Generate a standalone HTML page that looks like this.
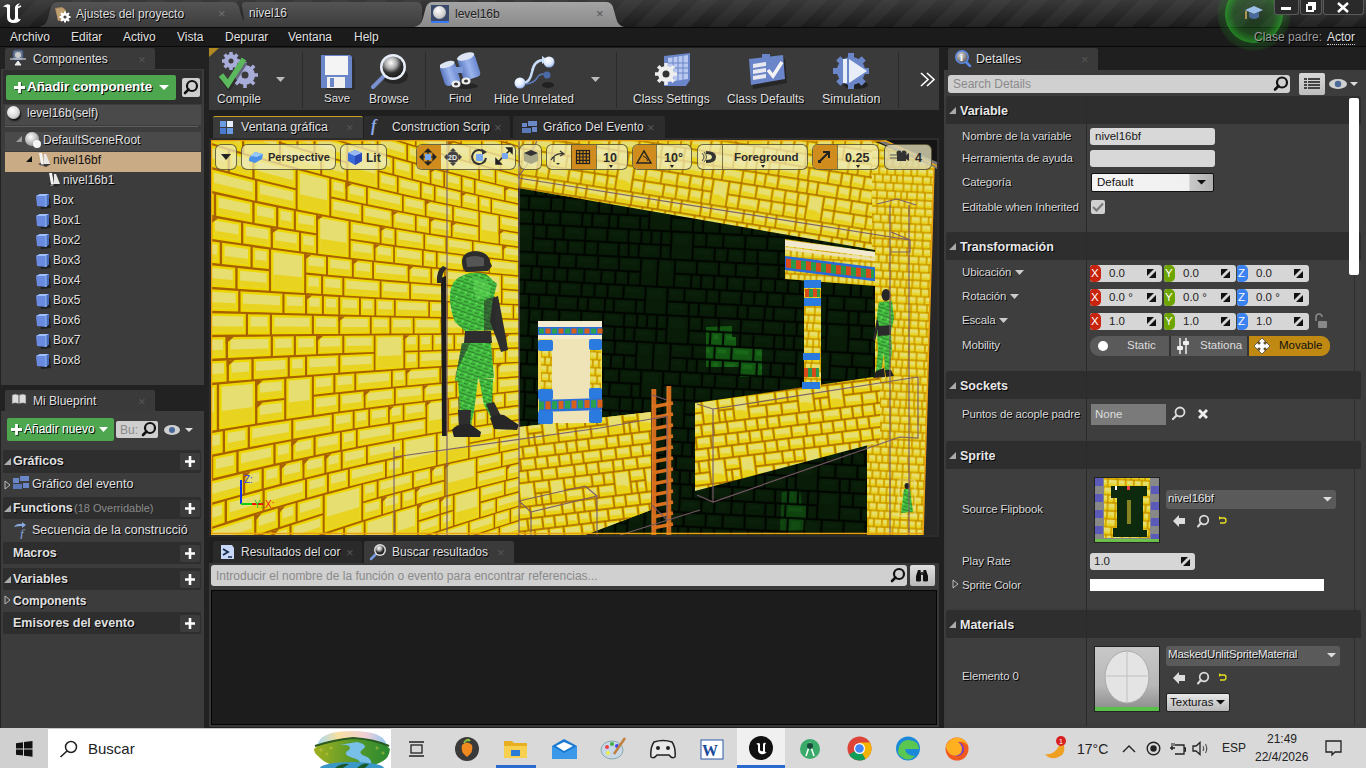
<!DOCTYPE html>
<html><head><meta charset="utf-8">
<style>
*{margin:0;padding:0;box-sizing:border-box}
html,body{width:1366px;height:768px;overflow:hidden;background:#1f1f1f;font-family:"Liberation Sans",sans-serif;color:#d8d8d8;font-size:12px;position:relative}
.a{position:absolute}
.t{position:absolute;white-space:nowrap;line-height:1}
.sh{text-shadow:1px 1px 0 #000}
.b{font-weight:bold}
.x{position:absolute;color:#707070;font-size:13px;line-height:1}
</style></head><body>
<!-- TITLE BAR -->
<div class="a" style="left:0;top:0;width:1366px;height:28px;background:linear-gradient(rgba(70,70,70,.55),rgba(0,0,0,.35)),repeating-linear-gradient(135deg,#353535 0 13px,#282828 13px 26px)"></div>
<svg class="a" style="left:1px;top:1px" width="24" height="24"><path d="M2 6 Q5 2 9 4 L9 15 Q9 19 12 19 Q14 19 14 16 L14 6 Q15 3 19 2 L17 5 L17 16 Q17 19 20 18 Q18 22 13 22 Q6 22 6 16 L6 7 Q5 5 2 6Z" fill="#fff"/><path d="M14 8 L20 5" stroke="#fff" stroke-width="1.5"/></svg>
<!-- tabs -->
<svg class="a" style="left:36px;top:0" width="600" height="28">
<defs>
<linearGradient id="tg1" x1="0" y1="0" x2="0" y2="1"><stop offset="0" stop-color="#545454"/><stop offset="1" stop-color="#3c3c3c"/></linearGradient>
<linearGradient id="tg3" x1="0" y1="0" x2="0" y2="1"><stop offset="0" stop-color="#a4a4a4"/><stop offset="1" stop-color="#8a8a8a"/></linearGradient>
</defs>
<path d="M3 27 Q10 26 12 18 L15 7 Q17 2 22 2 L196 2 Q201 2 203 7 L206 18 Q208 26 215 27Z" fill="url(#tg1)"/>
<path d="M200 27 Q207 26 208 18 L206 7 Q205 2 210 2 L380 2 Q385 2 386 7 L386 18 Q385 26 378 27Z" fill="url(#tg1)"/>
<path d="M378 27 Q385 26 387 18 L390 7 Q392 2 397 2 L570 2 Q575 2 577 7 L580 18 Q582 26 588 27Z" fill="url(#tg3)"/>
</svg>
<svg class="a" style="left:54px;top:6px" width="18" height="17"><path d="M1 2 L8 1 L12 4 L12 14 L4 15 Z" fill="#a88a60"/><path d="M2 3 L9 2 L11 5 L10 13 L4 14Z" fill="#c0a070"/><circle cx="11" cy="11" r="4" fill="#fff"/><g stroke="#fff" stroke-width="2"><path d="M11 5.5 V16.5 M5.5 11 H16.5 M7 7 L15 15 M15 7 L7 15"/></g><circle cx="11" cy="11" r="1.6" fill="#444"/></svg>
<div class="t sh" style="left:76px;top:8px;color:#dcdcdc">Ajustes del proyecto</div>
<div class="x" style="left:218px;top:7px">×</div>
<div class="t sh" style="left:249px;top:7px;color:#dcdcdc">nivel16</div>
<div class="a" style="left:431px;top:5px;width:18px;height:18px;background:#3a4a6a;border-bottom:2px solid #3a7af0"></div>
<div class="a" style="left:433px;top:6px;width:13px;height:13px;border-radius:50%;background:radial-gradient(circle at 40% 35%,#fff,#ccc 60%,#888)"></div>
<div class="t" style="left:455px;top:8px;color:#202020;text-shadow:0 1px 0 #bbb">level16b</div>
<div class="x" style="left:596px;top:7px;color:#555">×</div>

<!-- window buttons -->
<div class="a" style="z-index:5;left:1274px;top:0;width:25px;height:15px;border:1px solid #5a5a5a;border-top:none;border-radius:0 0 3px 3px;background:#2a2a2a"></div>
<div class="a" style="z-index:5;left:1281px;top:7px;width:10px;height:3px;background:#fff"></div>
<div class="a" style="z-index:5;left:1300px;top:0;width:22px;height:15px;border:1px solid #5a5a5a;border-top:none;border-radius:0 0 3px 3px;background:#2a2a2a"></div>
<div class="a" style="z-index:5;left:1308px;top:2px;width:8px;height:8px;border:2px solid #fff"></div>
<div class="a" style="z-index:5;left:1306px;top:4px;width:8px;height:8px;border:2px solid #fff;background:#2a2a2a"></div>
<div class="a" style="z-index:5;left:1323px;top:0;width:41px;height:15px;border:1px solid #5a5a5a;border-top:none;border-radius:0 0 3px 3px;background:#2a2a2a"></div>
<svg class="a" style="z-index:5;left:1337px;top:2px" width="12" height="11"><path d="M1 1 L11 10 M11 1 L1 10" stroke="#fff" stroke-width="2.5"/></svg>

<!-- MENU BAR -->
<div class="a" style="left:0;top:27px;width:1366px;height:20px;background:#1b1b1b;border-top:1px solid #080808;border-bottom:1px solid #080808"></div>
<!-- green glow + cap -->
<div class="a" style="left:1217px;top:-23px;width:74px;height:74px;border-radius:50%;background:radial-gradient(circle closest-side,rgba(40,160,40,.12) 0,rgba(40,170,40,.3) 55%,rgba(40,190,40,.62) 77%,rgba(30,130,30,.3) 79%,rgba(30,120,30,.2) 97%,rgba(0,0,0,0) 100%)"></div>
<svg class="a" style="left:1244px;top:4px" width="20" height="18"><path d="M1 6 L10 2 L19 6 L10 10Z" fill="#9cc0e8"/><path d="M5 8 L5 13 Q10 17 15 13 L15 8 L10 10Z" fill="#4a6a9a"/><path d="M2 7 L2 15" stroke="#d8b060" stroke-width="1.5"/></svg>
<div class="t sh" style="left:10px;top:31px;color:#e0e0e0">Archivo</div>
<div class="t sh" style="left:71px;top:31px;color:#e0e0e0">Editar</div>
<div class="t sh" style="left:123px;top:31px;color:#e0e0e0">Activo</div>
<div class="t sh" style="left:177px;top:31px;color:#e0e0e0">Vista</div>
<div class="t sh" style="left:225px;top:31px;color:#e0e0e0">Depurar</div>
<div class="t sh" style="left:288px;top:31px;color:#e0e0e0">Ventana</div>
<div class="t sh" style="left:354px;top:31px;color:#e0e0e0">Help</div>
<div class="t sh" style="left:1254px;top:31px;color:#9a9a9a">Clase padre:</div>
<div class="t sh" style="left:1327px;top:31px;color:#e0e0e0;border-bottom:1px dotted #ccc;padding-bottom:1px">Actor</div>

<!-- LEFT PANEL -->
<div class="a" style="left:0;top:47px;width:209px;height:681px;background:#222"></div>
<div class="a" style="left:5px;top:48px;width:150px;height:22px;background:#3a3a3a;border-radius:2px 2px 0 0"></div>
<svg class="a" style="left:9px;top:49px" width="18" height="18"><rect x="4" y="1" width="10" height="10" rx="2" fill="#6a7a90" stroke="#3a4a70"/><circle cx="9" cy="6" r="3" fill="#ccc"/><path d="M1 10 L17 10 M9 12 L6 16 L12 16Z" stroke="#eee" fill="#eee"/></svg>
<div class="t sh" style="left:33px;top:53px;color:#e0e0e0">Componentes</div>
<div class="x" style="left:138px;top:53px;color:#555">×</div>
<div class="a" style="left:1px;top:69px;width:203px;height:316px;background:#3c3c3c"></div>
<div class="a" style="left:3px;top:70px;width:199px;height:34px;background:#2e2e2e"></div>
<div class="a" style="left:6px;top:75px;width:170px;height:25px;background:#4ea64e;border-radius:2px"></div>
<svg class="a" style="left:13px;top:81px" width="13" height="13"><path d="M6.5 1 V12 M1 6.5 H12" stroke="#111" stroke-width="3" transform="translate(1,1)" opacity=".6"/><path d="M6.5 1 V12 M1 6.5 H12" stroke="#fff" stroke-width="2.8"/></svg>
<div class="t b sh" style="left:27px;top:80px;color:#fff;font-size:13.5px;letter-spacing:-.1px">Añadir componente</div>
<svg class="a" style="left:159px;top:85px" width="10" height="6"><path d="M0 0 L10 0 L5 5Z" fill="#fff"/></svg>
<div class="a" style="left:182px;top:78px;width:18px;height:19px;background:#cfcfcf;border-radius:2px"></div>
<svg class="a" style="left:183px;top:79px" width="16" height="17"><circle cx="9" cy="7" r="5" fill="none" stroke="#111" stroke-width="2.2"/><path d="M5.5 10.5 L2 14" stroke="#111" stroke-width="2.6" stroke-linecap="round"/></svg>
<div class="a" style="left:5px;top:105px;width:196px;height:20px;background:#4a4a4a"></div>
<div class="a" style="left:5px;top:126px;width:193px;height:1px;background:#606060"></div>
<div class="a" style="left:7px;top:106px;width:13px;height:13px;border-radius:50%;background:radial-gradient(circle at 40% 35%,#fff,#ddd 50%,#999);box-shadow:1px 2px 2px #111"></div>
<div class="t sh" style="left:27px;top:107px;color:#e0e0e0">level16b(self)</div>
<div class="a" style="left:5px;top:132px;width:196px;height:19px;background:#4a4a4a"></div>
<svg class="a" style="left:15px;top:135px" width="8" height="8"><path d="M7 1 L7 7 L1 7Z" fill="#9a9a9a"/></svg>
<div class="a" style="left:25px;top:132px;width:14px;height:14px;border-radius:50%;background:radial-gradient(circle at 40% 35%,#fff,#bbb 50%,#777)"></div>
<div class="a" style="left:33px;top:140px;width:8px;height:8px;border-radius:50%;background:#f4f4f4"></div>
<div class="t sh" style="left:43px;top:134px;color:#e0e0e0">DefaultSceneRoot</div>
<div class="a" style="left:5px;top:152px;width:196px;height:20px;background:#c9ab86"></div>
<svg class="a" style="left:25px;top:155px" width="8" height="8"><path d="M7 1 L7 7 L1 7Z" fill="#111"/></svg>
<svg class="a" style="left:36px;top:152px" width="16" height="16"><path d="M2 12 L10 15 L15 12 L7 10Z" fill="#222" opacity=".8"/><path d="M3 1 L6 1 L8 12 L5 12Z" fill="#f4f4f4"/><path d="M8 2 L10 2 L14 12 L8 12Z" fill="#e8e8e8"/><path d="M5 12 L8 12 L7 14 L4 14Z" fill="#888"/></svg>
<div class="t" style="left:53px;top:154px;color:#111">nivel16bf</div>
<svg class="a" style="left:46px;top:172px" width="16" height="16"><path d="M2 12 L10 15 L15 12 L7 10Z" fill="#222" opacity=".8"/><path d="M3 1 L6 1 L8 12 L5 12Z" fill="#f4f4f4"/><path d="M8 2 L10 2 L14 12 L8 12Z" fill="#e8e8e8"/><path d="M5 12 L8 12 L7 14 L4 14Z" fill="#888"/></svg>
<div class="t sh" style="left:63px;top:174px;color:#e0e0e0">nivel16b1</div>
<svg class="a" style="left:35px;top:193px" width="17" height="17"><path d="M4 6 L15 5 L16 15 L6 16Z" fill="#111" opacity=".7"/><path d="M1 3 L5 1 L14 1 L14 11 L11 14 L2 13Z" fill="#6a8ae0"/><path d="M1 3 L5 1 L14 1 L11 3Z" fill="#a0c0f8"/><path d="M11 3 L14 1 L14 11 L11 14Z" fill="#4a6ac0"/><path d="M11 3 L11 14" stroke="#9ad0f0" stroke-width=".8"/></svg>
<div class="t sh" style="left:53px;top:194px;color:#e0e0e0">Box</div>
<svg class="a" style="left:35px;top:213px" width="17" height="17"><path d="M4 6 L15 5 L16 15 L6 16Z" fill="#111" opacity=".7"/><path d="M1 3 L5 1 L14 1 L14 11 L11 14 L2 13Z" fill="#6a8ae0"/><path d="M1 3 L5 1 L14 1 L11 3Z" fill="#a0c0f8"/><path d="M11 3 L14 1 L14 11 L11 14Z" fill="#4a6ac0"/><path d="M11 3 L11 14" stroke="#9ad0f0" stroke-width=".8"/></svg>
<div class="t sh" style="left:53px;top:214px;color:#e0e0e0">Box1</div>
<svg class="a" style="left:35px;top:233px" width="17" height="17"><path d="M4 6 L15 5 L16 15 L6 16Z" fill="#111" opacity=".7"/><path d="M1 3 L5 1 L14 1 L14 11 L11 14 L2 13Z" fill="#6a8ae0"/><path d="M1 3 L5 1 L14 1 L11 3Z" fill="#a0c0f8"/><path d="M11 3 L14 1 L14 11 L11 14Z" fill="#4a6ac0"/><path d="M11 3 L11 14" stroke="#9ad0f0" stroke-width=".8"/></svg>
<div class="t sh" style="left:53px;top:234px;color:#e0e0e0">Box2</div>
<svg class="a" style="left:35px;top:253px" width="17" height="17"><path d="M4 6 L15 5 L16 15 L6 16Z" fill="#111" opacity=".7"/><path d="M1 3 L5 1 L14 1 L14 11 L11 14 L2 13Z" fill="#6a8ae0"/><path d="M1 3 L5 1 L14 1 L11 3Z" fill="#a0c0f8"/><path d="M11 3 L14 1 L14 11 L11 14Z" fill="#4a6ac0"/><path d="M11 3 L11 14" stroke="#9ad0f0" stroke-width=".8"/></svg>
<div class="t sh" style="left:53px;top:254px;color:#e0e0e0">Box3</div>
<svg class="a" style="left:35px;top:273px" width="17" height="17"><path d="M4 6 L15 5 L16 15 L6 16Z" fill="#111" opacity=".7"/><path d="M1 3 L5 1 L14 1 L14 11 L11 14 L2 13Z" fill="#6a8ae0"/><path d="M1 3 L5 1 L14 1 L11 3Z" fill="#a0c0f8"/><path d="M11 3 L14 1 L14 11 L11 14Z" fill="#4a6ac0"/><path d="M11 3 L11 14" stroke="#9ad0f0" stroke-width=".8"/></svg>
<div class="t sh" style="left:53px;top:274px;color:#e0e0e0">Box4</div>
<svg class="a" style="left:35px;top:293px" width="17" height="17"><path d="M4 6 L15 5 L16 15 L6 16Z" fill="#111" opacity=".7"/><path d="M1 3 L5 1 L14 1 L14 11 L11 14 L2 13Z" fill="#6a8ae0"/><path d="M1 3 L5 1 L14 1 L11 3Z" fill="#a0c0f8"/><path d="M11 3 L14 1 L14 11 L11 14Z" fill="#4a6ac0"/><path d="M11 3 L11 14" stroke="#9ad0f0" stroke-width=".8"/></svg>
<div class="t sh" style="left:53px;top:294px;color:#e0e0e0">Box5</div>
<svg class="a" style="left:35px;top:313px" width="17" height="17"><path d="M4 6 L15 5 L16 15 L6 16Z" fill="#111" opacity=".7"/><path d="M1 3 L5 1 L14 1 L14 11 L11 14 L2 13Z" fill="#6a8ae0"/><path d="M1 3 L5 1 L14 1 L11 3Z" fill="#a0c0f8"/><path d="M11 3 L14 1 L14 11 L11 14Z" fill="#4a6ac0"/><path d="M11 3 L11 14" stroke="#9ad0f0" stroke-width=".8"/></svg>
<div class="t sh" style="left:53px;top:314px;color:#e0e0e0">Box6</div>
<svg class="a" style="left:35px;top:333px" width="17" height="17"><path d="M4 6 L15 5 L16 15 L6 16Z" fill="#111" opacity=".7"/><path d="M1 3 L5 1 L14 1 L14 11 L11 14 L2 13Z" fill="#6a8ae0"/><path d="M1 3 L5 1 L14 1 L11 3Z" fill="#a0c0f8"/><path d="M11 3 L14 1 L14 11 L11 14Z" fill="#4a6ac0"/><path d="M11 3 L11 14" stroke="#9ad0f0" stroke-width=".8"/></svg>
<div class="t sh" style="left:53px;top:334px;color:#e0e0e0">Box7</div>
<svg class="a" style="left:35px;top:353px" width="17" height="17"><path d="M4 6 L15 5 L16 15 L6 16Z" fill="#111" opacity=".7"/><path d="M1 3 L5 1 L14 1 L14 11 L11 14 L2 13Z" fill="#6a8ae0"/><path d="M1 3 L5 1 L14 1 L11 3Z" fill="#a0c0f8"/><path d="M11 3 L14 1 L14 11 L11 14Z" fill="#4a6ac0"/><path d="M11 3 L11 14" stroke="#9ad0f0" stroke-width=".8"/></svg>
<div class="t sh" style="left:53px;top:354px;color:#e0e0e0">Box8</div>

<!-- MI BLUEPRINT -->
<div class="a" style="left:5px;top:390px;width:150px;height:22px;background:#3a3a3a;border-radius:2px 2px 0 0"></div>
<svg class="a" style="left:11px;top:392px" width="16" height="14"><path d="M1 3 Q4 1 8 3 Q12 1 15 3 L15 12 Q12 10 8 12 Q4 10 1 12Z" fill="#ddd" stroke="#555" stroke-width=".7"/><path d="M8 3 L8 12" stroke="#555"/></svg>
<div class="t sh" style="left:33px;top:395px;color:#e0e0e0">Mi Blueprint</div>
<div class="x" style="left:138px;top:395px;color:#555">×</div>
<div class="a" style="left:1px;top:411px;width:203px;height:317px;background:#3c3c3c"></div>
<div class="a" style="left:7px;top:418px;width:107px;height:23px;background:#4ea64e;border-radius:2px"></div>
<svg class="a" style="left:10px;top:423px" width="13" height="13"><path d="M6.5 1 V12 M1 6.5 H12" stroke="#111" stroke-width="3" transform="translate(1,1)" opacity=".6"/><path d="M6.5 1 V12 M1 6.5 H12" stroke="#fff" stroke-width="2.8"/></svg>
<div class="t sh" style="left:24px;top:423px;color:#fff">Añadir nuevo</div>
<svg class="a" style="left:99px;top:427px" width="9" height="6"><path d="M0 0 L9 0 L4.5 5Z" fill="#fff"/></svg>
<div class="a" style="left:116px;top:421px;width:42px;height:17px;background:#cfcfcf;border-radius:2px"></div>
<div class="t" style="left:120px;top:424px;color:#8a8a8a">Bu:</div>
<svg class="a" style="left:141px;top:421px" width="16" height="17"><circle cx="9" cy="7" r="5" fill="none" stroke="#111" stroke-width="2.2"/><path d="M5.5 10.5 L2 14" stroke="#111" stroke-width="2.6" stroke-linecap="round"/></svg>
<svg class="a" style="left:163px;top:423px" width="32" height="14"><ellipse cx="9" cy="7" rx="8" ry="5" fill="#d0d0d0"/><circle cx="9" cy="7" r="3" fill="#4a6a9a"/><path d="M22 5 L30 5 L26 9Z" fill="#ddd"/></svg>
<div class="a" style="left:3px;top:450px;width:198px;height:23px;background:#2e2e2e;border-radius:2px"></div>
<svg class="a" style="left:4px;top:458px" width="8" height="8"><path d="M7 0 L7 7 L0 7Z" fill="#aaa"/></svg>
<div class="t b sh" style="left:13px;top:455px;color:#e0e0e0;font-size:12.5px">Gráficos</div>
<div class="a" style="left:180px;top:453px;width:20px;height:17px;background:#3c3c3c;border-radius:2px"></div><svg class="a" style="left:184px;top:455px" width="12" height="13"><path d="M6 1 L6 12 M1 6.5 L11 6.5" stroke="#fff" stroke-width="2.6"/></svg>
<div class="a" style="left:3px;top:497px;width:198px;height:22px;background:#2e2e2e;border-radius:2px"></div>
<svg class="a" style="left:4px;top:505px" width="8" height="8"><path d="M7 0 L7 7 L0 7Z" fill="#aaa"/></svg>
<div class="t b sh" style="left:13px;top:502px;color:#e0e0e0;font-size:12.5px">Functions</div>
<div class="a" style="left:180px;top:500px;width:20px;height:17px;background:#3c3c3c;border-radius:2px"></div><svg class="a" style="left:184px;top:502px" width="12" height="13"><path d="M6 1 L6 12 M1 6.5 L11 6.5" stroke="#fff" stroke-width="2.6"/></svg>
<div class="a" style="left:3px;top:542px;width:198px;height:22px;background:#2e2e2e;border-radius:2px"></div>
<div class="t b sh" style="left:13px;top:547px;color:#e0e0e0;font-size:12.5px">Macros</div>
<div class="a" style="left:180px;top:545px;width:20px;height:17px;background:#3c3c3c;border-radius:2px"></div><svg class="a" style="left:184px;top:547px" width="12" height="13"><path d="M6 1 L6 12 M1 6.5 L11 6.5" stroke="#fff" stroke-width="2.6"/></svg>
<div class="a" style="left:3px;top:568px;width:198px;height:22px;background:#2e2e2e;border-radius:2px"></div>
<svg class="a" style="left:4px;top:576px" width="8" height="8"><path d="M7 0 L7 7 L0 7Z" fill="#aaa"/></svg>
<div class="t b sh" style="left:13px;top:573px;color:#e0e0e0;font-size:12.5px">Variables</div>
<div class="a" style="left:180px;top:571px;width:20px;height:17px;background:#3c3c3c;border-radius:2px"></div><svg class="a" style="left:184px;top:573px" width="12" height="13"><path d="M6 1 L6 12 M1 6.5 L11 6.5" stroke="#fff" stroke-width="2.6"/></svg>
<div class="a" style="left:3px;top:612px;width:198px;height:22px;background:#2e2e2e;border-radius:2px"></div>
<div class="t b sh" style="left:13px;top:617px;color:#e0e0e0;font-size:12.5px">Emisores del evento</div>
<div class="a" style="left:180px;top:615px;width:20px;height:17px;background:#3c3c3c;border-radius:2px"></div><svg class="a" style="left:184px;top:617px" width="12" height="13"><path d="M6 1 L6 12 M1 6.5 L11 6.5" stroke="#fff" stroke-width="2.6"/></svg>

<div class="t" style="left:74px;top:503px;color:#8a8a8a;font-size:11px">(18 Overridable)</div>
<svg class="a" style="left:4px;top:480px" width="8" height="10"><path d="M1 1 L6 5 L1 9Z" fill="none" stroke="#bbb"/></svg>
<svg class="a" style="left:12px;top:475px" width="18" height="16"><rect x="1" y="3" width="6" height="5" fill="#6a88c8"/><rect x="8" y="1" width="9" height="5" fill="#6a88c8"/><rect x="1" y="9" width="9" height="5" fill="#5a78b8"/><rect x="11" y="8" width="6" height="5" fill="#6a88c8"/></svg>
<div class="t sh" style="left:32px;top:478px;color:#e0e0e0;font-size:12.5px">Gráfico del evento</div>
<svg class="a" style="left:12px;top:521px" width="18" height="18"><path d="M2 6 Q5 2 10 3 L10 1 L14 4 L10 7 L10 5 Q6 5 2 6Z" fill="#88a8e0"/><text x="8" y="17" font-family="Liberation Serif" font-style="italic" font-size="13" fill="#88a8e0">f</text></svg>
<div class="t sh" style="left:32px;top:524px;color:#e0e0e0;font-size:12.5px">Secuencia de la construcció</div>
<svg class="a" style="left:4px;top:595px" width="8" height="10"><path d="M1 1 L6 5 L1 9Z" fill="none" stroke="#bbb"/></svg>
<div class="t b sh" style="left:13px;top:595px;color:#e0e0e0;font-size:12px">Components</div>

<!-- TOOLBAR -->
<div class="a" style="left:209px;top:48px;width:730px;height:62px;background:#3a3a3a"></div>
<svg class="a" style="left:209px;top:48px" width="11" height="10"><path d="M0 0 L10 0 L0 9Z" fill="#b08a20"/></svg>
<div class="a" style="left:302px;top:52px;width:1px;height:56px;background:#2a2a2a"></div>
<div class="a" style="left:425px;top:52px;width:1px;height:56px;background:#2a2a2a"></div>
<div class="a" style="left:616px;top:52px;width:1px;height:56px;background:#2a2a2a"></div>
<div class="a" style="left:898px;top:52px;width:1px;height:56px;background:#2a2a2a"></div>
<!-- compile icon -->
<svg class="a" style="left:218px;top:51px" width="44" height="40">
<g fill="#a8acd8"><circle cx="13" cy="10" r="7"/><circle cx="27" cy="24" r="10"/></g>
<g stroke="#a8acd8" stroke-width="3.5"><path d="M13 1 V19 M4 10 H22 M6.6 3.6 L19.4 16.4 M19.4 3.6 L6.6 16.4"/><path d="M27 11 V37 M14 24 H40 M17.8 14.8 L36.2 33.2 M36.2 14.8 L17.8 33.2"/></g>
<circle cx="13" cy="10" r="2.5" fill="#3a3a3a"/><circle cx="27" cy="24" r="3.5" fill="#3a3a3a"/>
<path d="M3 25 L10 34 L26 9" stroke="#222" stroke-width="6" fill="none" opacity=".5" transform="translate(1,2)"/>
<path d="M3 24 L10 33 L26 8" stroke="#5cb85c" stroke-width="5.5" fill="none"/>
</svg>
<div class="t sh" style="left:217px;top:93px;color:#e0e0e0;font-size:12px">Compile</div>
<svg class="a" style="left:276px;top:77px" width="10" height="6"><path d="M0 0 L9 0 L4.5 5Z" fill="#bbb"/></svg>
<!-- save -->
<svg class="a" style="left:320px;top:54px" width="36" height="36">
<path d="M3 3 L31 3 L33 5 L33 35 L5 35 L3 33Z" fill="#222" opacity=".5" transform="translate(2,1)"/>
<path d="M1 1 L30 1 L32 3 L32 34 L1 34Z" fill="#6a86c8"/>
<rect x="5" y="2" width="23" height="19" fill="#f4f4f4"/>
<rect x="7" y="23" width="18" height="11" fill="#f0f0f0"/><rect x="10" y="24" width="4" height="9" fill="#6a86c8"/>
</svg>
<div class="t sh" style="left:324px;top:93px;color:#e0e0e0;font-size:11.5px">Save</div>
<!-- browse -->
<svg class="a" style="left:369px;top:52px" width="42" height="40">
<ellipse cx="26" cy="24" rx="13" ry="8" fill="#111" opacity=".5"/>
<path d="M17 22 L4 35" stroke="#7890d0" stroke-width="4" stroke-linecap="round"/>
<circle cx="24" cy="15" r="13" fill="#e8eef8"/>
<circle cx="24" cy="15" r="10.5" fill="url(#bg1)"/>
<defs><radialGradient id="bg1" cx=".4" cy=".3" r=".8"><stop offset="0" stop-color="#fff"/><stop offset=".35" stop-color="#aaa"/><stop offset=".6" stop-color="#333"/><stop offset="1" stop-color="#111"/></radialGradient></defs>
</svg>
<div class="t sh" style="left:369px;top:93px;color:#e0e0e0;font-size:12px">Browse</div>
<!-- find -->
<svg class="a" style="left:440px;top:52px" width="42" height="38">
<defs><linearGradient id="bn" x1="0" y1="0" x2="1" y2="0"><stop offset="0" stop-color="#5a78c0"/><stop offset=".5" stop-color="#9ab4ec"/><stop offset="1" stop-color="#6a88d0"/></linearGradient></defs>
<ellipse cx="26" cy="34" rx="12" ry="3" fill="#111" opacity=".5"/>
<g transform="rotate(-18 29 15)"><rect x="20" y="3" width="18" height="24" rx="4" fill="url(#bn)"/><ellipse cx="29" cy="4" rx="9" ry="3.5" fill="#dde4f4"/></g>
<g transform="rotate(-18 10 22)"><rect x="2" y="11" width="16" height="22" rx="4" fill="url(#bn)"/><ellipse cx="10" cy="12" rx="8" ry="3" fill="#dde4f4"/></g>
<rect x="15" y="15" width="8" height="6" fill="#7c98d8"/>
<ellipse cx="16" cy="32" rx="4.5" ry="3.5" fill="#eee"/><ellipse cx="26" cy="29" rx="4.5" ry="3.5" fill="#eee"/>
<ellipse cx="16" cy="32" rx="2" ry="1.5" fill="#333"/><ellipse cx="26" cy="29" rx="2" ry="1.5" fill="#333"/>
</svg>
<div class="t sh" style="left:449px;top:93px;color:#e0e0e0;font-size:11.5px">Find</div>
<!-- hide unrelated -->
<svg class="a" style="left:512px;top:52px" width="44" height="40">
<path d="M12 31 Q18 30 20 20 Q22 8 32 8" stroke="#c8dcf8" stroke-width="2.5" fill="none"/><path d="M30 4 L36 8 L30 12Z" fill="#c8dcf8"/>
<path d="M14 32 Q22 31 25 26 Q27 22 32 22" stroke="#5a7ab8" stroke-width="1.5" fill="none"/>
<ellipse cx="36" cy="33" rx="6" ry="3" fill="#111" opacity=".6"/>
<circle cx="37" cy="10" r="5.5" fill="url(#hs1)"/><circle cx="35" cy="23" r="3.5" fill="#4a6aa8"/><circle cx="8" cy="31" r="5.5" fill="url(#hs1)"/>
<defs><radialGradient id="hs1" cx=".4" cy=".35" r=".7"><stop offset="0" stop-color="#fff"/><stop offset=".6" stop-color="#dde8ff"/><stop offset="1" stop-color="#8aa8e8"/></radialGradient></defs>
</svg>
<div class="t sh" style="left:494px;top:93px;color:#e0e0e0;font-size:12px">Hide Unrelated</div>
<svg class="a" style="left:591px;top:77px" width="10" height="6"><path d="M0 0 L9 0 L4.5 5Z" fill="#bbb"/></svg>
<!-- class settings -->
<svg class="a" style="left:650px;top:52px" width="44" height="38">
<path d="M14 4 L40 1 L40 28 L36 34 L14 34Z" fill="#6a86c8"/>
<path d="M18 6 L38 3 L38 27 L18 30Z" fill="#b8c8f0"/>
<g stroke="#6a86c8" stroke-width="1"><path d="M23 5 V30 M28 4 V29 M33 3 V28 M18 11 H38 M18 16 H38 M18 21 H38"/></g>
<circle cx="16" cy="22" r="8" fill="#eee"/><g stroke="#eee" stroke-width="3.5"><path d="M16 11 V33 M5 22 H27 M8.2 14.2 L23.8 29.8 M23.8 14.2 L8.2 29.8"/></g>
<circle cx="16" cy="22" r="3.5" fill="#333"/>
</svg>
<div class="t sh" style="left:633px;top:93px;color:#e0e0e0;font-size:12px">Class Settings</div>
<!-- class defaults -->
<svg class="a" style="left:746px;top:53px" width="42" height="36">
<path d="M4 8 L38 4 L40 28 L6 34Z" fill="#111" opacity=".5" transform="translate(1,2)"/>
<path d="M3 6 L37 2 L39 26 L5 32Z" fill="#6a86c8"/>
<rect x="16" y="1" width="8" height="4" fill="#6a86c8"/>
<g fill="#e8e8f0"><path d="M7 11 L20 9 L20 13 L7 15Z"/><path d="M7 17 L20 15 L20 19 L7 21Z"/><path d="M7 23 L20 21 L20 25 L7 27Z"/></g>
<path d="M22 17 L27 23 L36 9" stroke="#f4f4f4" stroke-width="3.5" fill="none"/>
</svg>
<div class="t sh" style="left:727px;top:93px;color:#e0e0e0;font-size:12px">Class Defaults</div>
<!-- simulation -->
<svg class="a" style="left:830px;top:52px" width="44" height="40">
<ellipse cx="26" cy="33" rx="12" ry="4" fill="#111" opacity=".6"/>
<circle cx="21" cy="19" r="14" fill="#6a86c8"/><g stroke="#6a86c8" stroke-width="6"><path d="M21 1 V37 M3 19 H39 M8.3 6.3 L33.7 31.7 M33.7 6.3 L8.3 31.7"/></g>
<path d="M13 7 L13 31 L17 31 L17 7Z" fill="#e8eef8"/><path d="M19 7 L37 19 L19 31Z" fill="#e8eef8"/>
</svg>
<div class="t sh" style="left:822px;top:93px;color:#e0e0e0;font-size:12.5px">Simulation</div>
<svg class="a" style="left:919px;top:71px" width="17" height="17"><path d="M2 2 L9 8.5 L2 15 M8 2 L15 8.5 L8 15" stroke="#fff" stroke-width="1.6" fill="none"/></svg>

<!-- VIEWPORT TABS -->
<div class="a" style="left:213px;top:116px;width:150px;height:22px;background:#3a3a3a;border-radius:2px 2px 0 0;border-top:1px solid #c8a020"></div>
<svg class="a" style="left:219px;top:120px" width="15" height="15"><rect x="1" y="1" width="6" height="6" fill="#6a9ae0"/><rect x="8" y="1" width="6" height="6" fill="#e8f0ff"/><rect x="1" y="8" width="6" height="6" fill="#4a7ad0"/><rect x="8" y="8" width="6" height="6" fill="#6a9ae0"/></svg>
<div class="t sh" style="left:241px;top:121px;color:#e0e0e0;font-size:12.5px">Ventana gráfica</div>
<div class="x" style="left:346px;top:121px;color:#555">×</div>
<div class="a" style="left:364px;top:116px;width:146px;height:22px;background:#2c2c2c;border-radius:2px 2px 0 0"></div>
<div class="t" style="left:371px;top:118px;color:#8aa8e8;font-family:'Liberation Serif';font-style:italic;font-size:16px;font-weight:bold">f</div>
<div class="t sh" style="left:392px;top:121px;color:#e0e0e0;font-size:12px">Construction Scrip</div>
<div class="x" style="left:494px;top:121px;color:#555">×</div>
<div class="a" style="left:513px;top:116px;width:152px;height:22px;background:#2c2c2c;border-radius:2px 2px 0 0"></div>
<svg class="a" style="left:521px;top:120px" width="17" height="14"><rect x="1" y="3" width="5" height="4" fill="#6a88c8"/><rect x="7" y="1" width="9" height="5" fill="#6a88c8"/><rect x="1" y="8" width="9" height="5" fill="#5a78b8"/><rect x="11" y="7" width="5" height="5" fill="#6a88c8"/></svg>
<div class="t sh" style="left:543px;top:121px;color:#e0e0e0;font-size:12px">Gráfico Del Evento</div>
<div class="x" style="left:647px;top:121px;color:#555">×</div>
<div class="a" style="left:209px;top:138px;width:730px;height:399px;background:#2c2c2c"></div>
<!-- VIEWPORT SCENE -->
<svg class="a" style="left:211px;top:140px" width="726" height="395" viewBox="211 140 726 395">
<defs>
<pattern id="pA" patternUnits="userSpaceOnUse" width="160" height="120" patternTransform="rotate(3) translate(5,8)"><rect width="160" height="120" fill="#a86000"/><rect x="-13.0" y="1.0" width="28.0" height="18.0" fill="#ecd800"/><rect x="-10.6" y="3.4" width="23.2" height="13.2" fill="#e6de70"/><path d="M-10.6 12.2 Q-1.8 10.4 12.6 13.6 L12.6 16.6 L-10.6 16.6Z" fill="#e8d420"/><rect x="147.0" y="1.0" width="28.0" height="18.0" fill="#ecd800"/><rect x="149.4" y="3.4" width="23.2" height="13.2" fill="#e6de70"/><path d="M149.4 12.2 Q158.2 10.4 172.6 13.6 L172.6 16.6 L149.4 16.6Z" fill="#e8d420"/><rect x="17.0" y="1.0" width="28.0" height="18.0" fill="#ecd800"/><rect x="19.4" y="3.4" width="23.2" height="13.2" fill="#e6de70"/><path d="M19.4 12.2 Q28.2 10.4 42.6 13.6 L42.6 16.6 L19.4 16.6Z" fill="#e8d420"/><rect x="47.0" y="1.0" width="20.0" height="18.0" fill="#ecd800"/><rect x="49.4" y="3.4" width="15.2" height="13.2" fill="#e6de70"/><path d="M49.4 12.2 Q55.0 10.4 64.6 13.6 L64.6 16.6 L49.4 16.6Z" fill="#e8d420"/><rect x="69.0" y="1.0" width="20.0" height="18.0" fill="#ecd800"/><rect x="71.4" y="3.4" width="15.2" height="13.2" fill="#e6de70"/><path d="M71.4 12.2 Q77.0 10.4 86.6 13.6 L86.6 16.6 L71.4 16.6Z" fill="#e8d420"/><rect x="91.0" y="1.0" width="28.0" height="38.0" fill="#ecd800"/><rect x="93.4" y="3.4" width="23.2" height="33.2" fill="#e6de70"/><path d="M93.4 24.6 Q102.2 20.8 116.6 27.6 L116.6 36.6 L93.4 36.6Z" fill="#e8d420"/><rect x="121.0" y="1.0" width="24.0" height="18.0" fill="#ecd800"/><rect x="123.4" y="3.4" width="19.2" height="13.2" fill="#e6de70"/><path d="M123.4 12.2 Q130.6 10.4 142.6 13.6 L142.6 16.6 L123.4 16.6Z" fill="#e8d420"/><rect x="0.0" y="21.0" width="28.0" height="18.0" fill="#ecd800"/><rect x="2.4" y="23.4" width="23.2" height="13.2" fill="#e6de70"/><path d="M2.4 32.2 Q11.2 30.4 25.6 33.6 L25.6 36.6 L2.4 36.6Z" fill="#e8d420"/><rect x="160.0" y="21.0" width="28.0" height="18.0" fill="#ecd800"/><rect x="162.4" y="23.4" width="23.2" height="13.2" fill="#e6de70"/><path d="M162.4 32.2 Q171.2 30.4 185.6 33.6 L185.6 36.6 L162.4 36.6Z" fill="#e8d420"/><rect x="30.0" y="21.0" width="28.0" height="18.0" fill="#ecd800"/><rect x="32.4" y="23.4" width="23.2" height="13.2" fill="#e6de70"/><path d="M32.4 32.2 Q41.2 30.4 55.6 33.6 L55.6 36.6 L32.4 36.6Z" fill="#e8d420"/><rect x="60.0" y="21.0" width="29.0" height="18.0" fill="#ecd800"/><rect x="62.4" y="23.4" width="24.2" height="13.2" fill="#e6de70"/><path d="M62.4 32.2 Q71.6 30.4 86.6 33.6 L86.6 36.6 L62.4 36.6Z" fill="#e8d420"/><rect x="121.0" y="21.0" width="16.0" height="18.0" fill="#ecd800"/><rect x="123.4" y="23.4" width="11.2" height="13.2" fill="#e6de70"/><path d="M123.4 32.2 Q127.4 30.4 134.6 33.6 L134.6 36.6 L123.4 36.6Z" fill="#e8d420"/><rect x="139.0" y="21.0" width="19.0" height="18.0" fill="#ecd800"/><rect x="141.4" y="23.4" width="14.2" height="13.2" fill="#e6de70"/><path d="M141.4 32.2 Q146.6 30.4 155.6 33.6 L155.6 36.6 L141.4 36.6Z" fill="#e8d420"/><rect x="-1.0" y="41.0" width="16.0" height="18.0" fill="#ecd800"/><rect x="1.4" y="43.4" width="11.2" height="13.2" fill="#e6de70"/><path d="M1.4 52.2 Q5.4 50.4 12.6 53.6 L12.6 56.6 L1.4 56.6Z" fill="#e8d420"/><rect x="159.0" y="41.0" width="16.0" height="18.0" fill="#ecd800"/><rect x="161.4" y="43.4" width="11.2" height="13.2" fill="#e6de70"/><path d="M161.4 52.2 Q165.4 50.4 172.6 53.6 L172.6 56.6 L161.4 56.6Z" fill="#e8d420"/><rect x="17.0" y="41.0" width="16.0" height="18.0" fill="#ecd800"/><rect x="19.4" y="43.4" width="11.2" height="13.2" fill="#e6de70"/><path d="M19.4 52.2 Q23.4 50.4 30.6 53.6 L30.6 56.6 L19.4 56.6Z" fill="#e8d420"/><rect x="35.0" y="41.0" width="20.0" height="18.0" fill="#ecd800"/><rect x="37.4" y="43.4" width="15.2" height="13.2" fill="#e6de70"/><path d="M37.4 52.2 Q43.0 50.4 52.6 53.6 L52.6 56.6 L37.4 56.6Z" fill="#e8d420"/><rect x="57.0" y="41.0" width="20.0" height="18.0" fill="#ecd800"/><rect x="59.4" y="43.4" width="15.2" height="13.2" fill="#e6de70"/><path d="M59.4 52.2 Q65.0 50.4 74.6 53.6 L74.6 56.6 L59.4 56.6Z" fill="#e8d420"/><rect x="79.0" y="41.0" width="16.0" height="18.0" fill="#ecd800"/><rect x="81.4" y="43.4" width="11.2" height="13.2" fill="#e6de70"/><path d="M81.4 52.2 Q85.4 50.4 92.6 53.6 L92.6 56.6 L81.4 56.6Z" fill="#e8d420"/><rect x="97.0" y="41.0" width="28.0" height="18.0" fill="#ecd800"/><rect x="99.4" y="43.4" width="23.2" height="13.2" fill="#e6de70"/><path d="M99.4 52.2 Q108.2 50.4 122.6 53.6 L122.6 56.6 L99.4 56.6Z" fill="#e8d420"/><rect x="127.0" y="41.0" width="30.0" height="18.0" fill="#ecd800"/><rect x="129.4" y="43.4" width="25.2" height="13.2" fill="#e6de70"/><path d="M129.4 52.2 Q139.0 50.4 154.6 53.6 L154.6 56.6 L129.4 56.6Z" fill="#e8d420"/><rect x="-7.0" y="61.0" width="28.0" height="18.0" fill="#ecd800"/><rect x="-4.6" y="63.4" width="23.2" height="13.2" fill="#e6de70"/><path d="M-4.6 72.2 Q4.2 70.4 18.6 73.6 L18.6 76.6 L-4.6 76.6Z" fill="#e8d420"/><rect x="153.0" y="61.0" width="28.0" height="18.0" fill="#ecd800"/><rect x="155.4" y="63.4" width="23.2" height="13.2" fill="#e6de70"/><path d="M155.4 72.2 Q164.2 70.4 178.6 73.6 L178.6 76.6 L155.4 76.6Z" fill="#e8d420"/><rect x="23.0" y="61.0" width="16.0" height="18.0" fill="#ecd800"/><rect x="25.4" y="63.4" width="11.2" height="13.2" fill="#e6de70"/><path d="M25.4 72.2 Q29.4 70.4 36.6 73.6 L36.6 76.6 L25.4 76.6Z" fill="#e8d420"/><rect x="41.0" y="61.0" width="24.0" height="18.0" fill="#ecd800"/><rect x="43.4" y="63.4" width="19.2" height="13.2" fill="#e6de70"/><path d="M43.4 72.2 Q50.6 70.4 62.6 73.6 L62.6 76.6 L43.4 76.6Z" fill="#e8d420"/><rect x="67.0" y="61.0" width="24.0" height="18.0" fill="#ecd800"/><rect x="69.4" y="63.4" width="19.2" height="13.2" fill="#e6de70"/><path d="M69.4 72.2 Q76.6 70.4 88.6 73.6 L88.6 76.6 L69.4 76.6Z" fill="#e8d420"/><rect x="93.0" y="61.0" width="20.0" height="18.0" fill="#ecd800"/><rect x="95.4" y="63.4" width="15.2" height="13.2" fill="#e6de70"/><path d="M95.4 72.2 Q101.0 70.4 110.6 73.6 L110.6 76.6 L95.4 76.6Z" fill="#e8d420"/><rect x="115.0" y="61.0" width="24.0" height="18.0" fill="#ecd800"/><rect x="117.4" y="63.4" width="19.2" height="13.2" fill="#e6de70"/><path d="M117.4 72.2 Q124.6 70.4 136.6 73.6 L136.6 76.6 L117.4 76.6Z" fill="#e8d420"/><rect x="141.0" y="61.0" width="10.0" height="18.0" fill="#ecd800"/><rect x="143.4" y="63.4" width="5.2" height="13.2" fill="#e6de70"/><path d="M143.4 72.2 Q145.0 70.4 148.6 73.6 L148.6 76.6 L143.4 76.6Z" fill="#e8d420"/><rect x="1.0" y="81.0" width="16.0" height="18.0" fill="#ecd800"/><rect x="3.4" y="83.4" width="11.2" height="13.2" fill="#e6de70"/><path d="M3.4 92.2 Q7.4 90.4 14.6 93.6 L14.6 96.6 L3.4 96.6Z" fill="#e8d420"/><rect x="19.0" y="81.0" width="16.0" height="18.0" fill="#ecd800"/><rect x="21.4" y="83.4" width="11.2" height="13.2" fill="#e6de70"/><path d="M21.4 92.2 Q25.4 90.4 32.6 93.6 L32.6 96.6 L21.4 96.6Z" fill="#e8d420"/><rect x="37.0" y="81.0" width="28.0" height="18.0" fill="#ecd800"/><rect x="39.4" y="83.4" width="23.2" height="13.2" fill="#e6de70"/><path d="M39.4 92.2 Q48.2 90.4 62.6 93.6 L62.6 96.6 L39.4 96.6Z" fill="#e8d420"/><rect x="67.0" y="81.0" width="16.0" height="18.0" fill="#ecd800"/><rect x="69.4" y="83.4" width="11.2" height="13.2" fill="#e6de70"/><path d="M69.4 92.2 Q73.4 90.4 80.6 93.6 L80.6 96.6 L69.4 96.6Z" fill="#e8d420"/><rect x="85.0" y="81.0" width="24.0" height="18.0" fill="#ecd800"/><rect x="87.4" y="83.4" width="19.2" height="13.2" fill="#e6de70"/><path d="M87.4 92.2 Q94.6 90.4 106.6 93.6 L106.6 96.6 L87.4 96.6Z" fill="#e8d420"/><rect x="111.0" y="81.0" width="28.0" height="38.0" fill="#ecd800"/><rect x="113.4" y="83.4" width="23.2" height="33.2" fill="#e6de70"/><path d="M113.4 104.6 Q122.2 100.8 136.6 107.6 L136.6 116.6 L113.4 116.6Z" fill="#e8d420"/><rect x="141.0" y="81.0" width="18.0" height="18.0" fill="#ecd800"/><rect x="143.4" y="83.4" width="13.2" height="13.2" fill="#e6de70"/><path d="M143.4 92.2 Q148.2 90.4 156.6 93.6 L156.6 96.6 L143.4 96.6Z" fill="#e8d420"/><rect x="-11.0" y="101.0" width="28.0" height="18.0" fill="#ecd800"/><rect x="-8.6" y="103.4" width="23.2" height="13.2" fill="#e6de70"/><path d="M-8.6 112.2 Q0.2 110.4 14.6 113.6 L14.6 116.6 L-8.6 116.6Z" fill="#e8d420"/><rect x="149.0" y="101.0" width="28.0" height="18.0" fill="#ecd800"/><rect x="151.4" y="103.4" width="23.2" height="13.2" fill="#e6de70"/><path d="M151.4 112.2 Q160.2 110.4 174.6 113.6 L174.6 116.6 L151.4 116.6Z" fill="#e8d420"/><rect x="19.0" y="101.0" width="16.0" height="18.0" fill="#ecd800"/><rect x="21.4" y="103.4" width="11.2" height="13.2" fill="#e6de70"/><path d="M21.4 112.2 Q25.4 110.4 32.6 113.6 L32.6 116.6 L21.4 116.6Z" fill="#e8d420"/><rect x="37.0" y="101.0" width="20.0" height="18.0" fill="#ecd800"/><rect x="39.4" y="103.4" width="15.2" height="13.2" fill="#e6de70"/><path d="M39.4 112.2 Q45.0 110.4 54.6 113.6 L54.6 116.6 L39.4 116.6Z" fill="#e8d420"/><rect x="59.0" y="101.0" width="24.0" height="18.0" fill="#ecd800"/><rect x="61.4" y="103.4" width="19.2" height="13.2" fill="#e6de70"/><path d="M61.4 112.2 Q68.6 110.4 80.6 113.6 L80.6 116.6 L61.4 116.6Z" fill="#e8d420"/><rect x="85.0" y="101.0" width="24.0" height="18.0" fill="#ecd800"/><rect x="87.4" y="103.4" width="19.2" height="13.2" fill="#e6de70"/><path d="M87.4 112.2 Q94.6 110.4 106.6 113.6 L106.6 116.6 L87.4 116.6Z" fill="#e8d420"/><rect x="141.0" y="101.0" width="6.0" height="18.0" fill="#ecd800"/><rect x="143.4" y="103.4" width="1.2" height="13.2" fill="#e6de70"/><path d="M143.4 112.2 Q143.4 110.4 144.6 113.6 L144.6 116.6 L143.4 116.6Z" fill="#e8d420"/></pattern>
<pattern id="pB" patternUnits="userSpaceOnUse" width="96" height="60" patternTransform="rotate(-7) translate(0,3)"><rect width="96" height="60" fill="#a86000"/><rect x="-8.2" y="0.8" width="13.5" height="10.5" fill="#ecd800"/><rect x="-7.0" y="1.9" width="11.1" height="8.1" fill="#e6de70"/><path d="M-7.0 7.3 Q-2.8 6.2 4.0 8.1 L4.0 10.1 L-7.0 10.1Z" fill="#e8d420"/><rect x="87.8" y="0.8" width="13.5" height="10.5" fill="#ecd800"/><rect x="89.0" y="1.9" width="11.1" height="8.1" fill="#e6de70"/><path d="M89.0 7.3 Q93.2 6.2 100.0 8.1 L100.0 10.1 L89.0 10.1Z" fill="#e8d420"/><rect x="6.8" y="0.8" width="13.5" height="22.5" fill="#ecd800"/><rect x="8.0" y="1.9" width="11.1" height="20.1" fill="#e6de70"/><path d="M8.0 14.7 Q12.2 12.5 19.1 16.5 L19.1 22.1 L8.0 22.1Z" fill="#e8d420"/><rect x="21.8" y="0.8" width="8.5" height="10.5" fill="#ecd800"/><rect x="22.9" y="1.9" width="6.1" height="8.1" fill="#e6de70"/><path d="M22.9 7.3 Q25.1 6.2 29.1 8.1 L29.1 10.1 L22.9 10.1Z" fill="#e8d420"/><rect x="31.8" y="0.8" width="16.5" height="10.5" fill="#ecd800"/><rect x="33.0" y="1.9" width="14.1" height="8.1" fill="#e6de70"/><path d="M33.0 7.3 Q38.4 6.2 47.0 8.1 L47.0 10.1 L33.0 10.1Z" fill="#e8d420"/><rect x="49.8" y="0.8" width="10.5" height="10.5" fill="#ecd800"/><rect x="51.0" y="1.9" width="8.1" height="8.1" fill="#e6de70"/><path d="M51.0 7.3 Q54.0 6.2 59.0 8.1 L59.0 10.1 L51.0 10.1Z" fill="#e8d420"/><rect x="61.8" y="0.8" width="8.5" height="10.5" fill="#ecd800"/><rect x="63.0" y="1.9" width="6.1" height="8.1" fill="#e6de70"/><path d="M63.0 7.3 Q65.2 6.2 69.0 8.1 L69.0 10.1 L63.0 10.1Z" fill="#e8d420"/><rect x="71.8" y="0.8" width="14.5" height="22.5" fill="#ecd800"/><rect x="73.0" y="1.9" width="12.1" height="20.1" fill="#e6de70"/><path d="M73.0 14.7 Q77.5 12.5 85.0 16.5 L85.0 22.1 L73.0 22.1Z" fill="#e8d420"/><rect x="-2.2" y="12.8" width="7.5" height="10.5" fill="#ecd800"/><rect x="-1.1" y="13.9" width="5.1" height="8.1" fill="#e6de70"/><path d="M-1.1 19.3 Q0.8 18.2 4.0 20.1 L4.0 22.1 L-1.1 22.1Z" fill="#e8d420"/><rect x="93.8" y="12.8" width="7.5" height="10.5" fill="#ecd800"/><rect x="95.0" y="13.9" width="5.1" height="8.1" fill="#e6de70"/><path d="M95.0 19.3 Q96.8 18.2 100.0 20.1 L100.0 22.1 L95.0 22.1Z" fill="#e8d420"/><rect x="21.8" y="12.8" width="16.5" height="10.5" fill="#ecd800"/><rect x="22.9" y="13.9" width="14.1" height="8.1" fill="#e6de70"/><path d="M22.9 19.3 Q28.4 18.2 37.0 20.1 L37.0 22.1 L22.9 22.1Z" fill="#e8d420"/><rect x="39.8" y="12.8" width="13.5" height="10.5" fill="#ecd800"/><rect x="41.0" y="13.9" width="11.1" height="8.1" fill="#e6de70"/><path d="M41.0 19.3 Q45.1 18.2 52.0 20.1 L52.0 22.1 L41.0 22.1Z" fill="#e8d420"/><rect x="54.8" y="12.8" width="15.5" height="10.5" fill="#ecd800"/><rect x="56.0" y="13.9" width="13.1" height="8.1" fill="#e6de70"/><path d="M56.0 19.3 Q61.0 18.2 69.0 20.1 L69.0 22.1 L56.0 22.1Z" fill="#e8d420"/><rect x="87.8" y="12.8" width="4.5" height="10.5" fill="#ecd800"/><rect x="89.0" y="13.9" width="2.1" height="8.1" fill="#e6de70"/><path d="M89.0 19.3 Q89.5 18.2 91.0 20.1 L91.0 22.1 L89.0 22.1Z" fill="#e8d420"/><rect x="-1.2" y="24.8" width="16.5" height="10.5" fill="#ecd800"/><rect x="-0.1" y="25.9" width="14.1" height="8.1" fill="#e6de70"/><path d="M-0.1 31.3 Q5.4 30.2 14.1 32.1 L14.1 34.0 L-0.1 34.0Z" fill="#e8d420"/><rect x="94.8" y="24.8" width="16.5" height="10.5" fill="#ecd800"/><rect x="96.0" y="25.9" width="14.1" height="8.1" fill="#e6de70"/><path d="M96.0 31.3 Q101.3 30.2 110.0 32.1 L110.0 34.0 L96.0 34.0Z" fill="#e8d420"/><rect x="16.8" y="24.8" width="10.5" height="10.5" fill="#ecd800"/><rect x="17.9" y="25.9" width="8.1" height="8.1" fill="#e6de70"/><path d="M17.9 31.3 Q20.9 30.2 26.1 32.1 L26.1 34.0 L17.9 34.0Z" fill="#e8d420"/><rect x="28.8" y="24.8" width="8.5" height="10.5" fill="#ecd800"/><rect x="29.9" y="25.9" width="6.1" height="8.1" fill="#e6de70"/><path d="M29.9 31.3 Q32.1 30.2 36.0 32.1 L36.0 34.0 L29.9 34.0Z" fill="#e8d420"/><rect x="38.8" y="24.8" width="10.5" height="10.5" fill="#ecd800"/><rect x="40.0" y="25.9" width="8.1" height="8.1" fill="#e6de70"/><path d="M40.0 31.3 Q43.0 30.2 48.0 32.1 L48.0 34.0 L40.0 34.0Z" fill="#e8d420"/><rect x="50.8" y="24.8" width="16.5" height="10.5" fill="#ecd800"/><rect x="52.0" y="25.9" width="14.1" height="8.1" fill="#e6de70"/><path d="M52.0 31.3 Q57.4 30.2 66.0 32.1 L66.0 34.0 L52.0 34.0Z" fill="#e8d420"/><rect x="68.8" y="24.8" width="10.5" height="10.5" fill="#ecd800"/><rect x="70.0" y="25.9" width="8.1" height="8.1" fill="#e6de70"/><path d="M70.0 31.3 Q73.0 30.2 78.0 32.1 L78.0 34.0 L70.0 34.0Z" fill="#e8d420"/><rect x="80.8" y="24.8" width="12.5" height="10.5" fill="#ecd800"/><rect x="82.0" y="25.9" width="10.1" height="8.1" fill="#e6de70"/><path d="M82.0 31.3 Q85.8 30.2 92.0 32.1 L92.0 34.0 L82.0 34.0Z" fill="#e8d420"/><rect x="-4.2" y="36.8" width="10.5" height="10.5" fill="#ecd800"/><rect x="-3.0" y="38.0" width="8.1" height="8.1" fill="#e6de70"/><path d="M-3.0 43.3 Q-0.0 42.2 5.0 44.1 L5.0 46.0 L-3.0 46.0Z" fill="#e8d420"/><rect x="91.8" y="36.8" width="10.5" height="10.5" fill="#ecd800"/><rect x="93.0" y="38.0" width="8.1" height="8.1" fill="#e6de70"/><path d="M93.0 43.3 Q96.0 42.2 101.0 44.1 L101.0 46.0 L93.0 46.0Z" fill="#e8d420"/><rect x="7.8" y="36.8" width="10.5" height="10.5" fill="#ecd800"/><rect x="8.9" y="38.0" width="8.1" height="8.1" fill="#e6de70"/><path d="M8.9 43.3 Q11.9 42.2 17.1 44.1 L17.1 46.0 L8.9 46.0Z" fill="#e8d420"/><rect x="19.8" y="36.8" width="10.5" height="10.5" fill="#ecd800"/><rect x="20.9" y="38.0" width="8.1" height="8.1" fill="#e6de70"/><path d="M20.9 43.3 Q23.9 42.2 29.1 44.1 L29.1 46.0 L20.9 46.0Z" fill="#e8d420"/><rect x="31.8" y="36.8" width="10.5" height="10.5" fill="#ecd800"/><rect x="33.0" y="38.0" width="8.1" height="8.1" fill="#e6de70"/><path d="M33.0 43.3 Q36.0 42.2 41.0 44.1 L41.0 46.0 L33.0 46.0Z" fill="#e8d420"/><rect x="43.8" y="36.8" width="16.5" height="10.5" fill="#ecd800"/><rect x="45.0" y="38.0" width="14.1" height="8.1" fill="#e6de70"/><path d="M45.0 43.3 Q50.4 42.2 59.0 44.1 L59.0 46.0 L45.0 46.0Z" fill="#e8d420"/><rect x="61.8" y="36.8" width="13.5" height="10.5" fill="#ecd800"/><rect x="63.0" y="38.0" width="11.1" height="8.1" fill="#e6de70"/><path d="M63.0 43.3 Q67.2 42.2 74.0 44.1 L74.0 46.0 L63.0 46.0Z" fill="#e8d420"/><rect x="76.8" y="36.8" width="13.5" height="10.5" fill="#ecd800"/><rect x="78.0" y="38.0" width="11.1" height="8.1" fill="#e6de70"/><path d="M78.0 43.3 Q82.2 42.2 89.0 44.1 L89.0 46.0 L78.0 46.0Z" fill="#e8d420"/><rect x="0.8" y="48.8" width="13.5" height="10.5" fill="#ecd800"/><rect x="1.9" y="50.0" width="11.1" height="8.1" fill="#e6de70"/><path d="M1.9 55.3 Q6.2 54.2 13.1 56.1 L13.1 58.0 L1.9 58.0Z" fill="#e8d420"/><rect x="15.8" y="48.8" width="16.5" height="10.5" fill="#ecd800"/><rect x="16.9" y="50.0" width="14.1" height="8.1" fill="#e6de70"/><path d="M16.9 55.3 Q22.4 54.2 31.1 56.1 L31.1 58.0 L16.9 58.0Z" fill="#e8d420"/><rect x="33.8" y="48.8" width="10.5" height="10.5" fill="#ecd800"/><rect x="35.0" y="50.0" width="8.1" height="8.1" fill="#e6de70"/><path d="M35.0 55.3 Q38.0 54.2 43.0 56.1 L43.0 58.0 L35.0 58.0Z" fill="#e8d420"/><rect x="45.8" y="48.8" width="10.5" height="10.5" fill="#ecd800"/><rect x="47.0" y="50.0" width="8.1" height="8.1" fill="#e6de70"/><path d="M47.0 55.3 Q50.0 54.2 55.0 56.1 L55.0 58.0 L47.0 58.0Z" fill="#e8d420"/><rect x="57.8" y="48.8" width="13.5" height="10.5" fill="#ecd800"/><rect x="59.0" y="50.0" width="11.1" height="8.1" fill="#e6de70"/><path d="M59.0 55.3 Q63.1 54.2 70.0 56.1 L70.0 58.0 L59.0 58.0Z" fill="#e8d420"/><rect x="72.8" y="48.8" width="8.5" height="10.5" fill="#ecd800"/><rect x="74.0" y="50.0" width="6.1" height="8.1" fill="#e6de70"/><path d="M74.0 55.3 Q76.2 54.2 80.0 56.1 L80.0 58.0 L74.0 58.0Z" fill="#e8d420"/><rect x="82.8" y="48.8" width="12.5" height="10.5" fill="#ecd800"/><rect x="84.0" y="50.0" width="10.1" height="8.1" fill="#e6de70"/><path d="M84.0 55.3 Q87.8 54.2 94.0 56.1 L94.0 58.0 L84.0 58.0Z" fill="#e8d420"/></pattern>
<pattern id="pU" patternUnits="userSpaceOnUse" width="96" height="65" patternTransform="rotate(9)"><rect width="96" height="65" fill="#a86000"/><rect x="-6.3" y="0.7" width="14.7" height="11.7" fill="#ecd800"/><rect x="-5.2" y="1.8" width="12.5" height="9.5" fill="#e6de70"/><path d="M-5.2 7.9 Q-0.5 6.7 7.2 8.8 L7.2 11.2 L-5.2 11.2Z" fill="#e8d420"/><rect x="89.7" y="0.7" width="14.7" height="11.7" fill="#ecd800"/><rect x="90.8" y="1.8" width="12.5" height="9.5" fill="#e6de70"/><path d="M90.8 7.9 Q95.5 6.7 103.3 8.8 L103.3 11.2 L90.8 11.2Z" fill="#e8d420"/><rect x="9.7" y="0.7" width="14.7" height="11.7" fill="#ecd800"/><rect x="10.8" y="1.8" width="12.5" height="9.5" fill="#e6de70"/><path d="M10.8 7.9 Q15.5 6.7 23.2 8.8 L23.2 11.2 L10.8 11.2Z" fill="#e8d420"/><rect x="25.6" y="0.7" width="11.7" height="11.7" fill="#ecd800"/><rect x="26.8" y="1.8" width="9.5" height="9.5" fill="#e6de70"/><path d="M26.8 7.9 Q30.3 6.7 36.2 8.8 L36.2 11.2 L26.8 11.2Z" fill="#e8d420"/><rect x="38.6" y="0.7" width="11.7" height="11.7" fill="#ecd800"/><rect x="39.8" y="1.8" width="9.5" height="9.5" fill="#e6de70"/><path d="M39.8 7.9 Q43.3 6.7 49.2 8.8 L49.2 11.2 L39.8 11.2Z" fill="#e8d420"/><rect x="51.6" y="0.7" width="8.7" height="11.7" fill="#ecd800"/><rect x="52.8" y="1.8" width="6.5" height="9.5" fill="#e6de70"/><path d="M52.8 7.9 Q55.1 6.7 59.2 8.8 L59.2 11.2 L52.8 11.2Z" fill="#e8d420"/><rect x="61.6" y="0.7" width="14.7" height="24.7" fill="#ecd800"/><rect x="62.8" y="1.8" width="12.5" height="22.5" fill="#e6de70"/><path d="M62.8 16.0 Q67.5 13.5 75.2 17.9 L75.2 24.2 L62.8 24.2Z" fill="#e8d420"/><rect x="77.7" y="0.7" width="10.7" height="11.7" fill="#ecd800"/><rect x="78.8" y="1.8" width="8.5" height="9.5" fill="#e6de70"/><path d="M78.8 7.9 Q81.9 6.7 87.3 8.8 L87.3 11.2 L78.8 11.2Z" fill="#e8d420"/><rect x="-6.3" y="13.7" width="18.7" height="11.7" fill="#ecd800"/><rect x="-5.2" y="14.8" width="16.5" height="9.5" fill="#e6de70"/><path d="M-5.2 20.9 Q1.1 19.7 11.2 21.8 L11.2 24.2 L-5.2 24.2Z" fill="#e8d420"/><rect x="89.7" y="13.7" width="18.7" height="11.7" fill="#ecd800"/><rect x="90.8" y="14.8" width="16.5" height="9.5" fill="#e6de70"/><path d="M90.8 20.9 Q97.1 19.7 107.3 21.8 L107.3 24.2 L90.8 24.2Z" fill="#e8d420"/><rect x="13.7" y="13.7" width="11.7" height="11.7" fill="#ecd800"/><rect x="14.8" y="14.8" width="9.5" height="9.5" fill="#e6de70"/><path d="M14.8 20.9 Q18.3 19.7 24.2 21.8 L24.2 24.2 L14.8 24.2Z" fill="#e8d420"/><rect x="26.6" y="13.7" width="11.7" height="11.7" fill="#ecd800"/><rect x="27.8" y="14.8" width="9.5" height="9.5" fill="#e6de70"/><path d="M27.8 20.9 Q31.3 19.7 37.2 21.8 L37.2 24.2 L27.8 24.2Z" fill="#e8d420"/><rect x="39.6" y="13.7" width="11.7" height="11.7" fill="#ecd800"/><rect x="40.8" y="14.8" width="9.5" height="9.5" fill="#e6de70"/><path d="M40.8 20.9 Q44.3 19.7 50.2 21.8 L50.2 24.2 L40.8 24.2Z" fill="#e8d420"/><rect x="52.6" y="13.7" width="7.7" height="11.7" fill="#ecd800"/><rect x="53.8" y="14.8" width="5.5" height="9.5" fill="#e6de70"/><path d="M53.8 20.9 Q55.7 19.7 59.2 21.8 L59.2 24.2 L53.8 24.2Z" fill="#e8d420"/><rect x="77.7" y="13.7" width="10.7" height="11.7" fill="#ecd800"/><rect x="78.8" y="14.8" width="8.5" height="9.5" fill="#e6de70"/><path d="M78.8 20.9 Q81.9 19.7 87.3 21.8 L87.3 24.2 L78.8 24.2Z" fill="#e8d420"/><rect x="0.7" y="26.6" width="8.7" height="11.7" fill="#ecd800"/><rect x="1.8" y="27.8" width="6.5" height="9.5" fill="#e6de70"/><path d="M1.8 33.9 Q4.1 32.7 8.2 34.8 L8.2 37.2 L1.8 37.2Z" fill="#e8d420"/><rect x="10.7" y="26.6" width="11.7" height="11.7" fill="#ecd800"/><rect x="11.8" y="27.8" width="9.5" height="9.5" fill="#e6de70"/><path d="M11.8 33.9 Q15.3 32.7 21.2 34.8 L21.2 37.2 L11.8 37.2Z" fill="#e8d420"/><rect x="23.6" y="26.6" width="8.7" height="11.7" fill="#ecd800"/><rect x="24.8" y="27.8" width="6.5" height="9.5" fill="#e6de70"/><path d="M24.8 33.9 Q27.1 32.7 31.2 34.8 L31.2 37.2 L24.8 37.2Z" fill="#e8d420"/><rect x="33.6" y="26.6" width="18.7" height="11.7" fill="#ecd800"/><rect x="34.8" y="27.8" width="16.5" height="9.5" fill="#e6de70"/><path d="M34.8 33.9 Q41.1 32.7 51.2 34.8 L51.2 37.2 L34.8 37.2Z" fill="#e8d420"/><rect x="53.6" y="26.6" width="8.7" height="11.7" fill="#ecd800"/><rect x="54.8" y="27.8" width="6.5" height="9.5" fill="#e6de70"/><path d="M54.8 33.9 Q57.1 32.7 61.2 34.8 L61.2 37.2 L54.8 37.2Z" fill="#e8d420"/><rect x="63.6" y="26.6" width="14.7" height="11.7" fill="#ecd800"/><rect x="64.8" y="27.8" width="12.5" height="9.5" fill="#e6de70"/><path d="M64.8 33.9 Q69.5 32.7 77.2 34.8 L77.2 37.2 L64.8 37.2Z" fill="#e8d420"/><rect x="79.7" y="26.6" width="15.7" height="11.7" fill="#ecd800"/><rect x="80.8" y="27.8" width="13.5" height="9.5" fill="#e6de70"/><path d="M80.8 33.9 Q85.9 32.7 94.3 34.8 L94.3 37.2 L80.8 37.2Z" fill="#e8d420"/><rect x="-4.3" y="39.6" width="8.7" height="11.7" fill="#ecd800"/><rect x="-3.2" y="40.8" width="6.5" height="9.5" fill="#e6de70"/><path d="M-3.2 46.9 Q-0.9 45.7 3.2 47.8 L3.2 50.2 L-3.2 50.2Z" fill="#e8d420"/><rect x="91.7" y="39.6" width="8.7" height="11.7" fill="#ecd800"/><rect x="92.8" y="40.8" width="6.5" height="9.5" fill="#e6de70"/><path d="M92.8 46.9 Q95.1 45.7 99.3 47.8 L99.3 50.2 L92.8 50.2Z" fill="#e8d420"/><rect x="5.7" y="39.6" width="11.7" height="11.7" fill="#ecd800"/><rect x="6.8" y="40.8" width="9.5" height="9.5" fill="#e6de70"/><path d="M6.8 46.9 Q10.3 45.7 16.2 47.8 L16.2 50.2 L6.8 50.2Z" fill="#e8d420"/><rect x="18.6" y="39.6" width="8.7" height="11.7" fill="#ecd800"/><rect x="19.8" y="40.8" width="6.5" height="9.5" fill="#e6de70"/><path d="M19.8 46.9 Q22.1 45.7 26.2 47.8 L26.2 50.2 L19.8 50.2Z" fill="#e8d420"/><rect x="28.6" y="39.6" width="18.7" height="11.7" fill="#ecd800"/><rect x="29.8" y="40.8" width="16.5" height="9.5" fill="#e6de70"/><path d="M29.8 46.9 Q36.1 45.7 46.2 47.8 L46.2 50.2 L29.8 50.2Z" fill="#e8d420"/><rect x="48.6" y="39.6" width="8.7" height="11.7" fill="#ecd800"/><rect x="49.8" y="40.8" width="6.5" height="9.5" fill="#e6de70"/><path d="M49.8 46.9 Q52.1 45.7 56.2 47.8 L56.2 50.2 L49.8 50.2Z" fill="#e8d420"/><rect x="58.6" y="39.6" width="18.7" height="11.7" fill="#ecd800"/><rect x="59.8" y="40.8" width="16.5" height="9.5" fill="#e6de70"/><path d="M59.8 46.9 Q66.1 45.7 76.2 47.8 L76.2 50.2 L59.8 50.2Z" fill="#e8d420"/><rect x="78.7" y="39.6" width="11.7" height="11.7" fill="#ecd800"/><rect x="79.8" y="40.8" width="9.5" height="9.5" fill="#e6de70"/><path d="M79.8 46.9 Q83.3 45.7 89.3 47.8 L89.3 50.2 L79.8 50.2Z" fill="#e8d420"/><rect x="-6.3" y="52.6" width="11.7" height="11.7" fill="#ecd800"/><rect x="-5.2" y="53.8" width="9.5" height="9.5" fill="#e6de70"/><path d="M-5.2 59.9 Q-1.7 58.7 4.2 60.8 L4.2 63.2 L-5.2 63.2Z" fill="#e8d420"/><rect x="89.7" y="52.6" width="11.7" height="11.7" fill="#ecd800"/><rect x="90.8" y="53.8" width="9.5" height="9.5" fill="#e6de70"/><path d="M90.8 59.9 Q94.3 58.7 100.3 60.8 L100.3 63.2 L90.8 63.2Z" fill="#e8d420"/><rect x="6.7" y="52.6" width="8.7" height="11.7" fill="#ecd800"/><rect x="7.8" y="53.8" width="6.5" height="9.5" fill="#e6de70"/><path d="M7.8 59.9 Q10.1 58.7 14.2 60.8 L14.2 63.2 L7.8 63.2Z" fill="#e8d420"/><rect x="16.6" y="52.6" width="11.7" height="11.7" fill="#ecd800"/><rect x="17.8" y="53.8" width="9.5" height="9.5" fill="#e6de70"/><path d="M17.8 59.9 Q21.3 58.7 27.2 60.8 L27.2 63.2 L17.8 63.2Z" fill="#e8d420"/><rect x="29.6" y="52.6" width="18.7" height="11.7" fill="#ecd800"/><rect x="30.8" y="53.8" width="16.5" height="9.5" fill="#e6de70"/><path d="M30.8 59.9 Q37.1 58.7 47.2 60.8 L47.2 63.2 L30.8 63.2Z" fill="#e8d420"/><rect x="49.6" y="52.6" width="8.7" height="11.7" fill="#ecd800"/><rect x="50.8" y="53.8" width="6.5" height="9.5" fill="#e6de70"/><path d="M50.8 59.9 Q53.1 58.7 57.2 60.8 L57.2 63.2 L50.8 63.2Z" fill="#e8d420"/><rect x="59.6" y="52.6" width="8.7" height="11.7" fill="#ecd800"/><rect x="60.8" y="53.8" width="6.5" height="9.5" fill="#e6de70"/><path d="M60.8 59.9 Q63.1 58.7 67.2 60.8 L67.2 63.2 L60.8 63.2Z" fill="#e8d420"/><rect x="69.7" y="52.6" width="18.7" height="11.7" fill="#ecd800"/><rect x="70.8" y="53.8" width="16.5" height="9.5" fill="#e6de70"/><path d="M70.8 59.9 Q77.1 58.7 87.3 60.8 L87.3 63.2 L70.8 63.2Z" fill="#e8d420"/></pattern>
<pattern id="pC" patternUnits="userSpaceOnUse" width="48" height="40" patternTransform="rotate(3)"><rect width="48" height="40" fill="#b87000"/><rect x="-0.6" y="0.5" width="7.1" height="7.1" fill="#ecd800"/><rect x="0.1" y="1.1" width="5.7" height="5.7" fill="#e6de70"/><path d="M0.1 4.9 Q2.3 4.1 5.8 5.4 L5.8 6.8 L0.1 6.8Z" fill="#e8d420"/><rect x="47.5" y="0.5" width="7.1" height="7.1" fill="#ecd800"/><rect x="48.2" y="1.1" width="5.7" height="5.7" fill="#e6de70"/><path d="M48.2 4.9 Q50.3 4.1 53.9 5.4 L53.9 6.8 L48.2 6.8Z" fill="#e8d420"/><rect x="7.5" y="0.5" width="5.1" height="7.1" fill="#ecd800"/><rect x="8.2" y="1.1" width="3.7" height="5.7" fill="#e6de70"/><path d="M8.2 4.9 Q9.5 4.1 11.9 5.4 L11.9 6.8 L8.2 6.8Z" fill="#e8d420"/><rect x="13.4" y="0.5" width="9.1" height="7.1" fill="#ecd800"/><rect x="14.1" y="1.1" width="7.7" height="5.7" fill="#e6de70"/><path d="M14.1 4.9 Q17.1 4.1 21.8 5.4 L21.8 6.8 L14.1 6.8Z" fill="#e8d420"/><rect x="23.4" y="0.5" width="7.1" height="7.1" fill="#ecd800"/><rect x="24.1" y="1.1" width="5.7" height="5.7" fill="#e6de70"/><path d="M24.1 4.9 Q26.3 4.1 29.8 5.4 L29.8 6.8 L24.1 6.8Z" fill="#e8d420"/><rect x="31.4" y="0.5" width="7.1" height="7.1" fill="#ecd800"/><rect x="32.1" y="1.1" width="5.7" height="5.7" fill="#e6de70"/><path d="M32.1 4.9 Q34.3 4.1 37.8 5.4 L37.8 6.8 L32.1 6.8Z" fill="#e8d420"/><rect x="39.5" y="0.5" width="7.1" height="7.1" fill="#ecd800"/><rect x="40.2" y="1.1" width="5.7" height="5.7" fill="#e6de70"/><path d="M40.2 4.9 Q42.3 4.1 45.9 5.4 L45.9 6.8 L40.2 6.8Z" fill="#e8d420"/><rect x="-0.6" y="8.4" width="9.1" height="7.1" fill="#ecd800"/><rect x="0.1" y="9.1" width="7.7" height="5.7" fill="#e6de70"/><path d="M0.1 12.9 Q3.1 12.1 7.8 13.4 L7.8 14.8 L0.1 14.8Z" fill="#e8d420"/><rect x="47.5" y="8.4" width="9.1" height="7.1" fill="#ecd800"/><rect x="48.2" y="9.1" width="7.7" height="5.7" fill="#e6de70"/><path d="M48.2 12.9 Q51.1 12.1 55.9 13.4 L55.9 14.8 L48.2 14.8Z" fill="#e8d420"/><rect x="9.4" y="8.4" width="9.1" height="7.1" fill="#ecd800"/><rect x="10.1" y="9.1" width="7.7" height="5.7" fill="#e6de70"/><path d="M10.1 12.9 Q13.1 12.1 17.8 13.4 L17.8 14.8 L10.1 14.8Z" fill="#e8d420"/><rect x="19.4" y="8.4" width="7.1" height="7.1" fill="#ecd800"/><rect x="20.1" y="9.1" width="5.7" height="5.7" fill="#e6de70"/><path d="M20.1 12.9 Q22.3 12.1 25.8 13.4 L25.8 14.8 L20.1 14.8Z" fill="#e8d420"/><rect x="27.4" y="8.4" width="7.1" height="7.1" fill="#ecd800"/><rect x="28.1" y="9.1" width="5.7" height="5.7" fill="#e6de70"/><path d="M28.1 12.9 Q30.3 12.1 33.8 13.4 L33.8 14.8 L28.1 14.8Z" fill="#e8d420"/><rect x="35.5" y="8.4" width="5.1" height="7.1" fill="#ecd800"/><rect x="36.2" y="9.1" width="3.7" height="5.7" fill="#e6de70"/><path d="M36.2 12.9 Q37.5 12.1 39.9 13.4 L39.9 14.8 L36.2 14.8Z" fill="#e8d420"/><rect x="41.5" y="8.4" width="5.1" height="7.1" fill="#ecd800"/><rect x="42.2" y="9.1" width="3.7" height="5.7" fill="#e6de70"/><path d="M42.2 12.9 Q43.5 12.1 45.9 13.4 L45.9 14.8 L42.2 14.8Z" fill="#e8d420"/><rect x="0.5" y="16.4" width="7.1" height="7.1" fill="#ecd800"/><rect x="1.1" y="17.1" width="5.7" height="5.7" fill="#e6de70"/><path d="M1.1 20.9 Q3.3 20.1 6.8 21.4 L6.8 22.8 L1.1 22.8Z" fill="#e8d420"/><rect x="8.4" y="16.4" width="5.1" height="7.1" fill="#ecd800"/><rect x="9.1" y="17.1" width="3.7" height="5.7" fill="#e6de70"/><path d="M9.1 20.9 Q10.5 20.1 12.8 21.4 L12.8 22.8 L9.1 22.8Z" fill="#e8d420"/><rect x="14.4" y="16.4" width="5.1" height="7.1" fill="#ecd800"/><rect x="15.1" y="17.1" width="3.7" height="5.7" fill="#e6de70"/><path d="M15.1 20.9 Q16.5 20.1 18.8 21.4 L18.8 22.8 L15.1 22.8Z" fill="#e8d420"/><rect x="20.4" y="16.4" width="9.1" height="7.1" fill="#ecd800"/><rect x="21.1" y="17.1" width="7.7" height="5.7" fill="#e6de70"/><path d="M21.1 20.9 Q24.1 20.1 28.8 21.4 L28.8 22.8 L21.1 22.8Z" fill="#e8d420"/><rect x="30.4" y="16.4" width="7.1" height="7.1" fill="#ecd800"/><rect x="31.1" y="17.1" width="5.7" height="5.7" fill="#e6de70"/><path d="M31.1 20.9 Q33.3 20.1 36.8 21.4 L36.8 22.8 L31.1 22.8Z" fill="#e8d420"/><rect x="38.5" y="16.4" width="9.1" height="7.1" fill="#ecd800"/><rect x="39.2" y="17.1" width="7.7" height="5.7" fill="#e6de70"/><path d="M39.2 20.9 Q42.1 20.1 46.9 21.4 L46.9 22.8 L39.2 22.8Z" fill="#e8d420"/><rect x="-1.6" y="24.4" width="5.1" height="7.1" fill="#ecd800"/><rect x="-0.9" y="25.1" width="3.7" height="5.7" fill="#e6de70"/><path d="M-0.9 28.9 Q0.5 28.1 2.8 29.4 L2.8 30.8 L-0.9 30.8Z" fill="#e8d420"/><rect x="46.5" y="24.4" width="5.1" height="7.1" fill="#ecd800"/><rect x="47.2" y="25.1" width="3.7" height="5.7" fill="#e6de70"/><path d="M47.2 28.9 Q48.5 28.1 50.9 29.4 L50.9 30.8 L47.2 30.8Z" fill="#e8d420"/><rect x="4.5" y="24.4" width="9.1" height="7.1" fill="#ecd800"/><rect x="5.2" y="25.1" width="7.7" height="5.7" fill="#e6de70"/><path d="M5.2 28.9 Q8.1 28.1 12.9 29.4 L12.9 30.8 L5.2 30.8Z" fill="#e8d420"/><rect x="14.4" y="24.4" width="7.1" height="7.1" fill="#ecd800"/><rect x="15.1" y="25.1" width="5.7" height="5.7" fill="#e6de70"/><path d="M15.1 28.9 Q17.3 28.1 20.8 29.4 L20.8 30.8 L15.1 30.8Z" fill="#e8d420"/><rect x="22.4" y="24.4" width="9.1" height="7.1" fill="#ecd800"/><rect x="23.1" y="25.1" width="7.7" height="5.7" fill="#e6de70"/><path d="M23.1 28.9 Q26.1 28.1 30.8 29.4 L30.8 30.8 L23.1 30.8Z" fill="#e8d420"/><rect x="32.5" y="24.4" width="7.1" height="7.1" fill="#ecd800"/><rect x="33.2" y="25.1" width="5.7" height="5.7" fill="#e6de70"/><path d="M33.2 28.9 Q35.3 28.1 38.9 29.4 L38.9 30.8 L33.2 30.8Z" fill="#e8d420"/><rect x="40.5" y="24.4" width="5.1" height="7.1" fill="#ecd800"/><rect x="41.2" y="25.1" width="3.7" height="5.7" fill="#e6de70"/><path d="M41.2 28.9 Q42.5 28.1 44.9 29.4 L44.9 30.8 L41.2 30.8Z" fill="#e8d420"/><rect x="-3.5" y="32.5" width="5.1" height="7.1" fill="#ecd800"/><rect x="-2.8" y="33.2" width="3.7" height="5.7" fill="#e6de70"/><path d="M-2.8 36.9 Q-1.5 36.1 0.8 37.4 L0.8 38.9 L-2.8 38.9Z" fill="#e8d420"/><rect x="44.5" y="32.5" width="5.1" height="7.1" fill="#ecd800"/><rect x="45.2" y="33.2" width="3.7" height="5.7" fill="#e6de70"/><path d="M45.2 36.9 Q46.5 36.1 48.9 37.4 L48.9 38.9 L45.2 38.9Z" fill="#e8d420"/><rect x="2.5" y="32.5" width="5.1" height="7.1" fill="#ecd800"/><rect x="3.2" y="33.2" width="3.7" height="5.7" fill="#e6de70"/><path d="M3.2 36.9 Q4.5 36.1 6.8 37.4 L6.8 38.9 L3.2 38.9Z" fill="#e8d420"/><rect x="8.4" y="32.5" width="5.1" height="7.1" fill="#ecd800"/><rect x="9.1" y="33.2" width="3.7" height="5.7" fill="#e6de70"/><path d="M9.1 36.9 Q10.5 36.1 12.8 37.4 L12.8 38.9 L9.1 38.9Z" fill="#e8d420"/><rect x="14.4" y="32.5" width="7.1" height="7.1" fill="#ecd800"/><rect x="15.1" y="33.2" width="5.7" height="5.7" fill="#e6de70"/><path d="M15.1 36.9 Q17.3 36.1 20.8 37.4 L20.8 38.9 L15.1 38.9Z" fill="#e8d420"/><rect x="22.4" y="32.5" width="7.1" height="7.1" fill="#ecd800"/><rect x="23.1" y="33.2" width="5.7" height="5.7" fill="#e6de70"/><path d="M23.1 36.9 Q25.3 36.1 28.8 37.4 L28.8 38.9 L23.1 38.9Z" fill="#e8d420"/><rect x="30.4" y="32.5" width="5.1" height="7.1" fill="#ecd800"/><rect x="31.1" y="33.2" width="3.7" height="5.7" fill="#e6de70"/><path d="M31.1 36.9 Q32.5 36.1 34.8 37.4 L34.8 38.9 L31.1 38.9Z" fill="#e8d420"/><rect x="36.5" y="32.5" width="7.1" height="7.1" fill="#ecd800"/><rect x="37.2" y="33.2" width="5.7" height="5.7" fill="#e6de70"/><path d="M37.2 36.9 Q39.3 36.1 42.9 37.4 L42.9 38.9 L37.2 38.9Z" fill="#e8d420"/></pattern>
<pattern id="pD" patternUnits="userSpaceOnUse" width="160" height="84" patternTransform="rotate(3)"><rect width="160" height="84" fill="#010601"/><rect x="-1.0" y="1.0" width="19.8" height="11.8" fill="#081c08"/><rect x="1.0" y="3.0" width="14.0" height="4.2" fill="#0b220b" opacity=".7"/><rect x="159.0" y="1.0" width="19.8" height="11.8" fill="#081c08"/><rect x="161.0" y="3.0" width="14.0" height="4.2" fill="#0b220b" opacity=".7"/><rect x="21.0" y="1.0" width="19.8" height="25.8" fill="#081c08"/><rect x="23.0" y="3.0" width="14.0" height="8.4" fill="#0b220b" opacity=".7"/><rect x="43.0" y="1.0" width="14.8" height="11.8" fill="#081c08"/><rect x="45.0" y="3.0" width="9.0" height="4.2" fill="#0b220b" opacity=".7"/><rect x="60.0" y="1.0" width="19.8" height="11.8" fill="#081c08"/><rect x="62.0" y="3.0" width="14.0" height="4.2" fill="#0b220b" opacity=".7"/><rect x="82.0" y="1.0" width="10.8" height="11.8" fill="#081c08"/><rect x="84.0" y="3.0" width="5.0" height="4.2" fill="#0b220b" opacity=".7"/><rect x="95.0" y="1.0" width="19.8" height="11.8" fill="#081c08"/><rect x="97.0" y="3.0" width="14.0" height="4.2" fill="#0b220b" opacity=".7"/><rect x="117.0" y="1.0" width="10.8" height="11.8" fill="#081c08"/><rect x="119.0" y="3.0" width="5.0" height="4.2" fill="#0b220b" opacity=".7"/><rect x="130.0" y="1.0" width="10.8" height="11.8" fill="#081c08"/><rect x="132.0" y="3.0" width="5.0" height="4.2" fill="#0b220b" opacity=".7"/><rect x="143.0" y="1.0" width="13.8" height="11.8" fill="#081c08"/><rect x="145.0" y="3.0" width="8.0" height="4.2" fill="#0b220b" opacity=".7"/><rect x="-10.0" y="15.0" width="19.8" height="11.8" fill="#081c08"/><rect x="-8.0" y="17.0" width="14.0" height="4.2" fill="#0b220b" opacity=".7"/><rect x="150.0" y="15.0" width="19.8" height="11.8" fill="#081c08"/><rect x="152.0" y="17.0" width="14.0" height="4.2" fill="#0b220b" opacity=".7"/><rect x="12.0" y="15.0" width="6.8" height="11.8" fill="#081c08"/><rect x="14.0" y="17.0" width="2.0" height="4.2" fill="#0b220b" opacity=".7"/><rect x="43.0" y="15.0" width="19.8" height="11.8" fill="#081c08"/><rect x="45.0" y="17.0" width="14.0" height="4.2" fill="#0b220b" opacity=".7"/><rect x="65.0" y="15.0" width="7.8" height="11.8" fill="#081c08"/><rect x="67.0" y="17.0" width="2.0" height="4.2" fill="#0b220b" opacity=".7"/><rect x="75.0" y="15.0" width="14.8" height="11.8" fill="#081c08"/><rect x="77.0" y="17.0" width="9.0" height="4.2" fill="#0b220b" opacity=".7"/><rect x="92.0" y="15.0" width="19.8" height="11.8" fill="#081c08"/><rect x="94.0" y="17.0" width="14.0" height="4.2" fill="#0b220b" opacity=".7"/><rect x="114.0" y="15.0" width="7.8" height="11.8" fill="#081c08"/><rect x="116.0" y="17.0" width="2.0" height="4.2" fill="#0b220b" opacity=".7"/><rect x="124.0" y="15.0" width="14.8" height="11.8" fill="#081c08"/><rect x="126.0" y="17.0" width="9.0" height="4.2" fill="#0b220b" opacity=".7"/><rect x="141.0" y="15.0" width="6.8" height="11.8" fill="#081c08"/><rect x="143.0" y="17.0" width="2.0" height="4.2" fill="#0b220b" opacity=".7"/><rect x="1.0" y="29.0" width="10.8" height="11.8" fill="#081c08"/><rect x="3.0" y="31.0" width="5.0" height="4.2" fill="#0b220b" opacity=".7"/><rect x="14.0" y="29.0" width="7.8" height="11.8" fill="#081c08"/><rect x="16.0" y="31.0" width="2.0" height="4.2" fill="#0b220b" opacity=".7"/><rect x="24.0" y="29.0" width="7.8" height="11.8" fill="#081c08"/><rect x="26.0" y="31.0" width="2.0" height="4.2" fill="#0b220b" opacity=".7"/><rect x="34.0" y="29.0" width="7.8" height="11.8" fill="#081c08"/><rect x="36.0" y="31.0" width="2.0" height="4.2" fill="#0b220b" opacity=".7"/><rect x="44.0" y="29.0" width="19.8" height="25.8" fill="#081c08"/><rect x="46.0" y="31.0" width="14.0" height="8.4" fill="#0b220b" opacity=".7"/><rect x="66.0" y="29.0" width="10.8" height="11.8" fill="#081c08"/><rect x="68.0" y="31.0" width="5.0" height="4.2" fill="#0b220b" opacity=".7"/><rect x="79.0" y="29.0" width="14.8" height="11.8" fill="#081c08"/><rect x="81.0" y="31.0" width="9.0" height="4.2" fill="#0b220b" opacity=".7"/><rect x="96.0" y="29.0" width="19.8" height="11.8" fill="#081c08"/><rect x="98.0" y="31.0" width="14.0" height="4.2" fill="#0b220b" opacity=".7"/><rect x="118.0" y="29.0" width="19.8" height="11.8" fill="#081c08"/><rect x="120.0" y="31.0" width="14.0" height="4.2" fill="#0b220b" opacity=".7"/><rect x="140.0" y="29.0" width="18.8" height="11.8" fill="#081c08"/><rect x="142.0" y="31.0" width="13.0" height="4.2" fill="#0b220b" opacity=".7"/><rect x="-8.0" y="43.0" width="7.8" height="11.8" fill="#081c08"/><rect x="-6.0" y="45.0" width="2.0" height="4.2" fill="#0b220b" opacity=".7"/><rect x="152.0" y="43.0" width="7.8" height="11.8" fill="#081c08"/><rect x="154.0" y="45.0" width="2.0" height="4.2" fill="#0b220b" opacity=".7"/><rect x="2.0" y="43.0" width="7.8" height="11.8" fill="#081c08"/><rect x="4.0" y="45.0" width="2.0" height="4.2" fill="#0b220b" opacity=".7"/><rect x="12.0" y="43.0" width="19.8" height="11.8" fill="#081c08"/><rect x="14.0" y="45.0" width="14.0" height="4.2" fill="#0b220b" opacity=".7"/><rect x="34.0" y="43.0" width="7.8" height="11.8" fill="#081c08"/><rect x="36.0" y="45.0" width="2.0" height="4.2" fill="#0b220b" opacity=".7"/><rect x="66.0" y="43.0" width="19.8" height="11.8" fill="#081c08"/><rect x="68.0" y="45.0" width="14.0" height="4.2" fill="#0b220b" opacity=".7"/><rect x="88.0" y="43.0" width="10.8" height="11.8" fill="#081c08"/><rect x="90.0" y="45.0" width="5.0" height="4.2" fill="#0b220b" opacity=".7"/><rect x="101.0" y="43.0" width="14.8" height="11.8" fill="#081c08"/><rect x="103.0" y="45.0" width="9.0" height="4.2" fill="#0b220b" opacity=".7"/><rect x="118.0" y="43.0" width="10.8" height="11.8" fill="#081c08"/><rect x="120.0" y="45.0" width="5.0" height="4.2" fill="#0b220b" opacity=".7"/><rect x="131.0" y="43.0" width="18.8" height="11.8" fill="#081c08"/><rect x="133.0" y="45.0" width="13.0" height="4.2" fill="#0b220b" opacity=".7"/><rect x="-7.0" y="57.0" width="19.8" height="11.8" fill="#081c08"/><rect x="-5.0" y="59.0" width="14.0" height="4.2" fill="#0b220b" opacity=".7"/><rect x="153.0" y="57.0" width="19.8" height="11.8" fill="#081c08"/><rect x="155.0" y="59.0" width="14.0" height="4.2" fill="#0b220b" opacity=".7"/><rect x="15.0" y="57.0" width="14.8" height="25.8" fill="#081c08"/><rect x="17.0" y="59.0" width="9.0" height="8.4" fill="#0b220b" opacity=".7"/><rect x="32.0" y="57.0" width="14.8" height="25.8" fill="#081c08"/><rect x="34.0" y="59.0" width="9.0" height="8.4" fill="#0b220b" opacity=".7"/><rect x="49.0" y="57.0" width="19.8" height="11.8" fill="#081c08"/><rect x="51.0" y="59.0" width="14.0" height="4.2" fill="#0b220b" opacity=".7"/><rect x="71.0" y="57.0" width="19.8" height="11.8" fill="#081c08"/><rect x="73.0" y="59.0" width="14.0" height="4.2" fill="#0b220b" opacity=".7"/><rect x="93.0" y="57.0" width="14.8" height="11.8" fill="#081c08"/><rect x="95.0" y="59.0" width="9.0" height="4.2" fill="#0b220b" opacity=".7"/><rect x="110.0" y="57.0" width="19.8" height="11.8" fill="#081c08"/><rect x="112.0" y="59.0" width="14.0" height="4.2" fill="#0b220b" opacity=".7"/><rect x="132.0" y="57.0" width="18.8" height="11.8" fill="#081c08"/><rect x="134.0" y="59.0" width="13.0" height="4.2" fill="#0b220b" opacity=".7"/><rect x="-10.0" y="71.0" width="10.8" height="11.8" fill="#081c08"/><rect x="-8.0" y="73.0" width="5.0" height="4.2" fill="#0b220b" opacity=".7"/><rect x="150.0" y="71.0" width="10.8" height="11.8" fill="#081c08"/><rect x="152.0" y="73.0" width="5.0" height="4.2" fill="#0b220b" opacity=".7"/><rect x="3.0" y="71.0" width="9.8" height="11.8" fill="#081c08"/><rect x="5.0" y="73.0" width="4.0" height="4.2" fill="#0b220b" opacity=".7"/><rect x="49.0" y="71.0" width="14.8" height="11.8" fill="#081c08"/><rect x="51.0" y="73.0" width="9.0" height="4.2" fill="#0b220b" opacity=".7"/><rect x="66.0" y="71.0" width="7.8" height="11.8" fill="#081c08"/><rect x="68.0" y="73.0" width="2.0" height="4.2" fill="#0b220b" opacity=".7"/><rect x="76.0" y="71.0" width="10.8" height="11.8" fill="#081c08"/><rect x="78.0" y="73.0" width="5.0" height="4.2" fill="#0b220b" opacity=".7"/><rect x="89.0" y="71.0" width="10.8" height="11.8" fill="#081c08"/><rect x="91.0" y="73.0" width="5.0" height="4.2" fill="#0b220b" opacity=".7"/><rect x="102.0" y="71.0" width="14.8" height="11.8" fill="#081c08"/><rect x="104.0" y="73.0" width="9.0" height="4.2" fill="#0b220b" opacity=".7"/><rect x="119.0" y="71.0" width="14.8" height="11.8" fill="#081c08"/><rect x="121.0" y="73.0" width="9.0" height="4.2" fill="#0b220b" opacity=".7"/><rect x="136.0" y="71.0" width="11.8" height="11.8" fill="#081c08"/><rect x="138.0" y="73.0" width="6.0" height="4.2" fill="#0b220b" opacity=".7"/></pattern>
<pattern id="pDG" patternUnits="userSpaceOnUse" width="160" height="84" patternTransform="rotate(3)"><rect width="160" height="84" fill="#031003"/><rect x="-1.0" y="1.0" width="19.8" height="11.8" fill="#167016"/><rect x="1.0" y="3.0" width="14.0" height="4.2" fill="#228a22" opacity=".7"/><rect x="159.0" y="1.0" width="19.8" height="11.8" fill="#167016"/><rect x="161.0" y="3.0" width="14.0" height="4.2" fill="#228a22" opacity=".7"/><rect x="21.0" y="1.0" width="19.8" height="25.8" fill="#167016"/><rect x="23.0" y="3.0" width="14.0" height="8.4" fill="#228a22" opacity=".7"/><rect x="43.0" y="1.0" width="14.8" height="11.8" fill="#167016"/><rect x="45.0" y="3.0" width="9.0" height="4.2" fill="#228a22" opacity=".7"/><rect x="60.0" y="1.0" width="19.8" height="11.8" fill="#167016"/><rect x="62.0" y="3.0" width="14.0" height="4.2" fill="#228a22" opacity=".7"/><rect x="82.0" y="1.0" width="10.8" height="11.8" fill="#167016"/><rect x="84.0" y="3.0" width="5.0" height="4.2" fill="#228a22" opacity=".7"/><rect x="95.0" y="1.0" width="19.8" height="11.8" fill="#167016"/><rect x="97.0" y="3.0" width="14.0" height="4.2" fill="#228a22" opacity=".7"/><rect x="117.0" y="1.0" width="10.8" height="11.8" fill="#167016"/><rect x="119.0" y="3.0" width="5.0" height="4.2" fill="#228a22" opacity=".7"/><rect x="130.0" y="1.0" width="10.8" height="11.8" fill="#167016"/><rect x="132.0" y="3.0" width="5.0" height="4.2" fill="#228a22" opacity=".7"/><rect x="143.0" y="1.0" width="13.8" height="11.8" fill="#167016"/><rect x="145.0" y="3.0" width="8.0" height="4.2" fill="#228a22" opacity=".7"/><rect x="-10.0" y="15.0" width="19.8" height="11.8" fill="#167016"/><rect x="-8.0" y="17.0" width="14.0" height="4.2" fill="#228a22" opacity=".7"/><rect x="150.0" y="15.0" width="19.8" height="11.8" fill="#167016"/><rect x="152.0" y="17.0" width="14.0" height="4.2" fill="#228a22" opacity=".7"/><rect x="12.0" y="15.0" width="6.8" height="11.8" fill="#167016"/><rect x="14.0" y="17.0" width="2.0" height="4.2" fill="#228a22" opacity=".7"/><rect x="43.0" y="15.0" width="19.8" height="11.8" fill="#167016"/><rect x="45.0" y="17.0" width="14.0" height="4.2" fill="#228a22" opacity=".7"/><rect x="65.0" y="15.0" width="7.8" height="11.8" fill="#167016"/><rect x="67.0" y="17.0" width="2.0" height="4.2" fill="#228a22" opacity=".7"/><rect x="75.0" y="15.0" width="14.8" height="11.8" fill="#167016"/><rect x="77.0" y="17.0" width="9.0" height="4.2" fill="#228a22" opacity=".7"/><rect x="92.0" y="15.0" width="19.8" height="11.8" fill="#167016"/><rect x="94.0" y="17.0" width="14.0" height="4.2" fill="#228a22" opacity=".7"/><rect x="114.0" y="15.0" width="7.8" height="11.8" fill="#167016"/><rect x="116.0" y="17.0" width="2.0" height="4.2" fill="#228a22" opacity=".7"/><rect x="124.0" y="15.0" width="14.8" height="11.8" fill="#167016"/><rect x="126.0" y="17.0" width="9.0" height="4.2" fill="#228a22" opacity=".7"/><rect x="141.0" y="15.0" width="6.8" height="11.8" fill="#167016"/><rect x="143.0" y="17.0" width="2.0" height="4.2" fill="#228a22" opacity=".7"/><rect x="1.0" y="29.0" width="10.8" height="11.8" fill="#167016"/><rect x="3.0" y="31.0" width="5.0" height="4.2" fill="#228a22" opacity=".7"/><rect x="14.0" y="29.0" width="7.8" height="11.8" fill="#167016"/><rect x="16.0" y="31.0" width="2.0" height="4.2" fill="#228a22" opacity=".7"/><rect x="24.0" y="29.0" width="7.8" height="11.8" fill="#167016"/><rect x="26.0" y="31.0" width="2.0" height="4.2" fill="#228a22" opacity=".7"/><rect x="34.0" y="29.0" width="7.8" height="11.8" fill="#167016"/><rect x="36.0" y="31.0" width="2.0" height="4.2" fill="#228a22" opacity=".7"/><rect x="44.0" y="29.0" width="19.8" height="25.8" fill="#167016"/><rect x="46.0" y="31.0" width="14.0" height="8.4" fill="#228a22" opacity=".7"/><rect x="66.0" y="29.0" width="10.8" height="11.8" fill="#167016"/><rect x="68.0" y="31.0" width="5.0" height="4.2" fill="#228a22" opacity=".7"/><rect x="79.0" y="29.0" width="14.8" height="11.8" fill="#167016"/><rect x="81.0" y="31.0" width="9.0" height="4.2" fill="#228a22" opacity=".7"/><rect x="96.0" y="29.0" width="19.8" height="11.8" fill="#167016"/><rect x="98.0" y="31.0" width="14.0" height="4.2" fill="#228a22" opacity=".7"/><rect x="118.0" y="29.0" width="19.8" height="11.8" fill="#167016"/><rect x="120.0" y="31.0" width="14.0" height="4.2" fill="#228a22" opacity=".7"/><rect x="140.0" y="29.0" width="18.8" height="11.8" fill="#167016"/><rect x="142.0" y="31.0" width="13.0" height="4.2" fill="#228a22" opacity=".7"/><rect x="-8.0" y="43.0" width="7.8" height="11.8" fill="#167016"/><rect x="-6.0" y="45.0" width="2.0" height="4.2" fill="#228a22" opacity=".7"/><rect x="152.0" y="43.0" width="7.8" height="11.8" fill="#167016"/><rect x="154.0" y="45.0" width="2.0" height="4.2" fill="#228a22" opacity=".7"/><rect x="2.0" y="43.0" width="7.8" height="11.8" fill="#167016"/><rect x="4.0" y="45.0" width="2.0" height="4.2" fill="#228a22" opacity=".7"/><rect x="12.0" y="43.0" width="19.8" height="11.8" fill="#167016"/><rect x="14.0" y="45.0" width="14.0" height="4.2" fill="#228a22" opacity=".7"/><rect x="34.0" y="43.0" width="7.8" height="11.8" fill="#167016"/><rect x="36.0" y="45.0" width="2.0" height="4.2" fill="#228a22" opacity=".7"/><rect x="66.0" y="43.0" width="19.8" height="11.8" fill="#167016"/><rect x="68.0" y="45.0" width="14.0" height="4.2" fill="#228a22" opacity=".7"/><rect x="88.0" y="43.0" width="10.8" height="11.8" fill="#167016"/><rect x="90.0" y="45.0" width="5.0" height="4.2" fill="#228a22" opacity=".7"/><rect x="101.0" y="43.0" width="14.8" height="11.8" fill="#167016"/><rect x="103.0" y="45.0" width="9.0" height="4.2" fill="#228a22" opacity=".7"/><rect x="118.0" y="43.0" width="10.8" height="11.8" fill="#167016"/><rect x="120.0" y="45.0" width="5.0" height="4.2" fill="#228a22" opacity=".7"/><rect x="131.0" y="43.0" width="18.8" height="11.8" fill="#167016"/><rect x="133.0" y="45.0" width="13.0" height="4.2" fill="#228a22" opacity=".7"/><rect x="-7.0" y="57.0" width="19.8" height="11.8" fill="#167016"/><rect x="-5.0" y="59.0" width="14.0" height="4.2" fill="#228a22" opacity=".7"/><rect x="153.0" y="57.0" width="19.8" height="11.8" fill="#167016"/><rect x="155.0" y="59.0" width="14.0" height="4.2" fill="#228a22" opacity=".7"/><rect x="15.0" y="57.0" width="14.8" height="25.8" fill="#167016"/><rect x="17.0" y="59.0" width="9.0" height="8.4" fill="#228a22" opacity=".7"/><rect x="32.0" y="57.0" width="14.8" height="25.8" fill="#167016"/><rect x="34.0" y="59.0" width="9.0" height="8.4" fill="#228a22" opacity=".7"/><rect x="49.0" y="57.0" width="19.8" height="11.8" fill="#167016"/><rect x="51.0" y="59.0" width="14.0" height="4.2" fill="#228a22" opacity=".7"/><rect x="71.0" y="57.0" width="19.8" height="11.8" fill="#167016"/><rect x="73.0" y="59.0" width="14.0" height="4.2" fill="#228a22" opacity=".7"/><rect x="93.0" y="57.0" width="14.8" height="11.8" fill="#167016"/><rect x="95.0" y="59.0" width="9.0" height="4.2" fill="#228a22" opacity=".7"/><rect x="110.0" y="57.0" width="19.8" height="11.8" fill="#167016"/><rect x="112.0" y="59.0" width="14.0" height="4.2" fill="#228a22" opacity=".7"/><rect x="132.0" y="57.0" width="18.8" height="11.8" fill="#167016"/><rect x="134.0" y="59.0" width="13.0" height="4.2" fill="#228a22" opacity=".7"/><rect x="-10.0" y="71.0" width="10.8" height="11.8" fill="#167016"/><rect x="-8.0" y="73.0" width="5.0" height="4.2" fill="#228a22" opacity=".7"/><rect x="150.0" y="71.0" width="10.8" height="11.8" fill="#167016"/><rect x="152.0" y="73.0" width="5.0" height="4.2" fill="#228a22" opacity=".7"/><rect x="3.0" y="71.0" width="9.8" height="11.8" fill="#167016"/><rect x="5.0" y="73.0" width="4.0" height="4.2" fill="#228a22" opacity=".7"/><rect x="49.0" y="71.0" width="14.8" height="11.8" fill="#167016"/><rect x="51.0" y="73.0" width="9.0" height="4.2" fill="#228a22" opacity=".7"/><rect x="66.0" y="71.0" width="7.8" height="11.8" fill="#167016"/><rect x="68.0" y="73.0" width="2.0" height="4.2" fill="#228a22" opacity=".7"/><rect x="76.0" y="71.0" width="10.8" height="11.8" fill="#167016"/><rect x="78.0" y="73.0" width="5.0" height="4.2" fill="#228a22" opacity=".7"/><rect x="89.0" y="71.0" width="10.8" height="11.8" fill="#167016"/><rect x="91.0" y="73.0" width="5.0" height="4.2" fill="#228a22" opacity=".7"/><rect x="102.0" y="71.0" width="14.8" height="11.8" fill="#167016"/><rect x="104.0" y="73.0" width="9.0" height="4.2" fill="#228a22" opacity=".7"/><rect x="119.0" y="71.0" width="14.8" height="11.8" fill="#167016"/><rect x="121.0" y="73.0" width="9.0" height="4.2" fill="#228a22" opacity=".7"/><rect x="136.0" y="71.0" width="11.8" height="11.8" fill="#167016"/><rect x="138.0" y="73.0" width="6.0" height="4.2" fill="#228a22" opacity=".7"/></pattern>
<radialGradient id="gl" cx=".5" cy=".5" r=".5"><stop offset="0" stop-color="#2a8a2a" stop-opacity=".8"/><stop offset=".7" stop-color="#1a6a1a" stop-opacity=".6"/><stop offset="1" stop-color="#0a300a" stop-opacity="0"/></radialGradient>
</defs>
<!-- base left wall -->
<rect x="211" y="140" width="726" height="395" fill="url(#pA)"/>
<clipPath id="lwc"><rect x="211" y="140" width="308" height="395"/></clipPath>
<!-- LW --><g clip-path="url(#lwc)"><rect x="211" y="140" width="308" height="395" fill="#a86000"/><polygon points="210.2,0.8 227.6,10.1 227.6,31.2 210.2,22.4" fill="#ecd800"/><polygon points="212.8,4.8 225.0,11.3 225.0,27.4 212.8,21.1" fill="#e6de70"/><polygon points="212.8,15.1 225.0,21.5 225.0,27.4 212.8,21.1" fill="#e8d420"/><polygon points="229.9,11.4 272.5,33.2 272.5,74.4 229.9,55.6" fill="#ecd800"/><polygon points="232.4,15.2 270.2,34.4 270.2,71.0 232.4,54.2" fill="#e6de70"/><polygon points="232.4,39.1 270.2,56.8 270.2,71.0 232.4,54.2" fill="#e8d420"/><polygon points="274.7,34.3 300.8,46.8 300.8,65.4 274.7,53.7" fill="#ecd800"/><polygon points="277.0,37.7 298.5,48.0 298.5,62.2 277.0,52.4" fill="#e6de70"/><polygon points="277.0,47.0 298.5,57.0 298.5,62.2 277.0,52.4" fill="#e8d420"/><polygon points="302.8,47.8 334.3,62.2 334.3,79.8 302.8,66.3" fill="#ecd800"/><polygon points="305.0,51.1 332.1,63.3 332.1,76.8 305.0,65.1" fill="#e6de70"/><polygon points="305.0,59.9 332.1,71.8 332.1,76.8 305.0,65.1" fill="#e8d420"/><polygon points="336.2,63.0 366.0,75.9 366.0,111.2 336.2,100.1" fill="#ecd800"/><polygon points="338.3,66.1 364.0,77.1 364.0,108.4 338.3,98.8" fill="#e6de70"/><polygon points="338.3,86.1 364.0,96.3 364.0,108.4 338.3,98.8" fill="#e8d420"/><polygon points="367.8,76.7 402.0,90.7 402.0,106.4 367.8,93.4" fill="#ecd800"/><polygon points="369.8,79.6 400.1,91.9 400.1,103.8 369.8,92.2" fill="#e6de70"/><polygon points="369.8,87.5 400.1,99.4 400.1,103.8 369.8,92.2" fill="#e8d420"/><polygon points="403.7,91.4 424.8,99.6 424.8,114.8 403.7,107.1" fill="#ecd800"/><polygon points="405.6,94.0 423.0,100.8 423.0,112.3 405.6,105.9" fill="#e6de70"/><polygon points="405.6,101.5 423.0,108.0 423.0,112.3 405.6,105.9" fill="#e8d420"/><polygon points="426.5,100.3 442.8,106.4 442.8,121.1 426.5,115.4" fill="#ecd800"/><polygon points="428.3,102.8 441.0,107.5 441.0,118.7 428.3,114.2" fill="#e6de70"/><polygon points="428.3,110.0 441.0,114.6 441.0,118.7 428.3,114.2" fill="#e8d420"/><polygon points="424.8,99.6 430.7,101.9 424.8,104.5" fill="#a86000"/><polygon points="444.4,107.0 460.2,112.8 460.2,127.1 444.4,121.7" fill="#ecd800"/><polygon points="446.2,109.4 458.5,113.9 458.5,124.8 446.2,120.5" fill="#e6de70"/><polygon points="446.2,116.4 458.5,120.8 458.5,124.8 446.2,120.5" fill="#e8d420"/><polygon points="442.8,106.4 448.4,108.5 442.8,111.2" fill="#a86000"/><polygon points="461.8,113.4 481.0,120.2 481.0,149.3 461.8,143.4" fill="#ecd800"/><polygon points="463.5,115.7 479.3,121.3 479.3,147.1 463.5,142.2" fill="#e6de70"/><polygon points="463.5,132.0 479.3,137.1 479.3,147.1 463.5,142.2" fill="#e8d420"/><polygon points="482.5,120.7 506.0,128.7 506.0,142.0 482.5,134.5" fill="#ecd800"/><polygon points="484.1,122.9 504.4,129.8 504.4,139.9 484.1,133.4" fill="#e6de70"/><polygon points="484.1,129.5 504.4,136.2 504.4,139.9 484.1,133.4" fill="#e8d420"/><polygon points="507.4,129.2 520.5,133.5 520.5,146.4 507.4,142.4" fill="#ecd800"/><polygon points="509.0,131.3 518.9,134.6 518.9,144.4 509.0,141.3" fill="#e6de70"/><polygon points="509.0,137.6 518.9,140.8 518.9,144.4 509.0,141.3" fill="#e8d420"/><polygon points="208.2,23.8 227.6,33.5 227.6,54.5 208.2,45.5" fill="#ecd800"/><polygon points="210.8,27.7 225.0,34.8 225.0,50.8 210.8,44.1" fill="#e6de70"/><polygon points="210.8,38.1 225.0,44.9 225.0,50.8 210.8,44.1" fill="#e8d420"/><polygon points="274.7,55.9 314.4,73.4 314.4,91.6 274.7,75.3" fill="#ecd800"/><polygon points="277.0,59.2 312.2,74.6 312.2,88.5 277.0,73.9" fill="#e6de70"/><polygon points="277.0,68.5 312.2,83.4 312.2,88.5 277.0,73.9" fill="#e8d420"/><polygon points="316.4,74.2 334.3,81.7 334.3,99.3 316.4,92.4" fill="#ecd800"/><polygon points="318.6,77.3 332.1,83.0 332.1,96.4 318.6,91.0" fill="#e6de70"/><polygon points="318.6,86.0 332.1,91.4 332.1,96.4 318.6,91.0" fill="#e8d420"/><polygon points="367.8,95.2 390.2,103.8 390.2,119.8 367.8,111.8" fill="#ecd800"/><polygon points="369.8,98.0 388.3,105.0 388.3,117.2 369.8,110.6" fill="#e6de70"/><polygon points="369.8,105.9 388.3,112.7 388.3,117.2 369.8,110.6" fill="#e8d420"/><polygon points="392.0,104.5 424.8,116.5 424.8,131.6 392.0,120.4" fill="#ecd800"/><polygon points="393.9,107.1 423.0,117.6 423.0,129.2 393.9,119.2" fill="#e6de70"/><polygon points="393.9,114.7 423.0,124.9 423.0,129.2 393.9,119.2" fill="#e8d420"/><polygon points="426.5,117.0 446.8,124.1 446.8,138.7 426.5,132.1" fill="#ecd800"/><polygon points="428.3,119.5 445.1,125.3 445.1,136.4 428.3,130.9" fill="#e6de70"/><polygon points="428.3,126.7 445.1,132.3 445.1,136.4 428.3,130.9" fill="#e8d420"/><polygon points="448.4,124.7 460.2,128.7 460.2,142.9 448.4,139.2" fill="#ecd800"/><polygon points="450.2,127.0 458.5,129.8 458.5,140.7 450.2,138.0" fill="#e6de70"/><polygon points="450.2,134.0 458.5,136.7 458.5,140.7 450.2,138.0" fill="#e8d420"/><polygon points="446.8,124.1 452.5,126.1 446.8,128.9" fill="#a86000"/><polygon points="482.5,136.0 501.0,141.9 501.0,155.2 482.5,149.7" fill="#ecd800"/><polygon points="484.1,138.2 499.4,143.0 499.4,153.1 484.1,148.6" fill="#e6de70"/><polygon points="484.1,144.8 499.4,149.4 499.4,153.1 484.1,148.6" fill="#e8d420"/><polygon points="502.5,142.4 520.5,147.9 520.5,160.8 502.5,155.7" fill="#ecd800"/><polygon points="504.1,144.4 518.9,149.0 518.9,158.8 504.1,154.5" fill="#e6de70"/><polygon points="504.1,150.8 518.9,155.2 518.9,158.8 504.1,154.5" fill="#e8d420"/><polygon points="183.6,36.1 221.7,54.2 221.7,99.0 183.6,83.8" fill="#ecd800"/><polygon points="186.3,40.1 219.1,55.5 219.1,95.4 186.3,82.2" fill="#e6de70"/><polygon points="186.3,65.9 219.1,80.0 219.1,95.4 186.3,82.2" fill="#e8d420"/><polygon points="181.1,34.9 189.8,39.1 181.1,42.2" fill="#a86000"/><polygon points="224.1,55.2 246.7,65.4 246.7,85.8 224.1,76.4" fill="#ecd800"/><polygon points="226.6,58.9 244.3,66.8 244.3,82.3 226.6,74.9" fill="#e6de70"/><polygon points="226.6,69.0 244.3,76.6 244.3,82.3 226.6,74.9" fill="#e8d420"/><polygon points="249.0,66.4 283.3,81.0 283.3,121.5 249.0,109.2" fill="#ecd800"/><polygon points="251.4,69.9 281.0,82.4 281.0,118.3 251.4,107.7" fill="#e6de70"/><polygon points="251.4,93.0 281.0,104.4 281.0,118.3 251.4,107.7" fill="#e8d420"/><polygon points="285.4,81.9 324.4,97.5 324.4,115.4 285.4,101.0" fill="#ecd800"/><polygon points="287.7,85.1 322.2,98.8 322.2,112.4 287.7,99.6" fill="#e6de70"/><polygon points="287.7,94.2 322.2,107.4 322.2,112.4 287.7,99.6" fill="#e8d420"/><polygon points="326.4,98.3 356.6,109.6 356.6,126.6 326.4,116.1" fill="#ecd800"/><polygon points="328.5,101.2 354.6,110.9 354.6,123.8 328.5,114.7" fill="#e6de70"/><polygon points="328.5,109.7 354.6,119.1 354.6,123.8 328.5,114.7" fill="#e8d420"/><polygon points="324.4,97.5 331.3,100.1 324.4,103.3" fill="#a86000"/><polygon points="358.5,110.3 376.7,116.9 376.7,133.3 358.5,127.2" fill="#ecd800"/><polygon points="360.5,113.1 374.7,118.1 374.7,130.6 360.5,125.9" fill="#e6de70"/><polygon points="360.5,121.2 374.7,126.0 374.7,130.6 360.5,125.9" fill="#e8d420"/><polygon points="378.5,117.5 396.1,123.6 396.1,139.5 378.5,133.9" fill="#ecd800"/><polygon points="380.5,120.2 394.2,124.9 394.2,137.0 380.5,132.5" fill="#e6de70"/><polygon points="380.5,128.0 394.2,132.5 394.2,137.0 380.5,132.5" fill="#e8d420"/><polygon points="397.9,124.2 414.9,130.0 414.9,145.4 397.9,140.1" fill="#ecd800"/><polygon points="399.8,126.8 413.1,131.2 413.1,143.0 399.8,138.8" fill="#e6de70"/><polygon points="399.8,134.4 413.1,138.6 413.1,143.0 399.8,138.8" fill="#e8d420"/><polygon points="416.6,130.6 448.2,140.8 448.2,155.3 416.6,145.9" fill="#ecd800"/><polygon points="418.5,133.0 446.4,142.0 446.4,153.1 418.5,144.6" fill="#e6de70"/><polygon points="418.5,140.4 446.4,149.0 446.4,153.1 418.5,144.6" fill="#e8d420"/><polygon points="449.8,141.3 469.4,147.3 469.4,161.4 449.8,155.8" fill="#ecd800"/><polygon points="451.5,143.6 467.7,148.5 467.7,159.2 451.5,154.6" fill="#e6de70"/><polygon points="451.5,150.5 467.7,155.3 467.7,159.2 451.5,154.6" fill="#e8d420"/><polygon points="448.2,140.8 453.8,142.5 448.2,145.5" fill="#a86000"/><polygon points="470.9,147.8 499.8,156.3 499.8,169.7 470.9,161.8" fill="#ecd800"/><polygon points="472.6,150.0 498.2,157.5 498.2,167.7 472.6,160.6" fill="#e6de70"/><polygon points="472.6,156.7 498.2,163.9 498.2,167.7 472.6,160.6" fill="#e8d420"/><polygon points="501.3,156.8 524.1,163.2 524.1,176.0 501.3,170.1" fill="#ecd800"/><polygon points="502.9,158.8 522.5,164.3 522.5,174.1 502.9,168.9" fill="#e6de70"/><polygon points="502.9,165.2 522.5,170.5 522.5,174.1 502.9,168.9" fill="#e8d420"/><polygon points="224.1,78.7 246.7,88.0 246.7,108.4 224.1,99.9" fill="#ecd800"/><polygon points="226.6,82.3 244.3,89.5 244.3,105.0 226.6,98.3" fill="#e6de70"/><polygon points="226.6,92.4 244.3,99.3 244.3,105.0 226.6,98.3" fill="#e8d420"/><polygon points="285.4,103.1 305.9,110.7 305.9,129.2 285.4,122.2" fill="#ecd800"/><polygon points="287.7,106.3 303.7,112.1 303.7,126.2 287.7,120.7" fill="#e6de70"/><polygon points="287.7,115.4 303.7,121.0 303.7,126.2 287.7,120.7" fill="#e8d420"/><polygon points="283.3,102.3 290.7,105.1 283.3,108.5" fill="#a86000"/><polygon points="307.9,111.5 322.7,116.8 322.7,134.7 307.9,129.8" fill="#ecd800"/><polygon points="310.2,114.5 320.6,118.2 320.6,131.8 310.2,128.4" fill="#e6de70"/><polygon points="310.2,123.2 320.6,126.8 320.6,131.8 310.2,128.4" fill="#e8d420"/><polygon points="324.7,117.5 361.3,130.0 361.3,146.9 324.7,135.4" fill="#ecd800"/><polygon points="326.9,120.4 359.3,131.4 359.3,144.2 326.9,133.9" fill="#e6de70"/><polygon points="326.9,128.9 359.3,139.5 359.3,144.2 326.9,133.9" fill="#e8d420"/><polygon points="363.2,130.7 376.7,135.1 376.7,151.5 363.2,147.4" fill="#ecd800"/><polygon points="365.2,133.3 374.7,136.4 374.7,148.9 365.2,146.0" fill="#e6de70"/><polygon points="365.2,141.3 374.7,144.3 374.7,148.9 365.2,146.0" fill="#e8d420"/><polygon points="378.5,135.7 406.3,144.5 406.3,160.1 378.5,152.0" fill="#ecd800"/><polygon points="380.5,138.3 404.4,145.8 404.4,157.6 380.5,150.6" fill="#e6de70"/><polygon points="380.5,146.1 404.4,153.3 404.4,157.6 380.5,150.6" fill="#e8d420"/><polygon points="376.7,135.1 383.0,137.1 376.7,140.4" fill="#a86000"/><polygon points="408.1,145.0 424.8,150.1 424.8,165.2 408.1,160.6" fill="#ecd800"/><polygon points="409.9,147.4 423.0,151.4 423.0,162.9 409.9,159.2" fill="#e6de70"/><polygon points="409.9,154.9 423.0,158.6 423.0,162.9 409.9,159.2" fill="#e8d420"/><polygon points="426.5,150.6 446.8,156.6 446.8,171.1 426.5,165.7" fill="#ecd800"/><polygon points="428.3,152.9 445.1,157.8 445.1,168.9 428.3,164.4" fill="#e6de70"/><polygon points="428.3,160.2 445.1,164.8 445.1,168.9 428.3,164.4" fill="#e8d420"/><polygon points="424.8,150.1 430.7,151.8 424.8,155.0" fill="#a86000"/><polygon points="448.4,157.0 478.4,165.4 478.4,179.3 448.4,171.6" fill="#ecd800"/><polygon points="450.2,159.3 476.7,166.6 476.7,177.2 450.2,170.3" fill="#e6de70"/><polygon points="450.2,166.2 476.7,173.3 476.7,177.2 450.2,170.3" fill="#e8d420"/><polygon points="479.9,165.9 494.8,169.9 494.8,183.3 479.9,179.7" fill="#ecd800"/><polygon points="481.6,168.0 493.2,171.1 493.2,181.3 481.6,178.4" fill="#e6de70"/><polygon points="481.6,174.6 493.2,177.5 493.2,181.3 481.6,178.4" fill="#e8d420"/><polygon points="496.3,170.3 530.0,179.0 530.0,191.7 496.3,183.7" fill="#ecd800"/><polygon points="498.0,172.3 528.4,180.1 528.4,189.8 498.0,182.5" fill="#e6de70"/><polygon points="498.0,178.7 528.4,186.2 528.4,189.8 498.0,182.5" fill="#e8d420"/><polygon points="178.3,84.2 216.8,99.4 216.8,120.8 178.3,107.0" fill="#ecd800"/><polygon points="181.1,88.0 214.2,101.0 214.2,117.3 181.1,105.3" fill="#e6de70"/><polygon points="181.1,98.9 214.2,111.3 214.2,117.3 181.1,105.3" fill="#e8d420"/><polygon points="219.1,100.3 242.0,108.9 242.0,129.4 219.1,121.6" fill="#ecd800"/><polygon points="221.7,103.9 239.5,110.5 239.5,126.1 221.7,120.0" fill="#e6de70"/><polygon points="221.7,114.0 239.5,120.3 239.5,126.1 221.7,120.0" fill="#e8d420"/><polygon points="244.3,109.7 278.8,122.0 278.8,162.8 244.3,152.9" fill="#ecd800"/><polygon points="246.7,113.1 276.5,123.6 276.5,159.8 246.7,151.2" fill="#e6de70"/><polygon points="246.7,136.4 276.5,145.8 276.5,159.8 246.7,151.2" fill="#e8d420"/><polygon points="281.0,122.8 296.4,128.0 296.4,146.8 281.0,142.0" fill="#ecd800"/><polygon points="283.3,125.9 294.2,129.6 294.2,143.8 283.3,140.4" fill="#e6de70"/><polygon points="283.3,135.1 294.2,138.6 294.2,143.8 283.3,140.4" fill="#e8d420"/><polygon points="278.8,122.0 286.3,124.6 278.8,128.3" fill="#a86000"/><polygon points="298.5,128.7 313.5,133.7 313.5,151.9 298.5,147.4" fill="#ecd800"/><polygon points="300.8,131.7 311.3,135.2 311.3,149.1 300.8,145.9" fill="#e6de70"/><polygon points="300.8,140.7 311.3,144.0 311.3,149.1 300.8,145.9" fill="#e8d420"/><polygon points="315.6,134.4 346.3,144.1 346.3,161.4 315.6,152.5" fill="#ecd800"/><polygon points="317.7,137.3 344.3,145.6 344.3,158.7 317.7,151.0" fill="#e6de70"/><polygon points="317.7,145.9 344.3,153.9 344.3,158.7 317.7,151.0" fill="#e8d420"/><polygon points="348.3,144.7 377.5,153.5 377.5,188.1 348.3,181.0" fill="#ecd800"/><polygon points="350.3,147.4 375.5,154.9 375.5,185.6 350.3,179.5" fill="#e6de70"/><polygon points="350.3,167.1 375.5,173.8 375.5,185.6 350.3,179.5" fill="#e8d420"/><polygon points="379.3,154.1 392.4,157.9 392.4,173.8 379.3,170.4" fill="#ecd800"/><polygon points="381.2,156.6 390.5,159.2 390.5,171.4 381.2,168.9" fill="#e6de70"/><polygon points="381.2,164.4 390.5,166.9 390.5,171.4 381.2,168.9" fill="#e8d420"/><polygon points="394.2,158.4 411.4,163.2 411.4,178.7 394.2,174.3" fill="#ecd800"/><polygon points="396.1,160.8 409.5,164.6 409.5,176.3 396.1,172.9" fill="#e6de70"/><polygon points="396.1,168.4 409.5,172.0 409.5,176.3 396.1,172.9" fill="#e8d420"/><polygon points="413.1,163.7 429.7,168.2 429.7,183.2 413.1,179.1" fill="#ecd800"/><polygon points="414.9,166.0 427.9,169.5 427.9,181.0 414.9,177.7" fill="#e6de70"/><polygon points="414.9,173.4 427.9,176.8 427.9,181.0 414.9,177.7" fill="#e8d420"/><polygon points="431.4,168.7 443.4,171.9 443.4,186.5 431.4,183.6" fill="#ecd800"/><polygon points="433.2,170.9 441.7,173.2 441.7,184.4 433.2,182.3" fill="#e6de70"/><polygon points="433.2,178.1 441.7,180.2 441.7,184.4 433.2,182.3" fill="#e8d420"/><polygon points="429.7,168.2 435.5,169.8 429.7,173.1" fill="#a86000"/><polygon points="445.1,172.3 460.8,176.4 460.8,190.6 445.1,186.9" fill="#ecd800"/><polygon points="446.8,174.5 459.1,177.7 459.1,188.5 446.8,185.6" fill="#e6de70"/><polygon points="446.8,181.5 459.1,184.5 459.1,188.5 446.8,185.6" fill="#e8d420"/><polygon points="462.4,176.8 473.9,179.7 473.9,193.6 462.4,191.0" fill="#ecd800"/><polygon points="464.1,178.9 472.2,181.0 472.2,191.6 464.1,189.7" fill="#e6de70"/><polygon points="464.1,185.7 472.2,187.7 472.2,191.6 464.1,189.7" fill="#e8d420"/><polygon points="475.5,180.1 504.1,187.1 504.1,200.3 475.5,194.0" fill="#ecd800"/><polygon points="477.1,182.2 502.5,188.3 502.5,198.4 477.1,192.7" fill="#e6de70"/><polygon points="477.1,188.8 502.5,194.7 502.5,198.4 477.1,192.7" fill="#e8d420"/><polygon points="505.6,187.4 532.9,193.7 532.9,206.4 505.6,200.6" fill="#ecd800"/><polygon points="507.2,189.4 531.4,194.9 531.4,204.5 507.2,199.4" fill="#e6de70"/><polygon points="507.2,195.7 531.4,201.0 531.4,204.5 507.2,199.4" fill="#e8d420"/><polygon points="504.1,187.1 509.3,188.3 504.1,191.4" fill="#a86000"/><polygon points="208.2,120.2 242.0,131.7 242.0,152.2 208.2,141.9" fill="#ecd800"/><polygon points="210.8,123.7 239.5,133.4 239.5,149.0 210.8,140.1" fill="#e6de70"/><polygon points="210.8,134.1 239.5,143.2 239.5,149.0 210.8,140.1" fill="#e8d420"/><polygon points="281.0,144.1 320.2,155.9 320.2,173.9 281.0,163.4" fill="#ecd800"/><polygon points="283.3,147.2 318.1,157.5 318.1,171.2 283.3,161.7" fill="#e6de70"/><polygon points="283.3,156.4 318.1,166.1 318.1,171.2 283.3,161.7" fill="#e8d420"/><polygon points="322.2,156.5 346.3,163.3 346.3,180.6 322.2,174.4" fill="#ecd800"/><polygon points="324.4,159.3 344.3,164.8 344.3,177.9 324.4,172.8" fill="#e6de70"/><polygon points="324.4,167.8 344.3,173.1 344.3,177.9 324.4,172.8" fill="#e8d420"/><polygon points="379.3,172.2 396.9,176.7 396.9,192.6 379.3,188.5" fill="#ecd800"/><polygon points="381.2,174.7 394.9,178.2 394.9,190.2 381.2,187.0" fill="#e6de70"/><polygon points="381.2,182.5 394.9,185.8 394.9,190.2 381.2,187.0" fill="#e8d420"/><polygon points="398.6,177.2 419.9,182.5 419.9,197.8 398.6,193.0" fill="#ecd800"/><polygon points="400.5,179.6 418.1,183.9 418.1,195.5 400.5,191.5" fill="#e6de70"/><polygon points="400.5,187.1 418.1,191.2 418.1,195.5 400.5,191.5" fill="#e8d420"/><polygon points="421.6,182.9 433.9,185.9 433.9,200.8 421.6,198.1" fill="#ecd800"/><polygon points="423.4,185.2 432.1,187.3 432.1,198.6 423.4,196.7" fill="#e6de70"/><polygon points="423.4,192.5 432.1,194.4 432.1,198.6 423.4,196.7" fill="#e8d420"/><polygon points="435.5,186.3 460.8,192.2 460.8,206.5 435.5,201.2" fill="#ecd800"/><polygon points="437.3,188.5 459.1,193.6 459.1,204.4 437.3,199.8" fill="#e6de70"/><polygon points="437.3,195.6 459.1,200.4 459.1,204.4 437.3,199.8" fill="#e8d420"/><polygon points="462.4,192.6 477.8,196.0 477.8,209.9 462.4,206.8" fill="#ecd800"/><polygon points="464.1,194.7 476.1,197.3 476.1,207.9 464.1,205.4" fill="#e6de70"/><polygon points="464.1,201.5 476.1,204.0 476.1,207.9 464.1,205.4" fill="#e8d420"/><polygon points="460.8,192.2 466.4,193.5 460.8,196.8" fill="#a86000"/><polygon points="479.3,196.4 490.5,198.8 490.5,212.4 479.3,210.2" fill="#ecd800"/><polygon points="481.0,198.4 488.8,200.1 488.8,210.5 481.0,208.9" fill="#e6de70"/><polygon points="481.0,205.0 488.8,206.7 488.8,210.5 481.0,208.9" fill="#e8d420"/><polygon points="492.0,199.2 521.7,205.5 521.7,218.4 492.0,212.7" fill="#ecd800"/><polygon points="493.6,201.2 520.1,206.7 520.1,216.5 493.6,211.4" fill="#e6de70"/><polygon points="493.6,207.6 520.1,212.9 520.1,216.5 493.6,211.4" fill="#e8d420"/><polygon points="189.8,138.6 227.6,150.2 227.6,171.2 189.8,160.9" fill="#ecd800"/><polygon points="192.5,142.1 225.0,152.0 225.0,168.0 192.5,159.0" fill="#e6de70"/><polygon points="192.5,152.8 225.0,162.1 225.0,168.0 192.5,159.0" fill="#e8d420"/><polygon points="229.9,150.9 252.3,157.5 252.3,177.7 229.9,171.9" fill="#ecd800"/><polygon points="232.4,154.2 249.9,159.2 249.9,174.6 232.4,170.0" fill="#e6de70"/><polygon points="232.4,164.2 249.9,168.9 249.9,174.6 232.4,170.0" fill="#e8d420"/><polygon points="254.6,158.1 295.6,169.5 295.6,188.2 254.6,178.2" fill="#ecd800"/><polygon points="257.0,161.2 293.3,171.1 293.3,185.4 257.0,176.4" fill="#e6de70"/><polygon points="257.0,170.8 293.3,180.2 293.3,185.4 257.0,176.4" fill="#e8d420"/><polygon points="297.6,170.0 329.3,178.2 329.3,215.7 297.6,209.5" fill="#ecd800"/><polygon points="299.9,172.9 327.2,179.8 327.2,213.1 299.9,207.7" fill="#e6de70"/><polygon points="299.9,194.2 327.2,200.2 327.2,213.1 299.9,207.7" fill="#e8d420"/><polygon points="331.3,178.7 345.5,182.3 345.5,199.5 331.3,196.4" fill="#ecd800"/><polygon points="333.4,181.4 343.5,183.8 343.5,197.0 333.4,194.8" fill="#e6de70"/><polygon points="333.4,189.8 343.5,192.2 343.5,197.0 333.4,194.8" fill="#e8d420"/><polygon points="347.5,182.7 366.0,187.2 366.0,203.9 347.5,200.0" fill="#ecd800"/><polygon points="349.5,185.3 364.0,188.7 364.0,201.5 349.5,198.3" fill="#e6de70"/><polygon points="349.5,193.5 364.0,196.8 364.0,201.5 349.5,198.3" fill="#e8d420"/><polygon points="345.5,182.3 352.2,183.9 345.5,187.9" fill="#a86000"/><polygon points="367.8,187.6 402.0,195.5 402.0,211.2 367.8,204.3" fill="#ecd800"/><polygon points="369.8,190.1 400.1,197.0 400.1,209.0 369.8,202.7" fill="#e6de70"/><polygon points="369.8,198.1 400.1,204.5 400.1,209.0 369.8,202.7" fill="#e8d420"/><polygon points="403.7,195.9 424.8,200.5 424.8,215.7 403.7,211.6" fill="#ecd800"/><polygon points="405.6,198.2 423.0,202.0 423.0,213.5 405.6,210.1" fill="#e6de70"/><polygon points="405.6,205.7 423.0,209.2 423.0,213.5 405.6,210.1" fill="#e8d420"/><polygon points="426.5,200.9 452.2,206.3 452.2,220.8 426.5,216.0" fill="#ecd800"/><polygon points="428.3,203.1 450.5,207.7 450.5,218.7 428.3,214.5" fill="#e6de70"/><polygon points="428.3,210.3 450.5,214.6 450.5,218.7 428.3,214.5" fill="#e8d420"/><polygon points="424.8,200.5 430.7,201.8 424.8,205.4" fill="#a86000"/><polygon points="453.8,206.6 478.4,211.6 478.4,225.4 453.8,221.0" fill="#ecd800"/><polygon points="455.5,208.7 476.7,212.9 476.7,223.5 455.5,219.6" fill="#e6de70"/><polygon points="455.5,215.6 476.7,219.6 476.7,223.5 455.5,219.6" fill="#e8d420"/><polygon points="479.9,211.9 498.6,215.5 498.6,243.7 479.9,241.0" fill="#ecd800"/><polygon points="481.6,213.9 497.0,216.8 497.0,241.9 481.6,239.6" fill="#e6de70"/><polygon points="481.6,229.6 497.0,232.2 497.0,241.9 481.6,239.6" fill="#e8d420"/><polygon points="500.1,215.8 520.5,219.6 520.5,232.5 500.1,229.1" fill="#ecd800"/><polygon points="501.7,217.7 518.9,220.8 518.9,230.7 501.7,227.8" fill="#e6de70"/><polygon points="501.7,224.1 518.9,227.1 518.9,230.7 501.7,227.8" fill="#e8d420"/><polygon points="211.2,169.3 255.1,180.6 255.1,200.7 211.2,190.8" fill="#ecd800"/><polygon points="213.8,172.5 252.7,182.4 252.7,197.7 213.8,188.9" fill="#e6de70"/><polygon points="213.8,182.8 252.7,192.1 252.7,197.7 213.8,188.9" fill="#e8d420"/><polygon points="257.4,181.1 295.6,190.3 295.6,209.1 257.4,201.1" fill="#ecd800"/><polygon points="259.8,184.1 293.3,192.0 293.3,206.3 259.8,199.3" fill="#e6de70"/><polygon points="259.8,193.7 293.3,201.1 293.3,206.3 259.8,199.3" fill="#e8d420"/><polygon points="331.3,198.4 361.3,204.8 361.3,221.6 331.3,216.1" fill="#ecd800"/><polygon points="333.4,201.0 359.3,206.4 359.3,219.2 333.4,214.3" fill="#e6de70"/><polygon points="333.4,209.4 359.3,214.5 359.3,219.2 333.4,214.3" fill="#e8d420"/><polygon points="363.2,205.2 391.7,211.0 391.7,226.9 363.2,221.9" fill="#ecd800"/><polygon points="365.2,207.6 389.8,212.5 389.8,224.7 365.2,220.3" fill="#e6de70"/><polygon points="365.2,215.6 389.8,220.2 389.8,224.7 365.2,220.3" fill="#e8d420"/><polygon points="393.5,211.3 414.9,215.5 414.9,230.9 393.5,227.3" fill="#ecd800"/><polygon points="395.4,213.6 413.1,217.0 413.1,228.7 395.4,225.7" fill="#e6de70"/><polygon points="395.4,221.2 413.1,224.4 413.1,228.7 395.4,225.7" fill="#e8d420"/><polygon points="391.7,211.0 397.9,212.2 391.7,216.1" fill="#a86000"/><polygon points="416.6,215.8 429.0,218.1 429.0,233.2 416.6,231.1" fill="#ecd800"/><polygon points="418.5,218.0 427.2,219.6 427.2,231.0 418.5,229.6" fill="#e6de70"/><polygon points="418.5,225.3 427.2,226.8 427.2,231.0 418.5,229.6" fill="#e8d420"/><polygon points="430.7,218.4 450.9,222.1 450.9,236.6 430.7,233.4" fill="#ecd800"/><polygon points="432.5,220.6 449.1,223.6 449.1,234.6 432.5,231.9" fill="#e6de70"/><polygon points="432.5,227.7 449.1,230.5 449.1,234.6 432.5,231.9" fill="#e8d420"/><polygon points="429.0,218.1 434.8,219.2 429.0,223.0" fill="#a86000"/><polygon points="452.5,222.4 478.4,227.0 478.4,240.8 452.5,236.9" fill="#ecd800"/><polygon points="454.2,224.5 476.7,228.3 476.7,238.9 454.2,235.4" fill="#e6de70"/><polygon points="454.2,231.4 476.7,235.0 476.7,238.9 454.2,235.4" fill="#e8d420"/><polygon points="450.9,222.1 456.5,223.1 450.9,226.8" fill="#a86000"/><polygon points="500.1,230.6 524.6,234.6 524.6,247.4 500.1,244.0" fill="#ecd800"/><polygon points="501.7,232.5 523.1,235.9 523.1,245.6 501.7,242.6" fill="#e6de70"/><polygon points="501.7,238.9 523.1,242.0 523.1,245.6 501.7,242.6" fill="#e8d420"/><polygon points="498.6,230.4 503.8,231.2 498.6,234.7" fill="#a86000"/><polygon points="189.8,188.3 213.8,193.8 213.8,215.3 189.8,210.7" fill="#ecd800"/><polygon points="192.5,191.6 211.2,195.8 211.2,212.2 192.5,208.5" fill="#e6de70"/><polygon points="192.5,202.3 211.2,206.2 211.2,212.2 192.5,208.5" fill="#e8d420"/><polygon points="216.2,194.4 252.3,202.3 252.3,222.5 216.2,215.8" fill="#ecd800"/><polygon points="218.7,197.5 249.9,204.2 249.9,219.6 218.7,213.7" fill="#e6de70"/><polygon points="218.7,207.7 249.9,213.9 249.9,219.6 218.7,213.7" fill="#e8d420"/><polygon points="254.6,202.8 276.1,207.3 276.1,226.6 254.6,222.9" fill="#ecd800"/><polygon points="257.0,205.7 273.8,209.1 273.8,223.9 257.0,220.9" fill="#e6de70"/><polygon points="257.0,215.3 273.8,218.4 273.8,223.9 257.0,220.9" fill="#e8d420"/><polygon points="278.3,207.7 293.8,210.8 293.8,229.6 278.3,227.0" fill="#ecd800"/><polygon points="280.6,210.5 291.6,212.6 291.6,227.0 280.6,225.1" fill="#e6de70"/><polygon points="280.6,219.7 291.6,221.7 291.6,227.0 280.6,225.1" fill="#e8d420"/><polygon points="295.9,211.2 316.1,215.1 316.1,233.3 295.9,230.0" fill="#ecd800"/><polygon points="298.2,213.9 313.9,216.9 313.9,230.7 298.2,228.1" fill="#e6de70"/><polygon points="298.2,222.9 313.9,225.6 313.9,230.7 298.2,228.1" fill="#e8d420"/><polygon points="318.1,215.5 348.7,221.2 348.7,257.5 318.1,253.7" fill="#ecd800"/><polygon points="320.2,218.1 346.7,222.9 346.7,255.2 320.2,251.8" fill="#e6de70"/><polygon points="320.2,238.8 346.7,242.7 346.7,255.2 320.2,251.8" fill="#e8d420"/><polygon points="316.1,215.1 323.1,216.5 316.1,221.0" fill="#a86000"/><polygon points="350.6,221.6 379.7,226.7 379.7,243.0 350.6,238.7" fill="#ecd800"/><polygon points="352.7,224.0 377.8,228.3 377.8,240.7 352.7,236.9" fill="#e6de70"/><polygon points="352.7,232.2 377.8,236.2 377.8,240.7 352.7,236.9" fill="#e8d420"/><polygon points="381.5,227.0 394.6,229.2 394.6,245.1 381.5,243.3" fill="#ecd800"/><polygon points="383.5,229.3 392.7,230.8 392.7,242.9 383.5,241.6" fill="#e6de70"/><polygon points="383.5,237.1 392.7,238.5 392.7,242.9 383.5,241.6" fill="#e8d420"/><polygon points="379.7,226.7 386.0,227.8 379.7,232.0" fill="#a86000"/><polygon points="396.4,229.5 423.4,233.9 423.4,249.1 396.4,245.4" fill="#ecd800"/><polygon points="398.3,231.7 421.6,235.5 421.6,247.0 398.3,243.7" fill="#e6de70"/><polygon points="398.3,239.3 421.6,242.8 421.6,247.0 398.3,243.7" fill="#e8d420"/><polygon points="425.1,234.2 445.5,237.4 445.5,252.0 425.1,249.3" fill="#ecd800"/><polygon points="426.9,236.3 443.7,238.9 443.7,250.0 426.9,247.8" fill="#e6de70"/><polygon points="426.9,243.5 443.7,245.9 443.7,250.0 426.9,247.8" fill="#e8d420"/><polygon points="447.1,237.6 472.0,241.4 472.0,255.4 447.1,252.2" fill="#ecd800"/><polygon points="448.9,239.7 470.3,242.8 470.3,253.5 448.9,250.7" fill="#e6de70"/><polygon points="448.9,246.6 470.3,249.6 470.3,253.5 448.9,250.7" fill="#e8d420"/><polygon points="473.5,241.6 502.3,245.7 502.3,259.0 473.5,255.6" fill="#ecd800"/><polygon points="475.2,243.5 500.7,247.1 500.7,257.3 475.2,254.1" fill="#e6de70"/><polygon points="475.2,250.2 500.7,253.5 500.7,257.3 475.2,254.1" fill="#e8d420"/><polygon points="503.8,246.0 527.6,249.2 527.6,262.0 503.8,259.2" fill="#ecd800"/><polygon points="505.4,247.8 526.1,250.6 526.1,260.3 505.4,257.8" fill="#e6de70"/><polygon points="505.4,254.1 526.1,256.7 526.1,260.3 505.4,257.8" fill="#e8d420"/><polygon points="502.3,245.7 507.4,246.5 502.3,250.1" fill="#a86000"/><polygon points="212.2,217.4 241.0,222.7 241.0,243.2 212.2,239.0" fill="#ecd800"/><polygon points="214.8,220.5 238.6,224.7 238.6,240.4 214.8,236.8" fill="#e6de70"/><polygon points="214.8,230.8 238.6,234.6 238.6,240.4 214.8,236.8" fill="#e8d420"/><polygon points="209.8,217.0 218.2,218.5 209.8,224.0" fill="#a86000"/><polygon points="243.3,223.1 270.7,227.9 270.7,247.4 243.3,243.6" fill="#ecd800"/><polygon points="245.8,226.0 268.4,229.8 268.4,244.7 245.8,241.5" fill="#e6de70"/><polygon points="245.8,235.8 268.4,239.3 268.4,244.7 245.8,241.5" fill="#e8d420"/><polygon points="272.9,228.2 299.0,232.6 299.0,251.2 272.9,247.7" fill="#ecd800"/><polygon points="275.2,231.0 296.8,234.5 296.8,248.7 275.2,245.7" fill="#e6de70"/><polygon points="275.2,240.3 296.8,243.4 296.8,248.7 275.2,245.7" fill="#e8d420"/><polygon points="270.7,227.9 278.3,229.1 270.7,234.2" fill="#a86000"/><polygon points="301.1,232.9 316.1,235.3 316.1,253.4 301.1,251.5" fill="#ecd800"/><polygon points="303.3,235.5 313.9,237.1 313.9,251.0 303.3,249.6" fill="#e6de70"/><polygon points="303.3,244.4 313.9,245.9 313.9,251.0 303.3,249.6" fill="#e8d420"/><polygon points="350.6,240.6 373.7,243.9 373.7,260.4 350.6,257.7" fill="#ecd800"/><polygon points="352.7,242.9 371.7,245.7 371.7,258.2 352.7,255.9" fill="#e6de70"/><polygon points="352.7,251.1 371.7,253.6 371.7,258.2 352.7,255.9" fill="#e8d420"/><polygon points="375.5,244.2 393.2,246.7 393.2,262.6 375.5,260.6" fill="#ecd800"/><polygon points="377.5,246.5 391.3,248.4 391.3,260.5 377.5,258.9" fill="#e6de70"/><polygon points="377.5,254.3 391.3,256.0 391.3,260.5 377.5,258.9" fill="#e8d420"/><polygon points="373.7,243.9 380.0,244.9 373.7,249.3" fill="#a86000"/><polygon points="394.9,246.9 422.0,250.6 422.0,265.8 394.9,262.8" fill="#ecd800"/><polygon points="396.9,249.1 420.2,252.2 420.2,263.8 396.9,261.2" fill="#e6de70"/><polygon points="396.9,256.7 420.2,259.5 420.2,263.8 396.9,261.2" fill="#e8d420"/><polygon points="423.7,250.8 435.9,252.4 435.9,267.3 423.7,266.0" fill="#ecd800"/><polygon points="425.5,252.9 434.1,254.0 434.1,265.3 425.5,264.4" fill="#e6de70"/><polygon points="425.5,260.1 434.1,261.1 434.1,265.3 425.5,264.4" fill="#e8d420"/><polygon points="437.6,252.6 462.8,255.8 462.8,270.0 437.6,267.4" fill="#ecd800"/><polygon points="439.4,254.6 461.1,257.3 461.1,268.1 439.4,265.9" fill="#e6de70"/><polygon points="439.4,261.7 461.1,264.1 461.1,268.1 439.4,265.9" fill="#e8d420"/><polygon points="464.4,256.0 488.6,258.9 488.6,272.5 464.4,270.2" fill="#ecd800"/><polygon points="466.1,257.9 486.9,260.4 486.9,270.7 466.1,268.6" fill="#e6de70"/><polygon points="466.1,264.7 486.9,266.9 486.9,270.7 466.1,268.6" fill="#e8d420"/><polygon points="490.1,259.1 518.1,262.3 518.1,275.3 490.1,272.7" fill="#ecd800"/><polygon points="491.7,260.9 516.5,263.7 516.5,273.6 491.7,271.2" fill="#e6de70"/><polygon points="491.7,267.4 516.5,269.9 516.5,273.6 491.7,271.2" fill="#e8d420"/><polygon points="519.5,262.5 528.8,263.5 528.8,276.3 519.5,275.4" fill="#ecd800"/><polygon points="521.1,264.2 527.3,264.9 527.3,274.6 521.1,274.0" fill="#e6de70"/><polygon points="521.1,270.4 527.3,271.0 527.3,274.6 521.1,274.0" fill="#e8d420"/><polygon points="173.0,235.4 219.7,242.5 219.7,263.8 173.0,258.4" fill="#ecd800"/><polygon points="175.8,238.6 217.2,244.7 217.2,260.9 175.8,256.0" fill="#e6de70"/><polygon points="175.8,249.6 217.2,254.9 217.2,260.9 175.8,256.0" fill="#e8d420"/><polygon points="222.1,242.8 250.5,246.8 250.5,267.1 222.1,264.0" fill="#ecd800"/><polygon points="224.6,245.7 248.0,249.0 248.0,264.4 224.6,261.8" fill="#e6de70"/><polygon points="224.6,255.9 248.0,258.7 248.0,264.4 224.6,261.8" fill="#e8d420"/><polygon points="252.7,247.2 268.9,249.4 268.9,269.0 252.7,267.3" fill="#ecd800"/><polygon points="255.1,249.9 266.6,251.4 266.6,266.4 255.1,265.1" fill="#e6de70"/><polygon points="255.1,259.5 266.6,260.9 266.6,266.4 255.1,265.1" fill="#e8d420"/><polygon points="271.1,249.6 304.2,254.0 304.2,293.0 271.1,290.9" fill="#ecd800"/><polygon points="273.4,252.3 302.0,255.9 302.0,290.6 273.4,288.7" fill="#e6de70"/><polygon points="273.4,274.6 302.0,277.2 302.0,290.6 273.4,288.7" fill="#e8d420"/><polygon points="306.2,254.2 326.0,256.7 326.0,274.5 306.2,272.6" fill="#ecd800"/><polygon points="308.5,256.7 323.9,258.6 323.9,272.2 308.5,270.6" fill="#e6de70"/><polygon points="308.5,265.5 323.9,267.1 323.9,272.2 308.5,270.6" fill="#e8d420"/><polygon points="304.2,254.0 311.3,254.9 304.2,259.9" fill="#a86000"/><polygon points="328.0,256.9 351.9,259.8 351.9,276.8 328.0,274.7" fill="#ecd800"/><polygon points="330.2,259.3 349.8,261.6 349.8,274.6 330.2,272.8" fill="#e6de70"/><polygon points="330.2,267.8 349.8,269.8 349.8,274.6 330.2,272.8" fill="#e8d420"/><polygon points="353.8,260.0 372.1,262.1 372.1,278.6 353.8,277.0" fill="#ecd800"/><polygon points="355.9,262.3 370.1,263.9 370.1,276.4 355.9,275.2" fill="#e6de70"/><polygon points="355.9,270.4 370.1,271.8 370.1,276.4 355.9,275.2" fill="#e8d420"/><polygon points="351.9,259.8 358.5,260.5 351.9,265.3" fill="#a86000"/><polygon points="374.0,262.3 407.8,266.0 407.8,281.6 374.0,278.8" fill="#ecd800"/><polygon points="375.9,264.5 405.9,267.7 405.9,279.5 375.9,277.0" fill="#e6de70"/><polygon points="375.9,272.4 405.9,275.2 405.9,279.5 375.9,277.0" fill="#e8d420"/><polygon points="409.5,266.2 430.4,268.4 430.4,283.4 409.5,281.7" fill="#ecd800"/><polygon points="411.4,268.2 428.6,270.0 428.6,281.4 411.4,280.0" fill="#e6de70"/><polygon points="411.4,275.7 428.6,277.2 428.6,281.4 411.4,280.0" fill="#e8d420"/><polygon points="407.8,266.0 413.8,266.6 407.8,271.0" fill="#a86000"/><polygon points="432.1,268.5 444.1,269.8 444.1,284.4 432.1,283.5" fill="#ecd800"/><polygon points="433.9,270.5 442.4,271.3 442.4,282.5 433.9,281.8" fill="#e6de70"/><polygon points="433.9,277.7 442.4,278.4 442.4,282.5 433.9,281.8" fill="#e8d420"/><polygon points="445.7,269.9 475.8,272.8 475.8,286.8 445.7,284.5" fill="#ecd800"/><polygon points="447.5,271.8 474.2,274.4 474.2,285.0 447.5,282.9" fill="#e6de70"/><polygon points="447.5,278.8 474.2,281.1 474.2,285.0 447.5,282.9" fill="#e8d420"/><polygon points="477.4,273.0 501.0,275.2 501.0,303.3 477.4,302.3" fill="#ecd800"/><polygon points="479.0,274.8 499.4,276.7 499.4,301.7 479.0,300.7" fill="#e6de70"/><polygon points="479.0,290.7 499.4,292.0 499.4,301.7 479.0,300.7" fill="#e8d420"/><polygon points="502.5,275.3 530.0,277.8 530.0,290.5 502.5,288.6" fill="#ecd800"/><polygon points="504.1,277.1 528.4,279.2 528.4,288.8 504.1,287.1" fill="#e6de70"/><polygon points="504.1,283.4 528.4,285.3 528.4,288.8 504.1,287.1" fill="#e8d420"/><polygon points="189.8,262.9 235.3,267.8 235.3,288.5 189.8,285.3" fill="#ecd800"/><polygon points="192.5,265.9 232.8,270.0 232.8,285.8 192.5,282.8" fill="#e6de70"/><polygon points="192.5,276.5 232.8,280.0 232.8,285.8 192.5,282.8" fill="#e8d420"/><polygon points="237.6,268.0 268.9,271.2 268.9,290.8 237.6,288.7" fill="#ecd800"/><polygon points="240.1,270.7 266.6,273.3 266.6,288.2 240.1,286.4" fill="#e6de70"/><polygon points="240.1,280.6 266.6,282.7 266.6,288.2 240.1,286.4" fill="#e8d420"/><polygon points="306.2,274.7 321.1,276.0 321.1,294.0 306.2,293.1" fill="#ecd800"/><polygon points="308.5,277.1 318.9,278.0 318.9,291.7 308.5,291.1" fill="#e6de70"/><polygon points="308.5,285.9 318.9,286.7 318.9,291.7 308.5,291.1" fill="#e8d420"/><polygon points="323.1,276.2 342.3,277.9 342.3,295.3 323.1,294.1" fill="#ecd800"/><polygon points="325.2,278.6 340.2,279.8 340.2,293.1 325.2,292.1" fill="#e6de70"/><polygon points="325.2,287.1 340.2,288.2 340.2,293.1 325.2,292.1" fill="#e8d420"/><polygon points="344.3,278.1 379.7,281.1 379.7,297.4 344.3,295.4" fill="#ecd800"/><polygon points="346.3,280.3 377.8,282.9 377.8,295.3 346.3,293.4" fill="#e6de70"/><polygon points="346.3,288.6 377.8,290.7 377.8,295.3 346.3,293.4" fill="#e8d420"/><polygon points="381.5,281.2 409.2,283.4 409.2,298.9 381.5,297.5" fill="#ecd800"/><polygon points="383.5,283.3 407.3,285.1 407.3,297.0 383.5,295.6" fill="#e6de70"/><polygon points="383.5,291.1 407.3,292.6 407.3,297.0 383.5,295.6" fill="#e8d420"/><polygon points="410.9,283.5 442.8,285.9 442.8,300.6 410.9,299.0" fill="#ecd800"/><polygon points="412.8,285.5 441.0,287.6 441.0,298.8 412.8,297.3" fill="#e6de70"/><polygon points="412.8,292.9 441.0,294.6 441.0,298.8 412.8,297.3" fill="#e8d420"/><polygon points="444.4,286.1 464.1,287.5 464.1,301.7 444.4,300.7" fill="#ecd800"/><polygon points="446.2,287.9 462.4,289.1 462.4,299.9 446.2,299.0" fill="#e6de70"/><polygon points="446.2,294.9 462.4,295.9 462.4,299.9 446.2,299.0" fill="#e8d420"/><polygon points="465.7,287.6 475.8,288.3 475.8,302.2 465.7,301.7" fill="#ecd800"/><polygon points="467.4,289.4 474.2,289.9 474.2,300.4 467.4,300.1" fill="#e6de70"/><polygon points="467.4,296.2 474.2,296.5 474.2,300.4 467.4,300.1" fill="#e8d420"/><polygon points="502.5,290.1 524.1,291.5 524.1,304.3 502.5,303.4" fill="#ecd800"/><polygon points="504.1,291.8 522.5,293.0 522.5,302.7 504.1,301.9" fill="#e6de70"/><polygon points="504.1,298.2 522.5,299.1 522.5,302.7 504.1,301.9" fill="#e8d420"/><polygon points="192.9,288.0 238.2,291.0 238.2,311.6 192.9,310.2" fill="#ecd800"/><polygon points="195.6,290.8 235.7,293.3 235.7,309.1 195.6,307.6" fill="#e6de70"/><polygon points="195.6,301.4 235.7,303.3 235.7,309.1 195.6,307.6" fill="#e8d420"/><polygon points="240.5,291.2 282.4,293.8 282.4,313.0 240.5,311.7" fill="#ecd800"/><polygon points="242.9,293.8 280.1,295.9 280.1,310.6 242.9,309.3" fill="#e6de70"/><polygon points="242.9,303.6 280.1,305.2 280.1,310.6 242.9,309.3" fill="#e8d420"/><polygon points="284.5,293.9 305.0,295.1 305.0,313.6 284.5,313.0" fill="#ecd800"/><polygon points="286.8,296.3 302.8,297.2 302.8,311.3 286.8,310.8" fill="#e6de70"/><polygon points="286.8,305.5 302.8,306.1 302.8,311.3 286.8,310.8" fill="#e8d420"/><polygon points="307.1,295.2 321.9,296.1 321.9,314.0 307.1,313.6" fill="#ecd800"/><polygon points="309.3,297.6 319.7,298.1 319.7,311.8 309.3,311.5" fill="#e6de70"/><polygon points="309.3,306.4 319.7,306.8 319.7,311.8 309.3,311.5" fill="#e8d420"/><polygon points="305.0,295.1 312.2,295.5 305.0,301.1" fill="#a86000"/><polygon points="323.9,296.2 338.3,297.0 338.3,314.5 323.9,314.1" fill="#ecd800"/><polygon points="326.0,298.5 336.2,299.0 336.2,312.3 326.0,312.0" fill="#e6de70"/><polygon points="326.0,307.0 336.2,307.4 336.2,312.3 326.0,312.0" fill="#e8d420"/><polygon points="340.2,297.1 359.0,298.1 359.0,315.0 340.2,314.5" fill="#ecd800"/><polygon points="342.3,299.3 357.0,300.0 357.0,312.9 342.3,312.5" fill="#e6de70"/><polygon points="342.3,307.6 357.0,308.2 357.0,312.9 342.3,312.5" fill="#e8d420"/><polygon points="360.9,298.2 374.4,298.9 374.4,315.4 360.9,315.0" fill="#ecd800"/><polygon points="362.9,300.3 372.4,300.8 372.4,313.3 362.9,313.1" fill="#e6de70"/><polygon points="362.9,308.4 372.4,308.7 372.4,313.3 362.9,313.1" fill="#e8d420"/><polygon points="376.2,299.0 393.9,299.9 393.9,315.8 376.2,315.4" fill="#ecd800"/><polygon points="378.2,301.1 392.0,301.7 392.0,313.9 378.2,313.5" fill="#e6de70"/><polygon points="378.2,308.9 392.0,309.4 392.0,313.9 378.2,313.5" fill="#e8d420"/><polygon points="395.7,300.0 428.3,301.6 428.3,316.6 395.7,315.9" fill="#ecd800"/><polygon points="397.6,302.0 426.5,303.3 426.5,314.8 397.6,314.0" fill="#e6de70"/><polygon points="397.6,309.6 426.5,310.5 426.5,314.8 397.6,314.0" fill="#e8d420"/><polygon points="430.0,301.7 446.2,302.4 446.2,317.0 430.0,316.7" fill="#ecd800"/><polygon points="431.8,303.5 444.4,304.1 444.4,315.2 431.8,314.9" fill="#e6de70"/><polygon points="431.8,310.7 444.4,311.1 444.4,315.2 431.8,314.9" fill="#e8d420"/><polygon points="447.8,302.5 467.4,303.4 467.4,317.5 447.8,317.1" fill="#ecd800"/><polygon points="449.5,304.3 465.7,305.0 465.7,315.7 449.5,315.3" fill="#e6de70"/><polygon points="449.5,311.3 465.7,311.8 465.7,315.7 449.5,315.3" fill="#e8d420"/><polygon points="469.0,303.4 493.0,304.5 493.0,318.0 469.0,317.5" fill="#ecd800"/><polygon points="470.7,305.2 491.3,306.0 491.3,316.3 470.7,315.8" fill="#e6de70"/><polygon points="470.7,311.9 491.3,312.5 491.3,316.3 470.7,315.8" fill="#e8d420"/><polygon points="494.5,304.5 512.7,305.3 512.7,318.4 494.5,318.0" fill="#ecd800"/><polygon points="496.1,306.2 511.1,306.8 511.1,316.8 496.1,316.4" fill="#e6de70"/><polygon points="496.1,312.7 511.1,313.1 511.1,316.8 496.1,316.4" fill="#e8d420"/><polygon points="493.0,304.5 498.2,304.7 493.0,308.9" fill="#a86000"/><polygon points="514.1,305.4 529.4,306.0 529.4,318.7 514.1,318.4" fill="#ecd800"/><polygon points="515.7,307.0 527.8,307.5 527.8,317.1 515.7,316.9" fill="#e6de70"/><polygon points="515.7,313.2 527.8,313.6 527.8,317.1 515.7,316.9" fill="#e8d420"/><polygon points="201.1,312.9 245.8,314.1 245.8,334.5 201.1,334.9" fill="#ecd800"/><polygon points="203.8,315.6 243.3,316.5 243.3,332.1 203.8,332.2" fill="#e6de70"/><polygon points="203.8,326.1 243.3,326.4 243.3,332.1 203.8,332.2" fill="#e8d420"/><polygon points="248.0,314.2 269.8,314.8 269.8,334.4 248.0,334.5" fill="#ecd800"/><polygon points="250.5,316.7 267.5,317.1 267.5,332.0 250.5,332.1" fill="#e6de70"/><polygon points="250.5,326.4 267.5,326.5 267.5,332.0 250.5,332.1" fill="#e8d420"/><polygon points="272.0,314.8 311.8,315.8 311.8,334.1 272.0,334.3" fill="#ecd800"/><polygon points="274.3,317.2 309.6,317.9 309.6,331.9 274.3,332.0" fill="#e6de70"/><polygon points="274.3,326.5 309.6,326.7 309.6,331.9 274.3,332.0" fill="#e8d420"/><polygon points="313.9,315.8 338.3,316.4 338.3,333.9 313.9,334.0" fill="#ecd800"/><polygon points="316.1,318.1 336.2,318.5 336.2,331.8 316.1,331.8" fill="#e6de70"/><polygon points="316.1,326.8 336.2,326.9 336.2,331.8 316.1,331.8" fill="#e8d420"/><polygon points="340.2,316.5 369.8,317.1 369.8,333.7 340.2,333.9" fill="#ecd800"/><polygon points="342.3,318.6 367.8,319.1 367.8,331.7 342.3,331.8" fill="#e6de70"/><polygon points="342.3,326.9 367.8,327.0 367.8,331.7 342.3,331.8" fill="#e8d420"/><polygon points="338.3,316.4 345.1,316.6 338.3,322.1" fill="#a86000"/><polygon points="371.7,317.1 389.5,317.5 389.5,333.6 371.7,333.7" fill="#ecd800"/><polygon points="373.7,319.2 387.5,319.4 387.5,331.6 373.7,331.7" fill="#e6de70"/><polygon points="373.7,327.1 387.5,327.1 387.5,331.6 373.7,331.7" fill="#e8d420"/><polygon points="391.3,317.6 412.8,318.0 412.8,333.4 391.3,333.6" fill="#ecd800"/><polygon points="393.2,319.5 410.9,319.8 410.9,331.6 393.2,331.6" fill="#e6de70"/><polygon points="393.2,327.2 410.9,327.2 410.9,331.6 393.2,331.6" fill="#e8d420"/><polygon points="414.5,318.0 440.7,318.5 440.7,333.3 414.5,333.4" fill="#ecd800"/><polygon points="416.4,319.9 438.9,320.3 438.9,331.5 416.4,331.6" fill="#e6de70"/><polygon points="416.4,327.3 438.9,327.4 438.9,331.5 416.4,331.6" fill="#e8d420"/><polygon points="442.4,318.6 462.2,318.9 462.2,333.2 442.4,333.3" fill="#ecd800"/><polygon points="444.1,320.4 460.5,320.6 460.5,331.5 444.1,331.5" fill="#e6de70"/><polygon points="444.1,327.4 460.5,327.5 460.5,331.5 444.1,331.5" fill="#e8d420"/><polygon points="440.7,318.5 446.4,318.6 440.7,323.3" fill="#a86000"/><polygon points="463.7,319.0 475.2,319.2 475.2,333.1 463.7,333.2" fill="#ecd800"/><polygon points="465.5,320.7 473.5,320.8 473.5,331.4 465.5,331.4" fill="#e6de70"/><polygon points="465.5,327.5 473.5,327.5 473.5,331.4 465.5,331.4" fill="#e8d420"/><polygon points="476.7,319.2 500.4,319.6 500.4,333.0 476.7,333.1" fill="#ecd800"/><polygon points="478.4,320.9 498.8,321.2 498.8,331.4 478.4,331.4" fill="#e6de70"/><polygon points="478.4,327.5 498.8,327.6 498.8,331.4 478.4,331.4" fill="#e8d420"/><polygon points="501.9,319.6 527.0,320.1 527.0,332.8 501.9,333.0" fill="#ecd800"/><polygon points="503.5,321.3 525.5,321.6 525.5,331.3 503.5,331.4" fill="#e6de70"/><polygon points="503.5,327.6 525.5,327.7 525.5,331.3 503.5,331.4" fill="#e8d420"/><polygon points="202.1,337.3 225.6,337.0 225.6,358.1 202.1,359.2" fill="#ecd800"/><polygon points="204.8,339.9 223.1,339.6 223.1,355.7 204.8,356.5" fill="#e6de70"/><polygon points="204.8,350.4 223.1,349.8 223.1,355.7 204.8,356.5" fill="#e8d420"/><polygon points="228.0,337.0 270.7,336.5 270.7,356.1 228.0,358.0" fill="#ecd800"/><polygon points="230.5,339.5 268.4,338.9 268.4,353.8 230.5,355.4" fill="#e6de70"/><polygon points="230.5,349.5 268.4,348.3 268.4,353.8 230.5,355.4" fill="#e8d420"/><polygon points="225.6,337.0 233.8,336.9 225.6,343.9" fill="#a86000"/><polygon points="272.9,336.5 293.8,336.3 293.8,355.1 272.9,356.0" fill="#ecd800"/><polygon points="275.2,338.8 291.6,338.6 291.6,352.9 275.2,353.5" fill="#e6de70"/><polygon points="275.2,348.1 291.6,347.6 291.6,352.9 275.2,353.5" fill="#e8d420"/><polygon points="295.9,336.3 316.1,336.0 316.1,354.2 295.9,355.0" fill="#ecd800"/><polygon points="298.2,338.5 313.9,338.3 313.9,352.1 298.2,352.7" fill="#e6de70"/><polygon points="298.2,347.4 313.9,347.0 313.9,352.1 298.2,352.7" fill="#e8d420"/><polygon points="318.1,336.0 342.3,335.8 342.3,353.1 318.1,354.1" fill="#ecd800"/><polygon points="320.2,338.2 340.2,337.9 340.2,351.1 320.2,351.8" fill="#e6de70"/><polygon points="320.2,346.8 340.2,346.3 340.2,351.1 320.2,351.8" fill="#e8d420"/><polygon points="316.1,336.0 323.1,336.0 316.1,341.9" fill="#a86000"/><polygon points="344.3,335.8 373.7,335.5 373.7,352.0 344.3,353.1" fill="#ecd800"/><polygon points="346.3,337.8 371.7,337.5 371.7,350.1 346.3,350.9" fill="#e6de70"/><polygon points="346.3,346.1 371.7,345.4 371.7,350.1 346.3,350.9" fill="#e8d420"/><polygon points="375.5,335.5 403.4,335.2 403.4,368.3 375.5,370.2" fill="#ecd800"/><polygon points="377.5,337.4 401.5,337.1 401.5,366.6 377.5,368.1" fill="#e6de70"/><polygon points="377.5,356.2 401.5,355.2 401.5,366.6 377.5,368.1" fill="#e8d420"/><polygon points="405.2,335.2 417.8,335.1 417.8,350.4 405.2,350.8" fill="#ecd800"/><polygon points="407.0,337.1 415.9,337.0 415.9,348.6 407.0,348.9" fill="#e6de70"/><polygon points="407.0,344.5 415.9,344.3 415.9,348.6 407.0,348.9" fill="#e8d420"/><polygon points="403.4,335.2 409.5,335.2 403.4,340.3" fill="#a86000"/><polygon points="419.5,335.1 431.8,335.0 431.8,349.9 419.5,350.4" fill="#ecd800"/><polygon points="421.3,336.9 430.0,336.8 430.0,348.2 421.3,348.5" fill="#e6de70"/><polygon points="421.3,344.2 430.0,344.0 430.0,348.2 421.3,348.5" fill="#e8d420"/><polygon points="433.4,335.0 453.5,334.8 453.5,349.2 433.4,349.9" fill="#ecd800"/><polygon points="435.2,336.7 451.8,336.6 451.8,347.6 435.2,348.0" fill="#e6de70"/><polygon points="435.2,343.9 451.8,343.5 451.8,347.6 435.2,348.0" fill="#e8d420"/><polygon points="455.1,334.8 479.7,334.6 479.7,348.4 455.1,349.2" fill="#ecd800"/><polygon points="456.9,336.5 478.0,336.3 478.0,346.8 456.9,347.4" fill="#e6de70"/><polygon points="456.9,343.4 478.0,342.9 478.0,346.8 456.9,347.4" fill="#e8d420"/><polygon points="481.2,334.6 504.7,334.4 504.7,347.7 481.2,348.4" fill="#ecd800"/><polygon points="482.9,336.2 503.1,336.0 503.1,346.1 482.9,346.7" fill="#e6de70"/><polygon points="482.9,342.8 503.1,342.4 503.1,346.1 482.9,346.7" fill="#e8d420"/><polygon points="506.2,334.4 527.6,334.3 527.6,347.0 506.2,347.6" fill="#ecd800"/><polygon points="507.8,336.0 526.1,335.8 526.1,345.5 507.8,346.0" fill="#e6de70"/><polygon points="507.8,342.3 526.1,341.9 526.1,345.5 507.8,346.0" fill="#e8d420"/><polygon points="504.7,334.4 509.9,334.4 504.7,338.7" fill="#a86000"/><polygon points="188.8,362.4 226.6,360.4 226.6,381.4 188.8,384.8" fill="#ecd800"/><polygon points="191.5,364.9 224.1,363.1 224.1,379.1 191.5,381.9" fill="#e6de70"/><polygon points="191.5,375.6 224.1,373.2 224.1,379.1 191.5,381.9" fill="#e8d420"/><polygon points="228.9,360.3 251.4,359.2 251.4,379.4 228.9,381.2" fill="#ecd800"/><polygon points="231.4,362.7 249.0,361.7 249.0,377.1 231.4,378.5" fill="#e6de70"/><polygon points="231.4,372.7 249.0,371.5 249.0,377.1 231.4,378.5" fill="#e8d420"/><polygon points="226.6,360.4 234.7,360.0 226.6,367.2" fill="#a86000"/><polygon points="253.7,359.1 287.7,357.5 287.7,376.5 253.7,379.2" fill="#ecd800"/><polygon points="256.1,361.4 285.4,359.9 285.4,374.4 256.1,376.6" fill="#e6de70"/><polygon points="256.1,371.0 285.4,369.0 285.4,374.4 256.1,376.6" fill="#e8d420"/><polygon points="289.8,357.4 305.0,356.7 305.0,375.2 289.8,376.3" fill="#ecd800"/><polygon points="292.1,359.5 302.8,359.0 302.8,373.1 292.1,373.9" fill="#e6de70"/><polygon points="292.1,368.6 302.8,367.9 302.8,373.1 292.1,373.9" fill="#e8d420"/><polygon points="307.1,356.6 338.3,355.2 338.3,372.7 307.1,375.0" fill="#ecd800"/><polygon points="309.3,358.7 336.2,357.4 336.2,370.8 309.3,372.6" fill="#e6de70"/><polygon points="309.3,367.5 336.2,365.9 336.2,370.8 309.3,372.6" fill="#e8d420"/><polygon points="340.2,355.2 373.7,353.8 373.7,370.3 340.2,372.6" fill="#ecd800"/><polygon points="342.3,357.2 371.7,355.9 371.7,368.4 342.3,370.3" fill="#e6de70"/><polygon points="342.3,365.5 371.7,363.8 371.7,368.4 342.3,370.3" fill="#e8d420"/><polygon points="405.2,352.6 417.8,352.1 417.8,367.4 405.2,368.2" fill="#ecd800"/><polygon points="407.0,354.4 415.9,354.0 415.9,365.7 407.0,366.2" fill="#e6de70"/><polygon points="407.0,361.9 415.9,361.4 415.9,365.7 407.0,366.2" fill="#e8d420"/><polygon points="419.5,352.1 445.5,351.1 445.5,365.7 419.5,367.3" fill="#ecd800"/><polygon points="421.3,353.8 443.7,352.9 443.7,364.1 421.3,365.4" fill="#e6de70"/><polygon points="421.3,361.1 443.7,360.0 443.7,364.1 421.3,365.4" fill="#e8d420"/><polygon points="447.1,351.1 472.0,350.2 472.0,364.2 447.1,365.6" fill="#ecd800"/><polygon points="448.9,352.8 470.3,352.0 470.3,362.6 448.9,363.8" fill="#e6de70"/><polygon points="448.9,359.7 470.3,358.7 470.3,362.6 448.9,363.8" fill="#e8d420"/><polygon points="473.5,350.2 492.3,349.5 492.3,363.1 473.5,364.1" fill="#ecd800"/><polygon points="475.2,351.8 490.7,351.2 490.7,361.5 475.2,362.3" fill="#e6de70"/><polygon points="475.2,358.5 490.7,357.7 490.7,361.5 475.2,362.3" fill="#e8d420"/><polygon points="472.0,350.2 477.4,350.0 472.0,354.7" fill="#a86000"/><polygon points="493.8,349.5 504.7,349.1 504.7,362.4 493.8,363.0" fill="#ecd800"/><polygon points="495.5,351.1 503.1,350.8 503.1,360.9 495.5,361.3" fill="#e6de70"/><polygon points="495.5,357.5 503.1,357.2 503.1,360.9 495.5,361.3" fill="#e8d420"/><polygon points="506.2,349.1 523.5,348.6 523.5,361.4 506.2,362.3" fill="#ecd800"/><polygon points="507.8,350.6 521.9,350.1 521.9,359.9 507.8,360.6" fill="#e6de70"/><polygon points="507.8,356.9 521.9,356.3 521.9,359.9 507.8,360.6" fill="#e8d420"/><polygon points="178.3,388.3 216.8,384.7 216.8,429.8 178.3,436.4" fill="#ecd800"/><polygon points="181.1,390.8 214.2,387.5 214.2,427.7 181.1,433.2" fill="#e6de70"/><polygon points="181.1,416.8 214.2,412.1 214.2,427.7 181.1,433.2" fill="#e8d420"/><polygon points="219.1,384.5 255.1,381.3 255.1,423.7 219.1,429.4" fill="#ecd800"/><polygon points="221.7,386.8 252.7,383.9 252.7,421.6 221.7,426.5" fill="#e6de70"/><polygon points="221.7,411.1 252.7,407.0 252.7,421.6 221.7,426.5" fill="#e8d420"/><polygon points="257.4,381.1 284.2,378.9 284.2,398.0 257.4,401.1" fill="#ecd800"/><polygon points="259.8,383.3 281.9,381.4 281.9,395.9 259.8,398.4" fill="#e6de70"/><polygon points="259.8,392.8 281.9,390.6 281.9,395.9 259.8,398.4" fill="#e8d420"/><polygon points="255.1,381.3 262.9,380.6 255.1,387.8" fill="#a86000"/><polygon points="286.3,378.7 311.8,376.7 311.8,415.2 286.3,418.9" fill="#ecd800"/><polygon points="288.6,380.8 309.6,379.1 309.6,413.3 288.6,416.3" fill="#e6de70"/><polygon points="288.6,402.6 309.6,400.1 309.6,413.3 288.6,416.3" fill="#e8d420"/><polygon points="313.9,376.5 333.4,375.0 333.4,392.6 313.9,394.7" fill="#ecd800"/><polygon points="316.1,378.5 331.3,377.3 331.3,390.7 316.1,392.3" fill="#e6de70"/><polygon points="316.1,387.2 331.3,385.8 331.3,390.7 316.1,392.3" fill="#e8d420"/><polygon points="335.4,374.9 354.3,373.5 354.3,390.5 335.4,392.4" fill="#ecd800"/><polygon points="337.5,376.8 352.2,375.7 352.2,388.7 337.5,390.1" fill="#e6de70"/><polygon points="337.5,385.2 352.2,383.9 352.2,388.7 337.5,390.1" fill="#e8d420"/><polygon points="356.2,373.4 391.0,370.9 391.0,386.9 356.2,390.3" fill="#ecd800"/><polygon points="358.2,375.2 389.0,373.0 389.0,385.2 358.2,388.1" fill="#e6de70"/><polygon points="358.2,383.4 389.0,380.7 389.0,385.2 358.2,388.1" fill="#e8d420"/><polygon points="392.7,370.8 405.6,369.9 405.6,385.6 392.7,386.8" fill="#ecd800"/><polygon points="394.6,372.6 403.7,371.9 403.7,383.8 394.6,384.7" fill="#e6de70"/><polygon points="394.6,380.2 403.7,379.5 403.7,383.8 394.6,384.7" fill="#e8d420"/><polygon points="407.3,369.8 439.4,367.7 439.4,382.5 407.3,385.4" fill="#ecd800"/><polygon points="409.2,371.6 437.6,369.6 437.6,380.9 409.2,383.4" fill="#e6de70"/><polygon points="409.2,379.0 437.6,376.8 437.6,380.9 409.2,383.4" fill="#e8d420"/><polygon points="405.6,369.9 411.6,369.5 405.6,375.0" fill="#a86000"/><polygon points="441.0,367.6 471.3,365.8 471.3,379.8 441.0,382.4" fill="#ecd800"/><polygon points="442.8,369.3 469.6,367.6 469.6,378.3 442.8,380.5" fill="#e6de70"/><polygon points="442.8,376.3 469.6,374.3 469.6,378.3 442.8,380.5" fill="#e8d420"/><polygon points="472.9,365.7 496.7,364.3 496.7,392.7 472.9,395.2" fill="#ecd800"/><polygon points="474.5,367.3 495.1,366.0 495.1,391.2 474.5,393.3" fill="#e6de70"/><polygon points="474.5,383.2 495.1,381.5 495.1,391.2 474.5,393.3" fill="#e8d420"/><polygon points="498.2,364.2 521.1,363.0 521.1,375.8 498.2,377.6" fill="#ecd800"/><polygon points="499.8,365.7 519.5,364.6 519.5,374.4 499.8,375.9" fill="#e6de70"/><polygon points="499.8,372.2 519.5,370.8 519.5,374.4 499.8,375.9" fill="#e8d420"/><polygon points="496.7,364.3 501.9,364.0 496.7,368.7" fill="#a86000"/><polygon points="257.4,403.3 284.2,400.1 284.2,419.2 257.4,423.3" fill="#ecd800"/><polygon points="259.8,405.4 281.9,402.7 281.9,417.3 259.8,420.5" fill="#e6de70"/><polygon points="259.8,415.0 281.9,411.9 281.9,417.3 259.8,420.5" fill="#e8d420"/><polygon points="255.1,403.6 262.9,402.6 255.1,410.1" fill="#a86000"/><polygon points="313.9,396.7 338.3,394.1 338.3,411.6 313.9,414.9" fill="#ecd800"/><polygon points="316.1,398.7 336.2,396.4 336.2,409.7 316.1,412.4" fill="#e6de70"/><polygon points="316.1,407.4 336.2,404.8 336.2,409.7 316.1,412.4" fill="#e8d420"/><polygon points="340.2,393.9 363.7,391.4 363.7,408.2 340.2,411.3" fill="#ecd800"/><polygon points="342.3,395.7 361.6,393.7 361.6,406.4 342.3,408.9" fill="#e6de70"/><polygon points="342.3,404.1 361.6,401.7 361.6,406.4 342.3,408.9" fill="#e8d420"/><polygon points="365.5,391.2 393.9,388.4 393.9,404.3 365.5,407.9" fill="#ecd800"/><polygon points="367.5,393.0 392.0,390.5 392.0,402.7 367.5,405.7" fill="#e6de70"/><polygon points="367.5,401.0 392.0,398.2 392.0,402.7 367.5,405.7" fill="#e8d420"/><polygon points="363.7,391.4 370.1,390.8 363.7,396.9" fill="#a86000"/><polygon points="395.7,388.2 422.7,385.7 422.7,400.9 395.7,404.1" fill="#ecd800"/><polygon points="397.6,390.0 420.9,387.7 420.9,399.3 397.6,402.0" fill="#e6de70"/><polygon points="397.6,397.6 420.9,395.0 420.9,399.3 397.6,402.0" fill="#e8d420"/><polygon points="424.4,385.5 455.5,382.7 455.5,397.1 424.4,400.7" fill="#ecd800"/><polygon points="426.2,387.2 453.8,384.6 453.8,395.6 426.2,398.6" fill="#e6de70"/><polygon points="426.2,394.4 453.8,391.5 453.8,395.6 426.2,398.6" fill="#e8d420"/><polygon points="422.7,385.7 428.6,385.1 422.7,390.6" fill="#a86000"/><polygon points="457.1,382.6 471.3,381.4 471.3,395.4 457.1,396.9" fill="#ecd800"/><polygon points="458.9,384.2 469.6,383.2 469.6,393.9 458.9,395.0" fill="#e6de70"/><polygon points="458.9,391.0 469.6,389.9 469.6,393.9 458.9,395.0" fill="#e8d420"/><polygon points="498.2,379.1 529.4,376.6 529.4,389.3 498.2,392.5" fill="#ecd800"/><polygon points="499.8,380.6 527.8,378.3 527.8,388.0 499.8,390.7" fill="#e6de70"/><polygon points="499.8,387.0 527.8,384.4 527.8,388.0 499.8,390.7" fill="#e8d420"/><polygon points="205.2,434.2 222.7,431.2 222.7,452.4 205.2,456.0" fill="#ecd800"/><polygon points="207.8,436.4 220.1,434.2 220.1,450.4 207.8,452.9" fill="#e6de70"/><polygon points="207.8,446.8 220.1,444.4 220.1,450.4 207.8,452.9" fill="#e8d420"/><polygon points="202.7,434.6 211.2,433.2 202.7,441.7" fill="#a86000"/><polygon points="225.0,430.8 247.7,427.1 247.7,447.4 225.0,451.9" fill="#ecd800"/><polygon points="227.6,432.9 245.2,429.9 245.2,445.4 227.6,448.9" fill="#e6de70"/><polygon points="227.6,443.0 245.2,439.7 245.2,445.4 227.6,448.9" fill="#e8d420"/><polygon points="249.9,426.7 291.2,420.3 291.2,439.2 249.9,447.0" fill="#ecd800"/><polygon points="252.3,428.8 288.9,422.9 288.9,437.3 252.3,444.1" fill="#e6de70"/><polygon points="252.3,438.4 288.9,432.0 288.9,437.3 252.3,444.1" fill="#e8d420"/><polygon points="293.3,420.0 331.8,414.4 331.8,432.1 293.3,438.8" fill="#ecd800"/><polygon points="295.6,421.9 329.7,416.8 329.7,430.3 295.6,436.2" fill="#e6de70"/><polygon points="295.6,430.9 329.7,425.3 329.7,430.3 295.6,436.2" fill="#e8d420"/><polygon points="333.8,414.1 352.7,411.5 352.7,428.6 333.8,431.7" fill="#ecd800"/><polygon points="335.9,415.9 350.6,413.9 350.6,426.9 335.9,429.3" fill="#e6de70"/><polygon points="335.9,424.4 350.6,422.1 350.6,426.9 335.9,429.3" fill="#e8d420"/><polygon points="354.6,411.3 368.3,409.4 368.3,426.1 354.6,428.3" fill="#ecd800"/><polygon points="356.6,413.0 366.3,411.7 366.3,424.4 356.6,425.9" fill="#e6de70"/><polygon points="356.6,421.2 366.3,419.7 366.3,424.4 356.6,425.9" fill="#e8d420"/><polygon points="370.1,409.2 388.0,406.9 388.0,423.0 370.1,425.8" fill="#ecd800"/><polygon points="372.1,410.9 386.0,409.1 386.0,421.3 372.1,423.5" fill="#e6de70"/><polygon points="372.1,418.8 386.0,416.8 386.0,421.3 372.1,423.5" fill="#e8d420"/><polygon points="389.8,406.6 402.7,405.0 402.7,420.7 389.8,422.7" fill="#ecd800"/><polygon points="391.7,408.3 400.8,407.1 400.8,419.1 391.7,420.5" fill="#e6de70"/><polygon points="391.7,416.0 400.8,414.7 400.8,419.1 391.7,420.5" fill="#e8d420"/><polygon points="388.0,406.9 394.2,406.1 388.0,412.1" fill="#a86000"/><polygon points="404.4,404.8 425.5,402.2 425.5,417.3 404.4,420.5" fill="#ecd800"/><polygon points="406.3,406.4 423.7,404.3 423.7,415.8 406.3,418.3" fill="#e6de70"/><polygon points="406.3,413.9 423.7,411.5 423.7,415.8 406.3,418.3" fill="#e8d420"/><polygon points="427.2,402.0 447.5,399.6 447.5,430.4 427.2,433.8" fill="#ecd800"/><polygon points="429.0,403.6 445.7,401.6 445.7,428.9 429.0,431.7" fill="#e6de70"/><polygon points="429.0,420.8 445.7,418.3 445.7,428.9 429.0,431.7" fill="#e8d420"/><polygon points="425.5,402.2 431.4,401.5 425.5,407.1" fill="#a86000"/><polygon points="449.1,399.4 460.8,398.1 460.8,412.3 449.1,414.0" fill="#ecd800"/><polygon points="450.9,401.0 459.1,400.0 459.1,410.9 450.9,412.0" fill="#e6de70"/><polygon points="450.9,407.9 459.1,406.9 459.1,410.9 450.9,412.0" fill="#e8d420"/><polygon points="462.4,397.9 491.7,394.7 491.7,408.2 462.4,412.1" fill="#ecd800"/><polygon points="464.1,399.4 490.1,396.5 490.1,406.8 464.1,410.2" fill="#e6de70"/><polygon points="464.1,406.2 490.1,403.0 490.1,406.8 464.1,410.2" fill="#e8d420"/><polygon points="493.2,394.5 504.1,393.4 504.1,406.6 493.2,408.0" fill="#ecd800"/><polygon points="494.8,396.0 502.5,395.1 502.5,405.2 494.8,406.2" fill="#e6de70"/><polygon points="494.8,402.4 502.5,401.5 502.5,405.2 494.8,406.2" fill="#e8d420"/><polygon points="505.6,393.2 529.4,390.8 529.4,403.5 505.6,406.4" fill="#ecd800"/><polygon points="507.2,394.6 527.8,392.4 527.8,402.1 507.2,404.6" fill="#e6de70"/><polygon points="507.2,401.0 527.8,398.6 527.8,402.1 507.2,404.6" fill="#e8d420"/><polygon points="213.2,456.7 236.3,452.0 236.3,472.7 213.2,478.3" fill="#ecd800"/><polygon points="215.8,458.8 233.8,455.0 233.8,470.8 215.8,475.0" fill="#e6de70"/><polygon points="215.8,469.0 233.8,465.0 233.8,470.8 215.8,475.0" fill="#e8d420"/><polygon points="238.6,451.5 273.4,444.6 273.4,464.1 238.6,472.1" fill="#ecd800"/><polygon points="241.0,453.5 271.1,447.4 271.1,462.3 241.0,469.1" fill="#e6de70"/><polygon points="241.0,463.3 271.1,456.8 271.1,462.3 241.0,469.1" fill="#e8d420"/><polygon points="275.6,444.2 291.2,441.3 291.2,460.2 275.6,463.6" fill="#ecd800"/><polygon points="277.9,446.1 288.9,444.0 288.9,458.4 277.9,460.8" fill="#e6de70"/><polygon points="277.9,455.4 288.9,453.1 288.9,458.4 277.9,460.8" fill="#e8d420"/><polygon points="293.3,440.9 313.5,437.2 313.5,455.5 293.3,459.8" fill="#ecd800"/><polygon points="295.6,442.8 311.3,439.8 311.3,453.7 295.6,457.0" fill="#e6de70"/><polygon points="295.6,451.8 311.3,448.6 311.3,453.7 295.6,457.0" fill="#e8d420"/><polygon points="291.2,441.3 298.5,440.0 291.2,447.4" fill="#a86000"/><polygon points="315.6,436.9 339.9,432.6 339.9,450.1 315.6,455.0" fill="#ecd800"/><polygon points="317.7,438.7 337.8,435.1 337.8,448.4 317.7,452.4" fill="#e6de70"/><polygon points="317.7,447.4 337.8,443.5 337.8,448.4 317.7,452.4" fill="#e8d420"/><polygon points="341.9,432.3 355.9,430.0 355.9,446.9 341.9,449.7" fill="#ecd800"/><polygon points="343.9,434.0 353.8,432.3 353.8,445.3 343.9,447.2" fill="#e6de70"/><polygon points="343.9,442.3 353.8,440.5 353.8,445.3 343.9,447.2" fill="#e8d420"/><polygon points="357.7,429.6 392.4,424.1 392.4,440.0 357.7,446.6" fill="#ecd800"/><polygon points="359.8,431.3 390.5,426.3 390.5,438.4 359.8,444.1" fill="#e6de70"/><polygon points="359.8,439.4 390.5,434.0 390.5,438.4 359.8,444.1" fill="#e8d420"/><polygon points="394.2,423.8 425.5,419.0 425.5,434.1 394.2,439.7" fill="#ecd800"/><polygon points="396.1,425.4 423.7,421.1 423.7,432.6 396.1,437.4" fill="#e6de70"/><polygon points="396.1,433.0 423.7,428.4 423.7,432.6 396.1,437.4" fill="#e8d420"/><polygon points="449.1,415.6 473.9,412.1 473.9,426.1 449.1,430.1" fill="#ecd800"/><polygon points="450.9,417.1 472.2,414.0 472.2,424.7 450.9,428.1" fill="#e6de70"/><polygon points="450.9,424.0 472.2,420.8 472.2,424.7 450.9,428.1" fill="#e8d420"/><polygon points="475.5,411.9 486.7,410.4 486.7,424.1 475.5,425.8" fill="#ecd800"/><polygon points="477.1,413.4 485.0,412.3 485.0,422.7 477.1,423.9" fill="#e6de70"/><polygon points="477.1,420.0 485.0,418.8 485.0,422.7 477.1,423.9" fill="#e8d420"/><polygon points="488.2,410.2 522.3,405.8 522.3,418.6 488.2,423.8" fill="#ecd800"/><polygon points="489.8,411.6 520.7,407.5 520.7,417.3 489.8,421.9" fill="#e6de70"/><polygon points="489.8,418.1 520.7,413.7 520.7,417.3 489.8,421.9" fill="#e8d420"/><polygon points="206.2,482.4 242.9,473.4 242.9,493.9 206.2,504.2" fill="#ecd800"/><polygon points="208.8,484.4 240.5,476.4 240.5,492.1 208.8,500.8" fill="#e6de70"/><polygon points="208.8,494.8 240.5,486.3 240.5,492.1 208.8,500.8" fill="#e8d420"/><polygon points="245.2,472.8 261.6,469.0 261.6,488.8 245.2,493.2" fill="#ecd800"/><polygon points="247.7,474.7 259.2,471.9 259.2,487.1 247.7,490.1" fill="#e6de70"/><polygon points="247.7,484.4 259.2,481.5 259.2,487.1 247.7,490.1" fill="#e8d420"/><polygon points="242.9,473.4 250.8,471.5 242.9,480.0" fill="#a86000"/><polygon points="263.8,468.5 279.7,464.9 279.7,484.1 263.8,488.3" fill="#ecd800"/><polygon points="266.2,470.3 277.4,467.7 277.4,482.4 266.2,485.3" fill="#e6de70"/><polygon points="266.2,479.8 277.4,477.0 277.4,482.4 266.2,485.3" fill="#e8d420"/><polygon points="281.9,464.4 302.5,459.9 302.5,478.4 281.9,483.6" fill="#ecd800"/><polygon points="284.2,466.2 300.2,462.6 300.2,476.7 284.2,480.7" fill="#e6de70"/><polygon points="284.2,475.3 300.2,471.5 300.2,476.7 284.2,480.7" fill="#e8d420"/><polygon points="279.7,464.9 287.2,463.2 279.7,471.1" fill="#a86000"/><polygon points="304.5,459.4 324.4,455.2 324.4,473.1 304.5,477.9" fill="#ecd800"/><polygon points="306.8,461.1 322.2,457.8 322.2,471.4 306.8,475.1" fill="#e6de70"/><polygon points="306.8,470.0 322.2,466.4 322.2,471.4 306.8,475.1" fill="#e8d420"/><polygon points="302.5,459.9 309.6,458.3 302.5,465.9" fill="#a86000"/><polygon points="326.4,454.8 340.7,451.8 340.7,469.2 326.4,472.6" fill="#ecd800"/><polygon points="328.5,456.5 338.6,454.4 338.6,467.6 328.5,470.0" fill="#e6de70"/><polygon points="328.5,465.0 338.6,462.7 338.6,467.6 328.5,470.0" fill="#e8d420"/><polygon points="324.4,455.2 331.3,453.8 324.4,461.0" fill="#a86000"/><polygon points="342.7,451.5 366.0,446.8 366.0,463.5 342.7,468.8" fill="#ecd800"/><polygon points="344.7,453.1 364.0,449.2 364.0,462.0 344.7,466.2" fill="#e6de70"/><polygon points="344.7,461.4 364.0,457.3 364.0,462.0 344.7,466.2" fill="#e8d420"/><polygon points="367.8,446.5 402.0,440.0 402.0,455.8 367.8,463.1" fill="#ecd800"/><polygon points="369.8,448.1 400.1,442.3 400.1,454.3 369.8,460.7" fill="#e6de70"/><polygon points="369.8,456.0 400.1,449.8 400.1,454.3 369.8,460.7" fill="#e8d420"/><polygon points="403.7,439.7 435.9,434.0 435.9,465.4 403.7,472.8" fill="#ecd800"/><polygon points="405.6,441.3 434.1,436.1 434.1,464.0 405.6,470.5" fill="#e6de70"/><polygon points="405.6,459.2 434.1,453.2 434.1,464.0 405.6,470.5" fill="#e8d420"/><polygon points="437.6,433.7 468.1,428.6 468.1,458.3 437.6,465.0" fill="#ecd800"/><polygon points="439.4,435.2 466.4,430.6 466.4,457.0 439.4,462.8" fill="#e6de70"/><polygon points="439.4,452.1 466.4,446.7 466.4,457.0 439.4,462.8" fill="#e8d420"/><polygon points="469.6,428.3 493.6,424.5 493.6,438.0 469.6,442.4" fill="#ecd800"/><polygon points="471.3,429.7 492.0,426.4 492.0,436.6 471.3,440.4" fill="#e6de70"/><polygon points="471.3,436.5 492.0,432.9 492.0,436.6 471.3,440.4" fill="#e8d420"/><polygon points="468.1,428.6 473.5,427.7 468.1,433.1" fill="#a86000"/><polygon points="495.1,424.2 520.5,420.3 520.5,433.3 495.1,437.7" fill="#ecd800"/><polygon points="496.7,425.6 518.9,422.1 518.9,432.0 496.7,435.8" fill="#e6de70"/><polygon points="496.7,432.0 518.9,428.3 518.9,432.0 496.7,435.8" fill="#e8d420"/><polygon points="178.3,515.0 224.6,501.3 224.6,522.4 178.3,537.8" fill="#ecd800"/><polygon points="181.1,516.9 222.1,504.5 222.1,520.6 181.1,534.1" fill="#e6de70"/><polygon points="181.1,527.8 222.1,514.7 222.1,520.6 181.1,534.1" fill="#e8d420"/><polygon points="175.8,515.8 184.6,513.1 175.8,523.2" fill="#a86000"/><polygon points="227.0,500.6 262.5,490.8 262.5,510.6 227.0,521.6" fill="#ecd800"/><polygon points="229.5,502.4 260.1,493.8 260.1,509.0 229.5,518.3" fill="#e6de70"/><polygon points="229.5,512.5 260.1,503.4 260.1,509.0 229.5,518.3" fill="#e8d420"/><polygon points="264.7,490.2 305.0,479.8 305.0,498.3 264.7,510.0" fill="#ecd800"/><polygon points="267.1,492.0 302.8,482.6 302.8,496.7 267.1,506.9" fill="#e6de70"/><polygon points="267.1,501.4 302.8,491.5 302.8,496.7 267.1,506.9" fill="#e8d420"/><polygon points="307.1,479.3 326.9,474.5 326.9,492.3 307.1,497.7" fill="#ecd800"/><polygon points="309.3,481.0 324.7,477.1 324.7,490.7 309.3,494.9" fill="#e6de70"/><polygon points="309.3,489.8 324.7,485.7 324.7,490.7 309.3,494.9" fill="#e8d420"/><polygon points="328.9,474.0 347.9,469.5 347.9,486.7 328.9,491.8" fill="#ecd800"/><polygon points="331.0,475.6 345.9,472.1 345.9,485.2 331.0,489.1" fill="#e6de70"/><polygon points="331.0,484.1 345.9,480.3 345.9,485.2 331.0,489.1" fill="#e8d420"/><polygon points="349.8,469.1 385.0,461.2 385.0,477.3 349.8,486.2" fill="#ecd800"/><polygon points="351.9,470.6 383.0,463.5 383.0,475.9 351.9,483.6" fill="#e6de70"/><polygon points="351.9,478.8 383.0,471.3 383.0,475.9 351.9,483.6" fill="#e8d420"/><polygon points="386.8,460.8 402.0,457.5 402.0,473.2 386.8,476.9" fill="#ecd800"/><polygon points="388.7,462.3 400.1,459.8 400.1,471.8 388.7,474.5" fill="#e6de70"/><polygon points="388.7,470.0 400.1,467.4 400.1,471.8 388.7,474.5" fill="#e8d420"/><polygon points="469.6,443.9 498.6,438.6 498.6,452.0 469.6,458.0" fill="#ecd800"/><polygon points="471.3,445.3 497.0,440.5 497.0,450.7 471.3,455.9" fill="#e6de70"/><polygon points="471.3,452.0 497.0,446.9 497.0,450.7 471.3,455.9" fill="#e8d420"/><polygon points="500.1,438.3 520.5,434.7 520.5,447.6 500.1,451.7" fill="#ecd800"/><polygon points="501.7,439.6 518.9,436.5 518.9,446.3 501.7,449.7" fill="#e6de70"/><polygon points="501.7,446.0 518.9,442.7 518.9,446.3 501.7,449.7" fill="#e8d420"/><polygon points="210.2,529.5 254.2,515.4 254.2,535.5 210.2,551.1" fill="#ecd800"/><polygon points="212.8,531.2 251.8,518.6 251.8,533.9 212.8,547.5" fill="#e6de70"/><polygon points="212.8,541.5 251.8,528.2 251.8,533.9 212.8,547.5" fill="#e8d420"/><polygon points="256.4,514.7 277.9,508.2 277.9,527.5 256.4,534.7" fill="#ecd800"/><polygon points="258.8,516.4 275.6,511.2 275.6,526.0 258.8,531.5" fill="#e6de70"/><polygon points="258.8,525.9 275.6,520.5 275.6,526.0 258.8,531.5" fill="#e8d420"/><polygon points="254.2,515.4 262.0,513.0 254.2,521.9" fill="#a86000"/><polygon points="280.1,507.6 295.6,503.1 295.6,521.8 280.1,526.8" fill="#ecd800"/><polygon points="282.4,509.2 293.3,506.0 293.3,520.3 282.4,523.8" fill="#e6de70"/><polygon points="282.4,518.4 293.3,515.0 293.3,520.3 282.4,523.8" fill="#e8d420"/><polygon points="277.9,508.2 285.4,506.0 277.9,514.5" fill="#a86000"/><polygon points="297.6,502.5 322.7,495.4 322.7,513.3 297.6,521.2" fill="#ecd800"/><polygon points="299.9,504.1 320.6,498.2 320.6,511.8 299.9,518.2" fill="#e6de70"/><polygon points="299.9,513.0 320.6,506.8 320.6,511.8 299.9,518.2" fill="#e8d420"/><polygon points="324.7,494.9 361.3,485.1 361.3,520.6 324.7,532.6" fill="#ecd800"/><polygon points="326.9,496.4 359.3,487.7 359.3,519.2 326.9,529.7" fill="#e6de70"/><polygon points="326.9,516.8 359.3,507.0 359.3,519.2 326.9,529.7" fill="#e8d420"/><polygon points="363.2,484.6 376.7,481.2 376.7,497.6 363.2,501.4" fill="#ecd800"/><polygon points="365.2,486.1 374.7,483.7 374.7,496.2 365.2,498.8" fill="#e6de70"/><polygon points="365.2,494.1 374.7,491.6 374.7,496.2 365.2,498.8" fill="#e8d420"/><polygon points="378.5,480.7 412.1,472.6 412.1,488.0 378.5,497.1" fill="#ecd800"/><polygon points="380.5,482.2 410.2,474.9 410.2,486.6 380.5,494.6" fill="#e6de70"/><polygon points="380.5,490.0 410.2,482.3 410.2,486.6 380.5,494.6" fill="#e8d420"/><polygon points="413.8,472.1 430.4,468.3 430.4,483.3 413.8,487.6" fill="#ecd800"/><polygon points="415.6,473.6 428.6,470.5 428.6,481.9 415.6,485.2" fill="#e6de70"/><polygon points="415.6,480.9 428.6,477.7 428.6,481.9 415.6,485.2" fill="#e8d420"/><polygon points="432.1,467.9 444.1,465.2 444.1,479.8 432.1,482.8" fill="#ecd800"/><polygon points="433.9,469.3 442.4,467.3 442.4,478.5 433.9,480.6" fill="#e6de70"/><polygon points="433.9,476.4 442.4,474.4 442.4,478.5 433.9,480.6" fill="#e8d420"/><polygon points="430.4,468.3 436.2,466.9 430.4,473.1" fill="#a86000"/><polygon points="445.7,464.8 475.8,458.2 475.8,487.6 445.7,495.6" fill="#ecd800"/><polygon points="447.5,466.1 474.2,460.2 474.2,486.3 447.5,493.4" fill="#e6de70"/><polygon points="447.5,482.9 474.2,476.2 474.2,486.3 447.5,493.4" fill="#e8d420"/><polygon points="444.1,465.2 449.8,463.9 444.1,469.9" fill="#a86000"/><polygon points="477.4,457.9 501.0,452.9 501.0,466.3 477.4,471.7" fill="#ecd800"/><polygon points="479.0,459.2 499.4,454.9 499.4,465.0 479.0,469.7" fill="#e6de70"/><polygon points="479.0,465.8 499.4,461.3 499.4,465.0 479.0,469.7" fill="#e8d420"/><polygon points="502.5,452.6 522.9,448.6 522.9,461.4 502.5,465.9" fill="#ecd800"/><polygon points="504.1,453.9 521.3,450.4 521.3,460.2 504.1,464.0" fill="#e6de70"/><polygon points="504.1,460.3 521.3,456.6 521.3,460.2 504.1,464.0" fill="#e8d420"/><polygon points="180.4,564.8 226.6,547.5 226.6,568.5 180.4,587.6" fill="#ecd800"/><polygon points="183.2,566.5 224.1,550.9 224.1,567.0 183.2,583.7" fill="#e6de70"/><polygon points="183.2,577.4 224.1,561.1 224.1,567.0 183.2,583.7" fill="#e8d420"/><polygon points="228.9,546.6 271.6,531.8 271.6,551.3 228.9,567.6" fill="#ecd800"/><polygon points="231.4,548.2 269.3,534.9 269.3,549.8 231.4,564.1" fill="#e6de70"/><polygon points="231.4,558.3 269.3,544.3 269.3,549.8 231.4,564.1" fill="#e8d420"/><polygon points="273.8,531.1 289.4,525.9 289.4,544.8 273.8,550.5" fill="#ecd800"/><polygon points="276.1,532.6 287.2,528.9 287.2,543.4 276.1,547.3" fill="#e6de70"/><polygon points="276.1,541.9 287.2,538.0 287.2,543.4 276.1,547.3" fill="#e8d420"/><polygon points="271.6,531.8 279.2,529.3 271.6,538.1" fill="#a86000"/><polygon points="291.6,525.2 322.7,515.3 322.7,533.3 291.6,544.1" fill="#ecd800"/><polygon points="293.8,526.7 320.6,518.2 320.6,531.8 293.8,541.0" fill="#e6de70"/><polygon points="293.8,535.8 320.6,526.8 320.6,531.8 293.8,541.0" fill="#e8d420"/><polygon points="363.2,503.3 381.2,498.1 381.2,514.4 363.2,520.0" fill="#ecd800"/><polygon points="365.2,504.7 379.3,500.7 379.3,513.0 365.2,517.4" fill="#e6de70"/><polygon points="365.2,512.7 379.3,508.5 379.3,513.0 365.2,517.4" fill="#e8d420"/><polygon points="383.0,497.6 400.5,492.8 400.5,508.6 383.0,513.9" fill="#ecd800"/><polygon points="385.0,499.0 398.6,495.3 398.6,507.3 385.0,511.3" fill="#e6de70"/><polygon points="385.0,506.8 398.6,502.8 398.6,507.3 385.0,511.3" fill="#e8d420"/><polygon points="381.2,498.1 387.5,496.4 381.2,503.4" fill="#a86000"/><polygon points="402.3,492.4 414.9,489.0 414.9,504.4 402.3,508.1" fill="#ecd800"/><polygon points="404.1,493.7 413.1,491.3 413.1,503.0 404.1,505.6" fill="#e6de70"/><polygon points="404.1,501.2 413.1,498.7 413.1,503.0 404.1,505.6" fill="#e8d420"/><polygon points="416.6,488.5 444.1,481.4 444.1,496.1 416.6,503.9" fill="#ecd800"/><polygon points="418.5,489.9 442.4,483.6 442.4,494.8 418.5,501.5" fill="#e6de70"/><polygon points="418.5,497.2 442.4,490.7 442.4,494.8 418.5,501.5" fill="#e8d420"/><polygon points="414.9,489.0 420.9,487.4 414.9,494.0" fill="#a86000"/><polygon points="477.4,473.3 506.0,466.6 506.0,479.8 477.4,487.1" fill="#ecd800"/><polygon points="479.0,474.5 504.4,468.6 504.4,478.7 479.0,485.0" fill="#e6de70"/><polygon points="479.0,481.2 504.4,474.9 504.4,478.7 479.0,485.0" fill="#e8d420"/><polygon points="507.4,466.3 534.1,460.4 534.1,473.0 507.4,479.5" fill="#ecd800"/><polygon points="509.0,467.5 532.5,462.2 532.5,471.8 509.0,477.5" fill="#e6de70"/><polygon points="509.0,473.8 532.5,468.3 532.5,471.8 509.0,477.5" fill="#e8d420"/><polygon points="506.0,466.6 511.1,465.5 506.0,470.9" fill="#a86000"/><polygon points="211.2,577.1 247.7,562.6 247.7,582.9 211.2,598.7" fill="#ecd800"/><polygon points="213.8,578.6 245.2,566.0 245.2,581.5 213.8,595.0" fill="#e6de70"/><polygon points="213.8,589.0 245.2,575.8 245.2,581.5 213.8,595.0" fill="#e8d420"/><polygon points="249.9,561.7 266.2,555.5 266.2,575.2 249.9,581.9" fill="#ecd800"/><polygon points="252.3,563.2 263.8,558.8 263.8,573.8 252.3,578.5" fill="#e6de70"/><polygon points="252.3,572.9 263.8,568.3 263.8,573.8 252.3,578.5" fill="#e8d420"/><polygon points="268.4,554.7 289.4,546.9 289.4,565.9 268.4,574.3" fill="#ecd800"/><polygon points="270.7,556.2 287.2,550.1 287.2,564.5 270.7,571.0" fill="#e6de70"/><polygon points="270.7,565.5 287.2,559.2 287.2,564.5 270.7,571.0" fill="#e8d420"/><polygon points="291.6,546.2 316.9,537.3 316.9,575.5 291.6,586.1" fill="#ecd800"/><polygon points="293.8,547.6 314.7,540.2 314.7,574.2 293.8,582.8" fill="#e6de70"/><polygon points="293.8,569.2 314.7,561.0 314.7,574.2 293.8,582.8" fill="#e8d420"/><polygon points="318.9,536.6 343.1,528.4 343.1,545.7 318.9,554.6" fill="#ecd800"/><polygon points="321.1,538.0 341.1,531.2 341.1,544.4 321.1,551.6" fill="#e6de70"/><polygon points="321.1,546.6 341.1,539.5 341.1,544.4 321.1,551.6" fill="#e8d420"/><polygon points="345.1,527.8 363.7,521.7 363.7,538.5 345.1,545.1" fill="#ecd800"/><polygon points="347.1,529.2 361.6,524.4 361.6,537.2 347.1,542.2" fill="#e6de70"/><polygon points="347.1,537.4 361.6,532.5 361.6,537.2 347.1,542.2" fill="#e8d420"/><polygon points="365.5,521.2 393.9,512.3 393.9,546.0 365.5,556.4" fill="#ecd800"/><polygon points="367.5,522.5 392.0,514.8 392.0,544.7 367.5,553.7" fill="#e6de70"/><polygon points="367.5,541.6 392.0,533.2 392.0,544.7 367.5,553.7" fill="#e8d420"/><polygon points="395.7,511.8 417.1,505.4 417.1,537.8 395.7,545.3" fill="#ecd800"/><polygon points="397.6,513.1 415.2,507.8 415.2,536.6 397.6,542.7" fill="#e6de70"/><polygon points="397.6,531.3 415.2,525.5 415.2,536.6 397.6,542.7" fill="#e8d420"/><polygon points="418.8,504.9 439.4,499.1 439.4,513.8 418.8,520.2" fill="#ecd800"/><polygon points="420.6,506.2 437.6,501.3 437.6,512.6 420.6,517.8" fill="#e6de70"/><polygon points="420.6,513.6 437.6,508.4 437.6,512.6 420.6,517.8" fill="#e8d420"/><polygon points="417.1,505.4 423.0,503.7 417.1,510.4" fill="#a86000"/><polygon points="441.0,498.6 452.9,495.3 452.9,509.7 441.0,513.3" fill="#ecd800"/><polygon points="442.8,499.9 451.1,497.5 451.1,508.5 442.8,511.0" fill="#e6de70"/><polygon points="442.8,506.9 451.1,504.5 451.1,508.5 442.8,511.0" fill="#e8d420"/><polygon points="439.4,499.1 445.1,497.5 439.4,503.8" fill="#a86000"/><polygon points="454.5,494.9 479.0,488.2 479.0,517.4 454.5,525.3" fill="#ecd800"/><polygon points="456.2,496.1 477.4,490.4 477.4,516.3 456.2,523.0" fill="#e6de70"/><polygon points="456.2,512.6 477.4,506.3 477.4,516.3 456.2,523.0" fill="#e8d420"/><polygon points="480.6,487.8 504.1,481.8 504.1,495.0 480.6,501.6" fill="#ecd800"/><polygon points="482.2,489.1 502.5,483.8 502.5,493.9 482.2,499.5" fill="#e6de70"/><polygon points="482.2,495.7 502.5,490.2 502.5,493.9 482.2,499.5" fill="#e8d420"/><polygon points="505.6,481.4 528.2,475.8 528.2,488.6 505.6,494.6" fill="#ecd800"/><polygon points="507.2,482.6 526.7,477.7 526.7,487.4 507.2,492.6" fill="#e6de70"/><polygon points="507.2,488.9 526.7,483.9 526.7,487.4 507.2,492.6" fill="#e8d420"/><polygon points="194.0,609.0 231.4,592.1 231.4,613.0 194.0,631.2" fill="#ecd800"/><polygon points="196.6,610.4 228.9,595.8 228.9,611.7 196.6,627.2" fill="#e6de70"/><polygon points="196.6,621.0 228.9,605.8 228.9,611.7 196.6,627.2" fill="#e8d420"/><polygon points="191.5,610.2 200.1,606.2 191.5,617.4" fill="#a86000"/><polygon points="233.8,591.1 256.1,581.6 256.1,601.6 233.8,611.9" fill="#ecd800"/><polygon points="236.3,592.5 253.7,585.0 253.7,600.3 236.3,608.3" fill="#e6de70"/><polygon points="236.3,602.5 253.7,594.7 253.7,600.3 236.3,608.3" fill="#e8d420"/><polygon points="258.3,580.7 289.4,568.0 289.4,587.0 258.3,600.6" fill="#ecd800"/><polygon points="260.7,582.1 287.2,571.2 287.2,585.7 260.7,597.2" fill="#e6de70"/><polygon points="260.7,591.6 287.2,580.3 287.2,585.7 260.7,597.2" fill="#e8d420"/><polygon points="318.9,556.6 349.5,545.4 349.5,562.5 318.9,574.7" fill="#ecd800"/><polygon points="321.1,558.0 347.5,548.2 347.5,561.2 321.1,571.6" fill="#e6de70"/><polygon points="321.1,566.6 347.5,556.4 347.5,561.2 321.1,571.6" fill="#e8d420"/><polygon points="351.4,544.7 363.7,540.4 363.7,557.1 351.4,561.8" fill="#ecd800"/><polygon points="353.5,546.0 361.6,543.1 361.6,555.9 353.5,558.9" fill="#e6de70"/><polygon points="353.5,554.2 361.6,551.2 361.6,555.9 353.5,558.9" fill="#e8d420"/><polygon points="349.5,545.4 356.2,543.0 349.5,550.9" fill="#a86000"/><polygon points="418.8,521.9 439.4,515.5 439.4,530.2 418.8,537.2" fill="#ecd800"/><polygon points="420.6,523.2 437.6,517.8 437.6,529.0 420.6,534.8" fill="#e6de70"/><polygon points="420.6,530.5 437.6,524.9 437.6,529.0 420.6,534.8" fill="#e8d420"/><polygon points="441.0,515.0 452.9,511.3 452.9,525.8 441.0,529.7" fill="#ecd800"/><polygon points="442.8,516.2 451.1,513.6 451.1,524.6 442.8,527.3" fill="#e6de70"/><polygon points="442.8,523.2 451.1,520.6 451.1,524.6 442.8,527.3" fill="#e8d420"/><polygon points="480.6,503.2 495.5,498.9 495.5,512.4 480.6,517.0" fill="#ecd800"/><polygon points="482.2,504.3 493.8,501.0 493.8,511.3 482.2,514.8" fill="#e6de70"/><polygon points="482.2,510.9 493.8,507.5 493.8,511.3 482.2,514.8" fill="#e8d420"/><polygon points="497.0,498.5 522.9,491.4 522.9,504.3 497.0,511.9" fill="#ecd800"/><polygon points="498.6,499.7 521.3,493.4 521.3,503.2 498.6,509.8" fill="#e6de70"/><polygon points="498.6,506.1 521.3,499.6 521.3,503.2 498.6,509.8" fill="#e8d420"/><polygon points="198.1,631.6 242.9,609.9 242.9,630.4 198.1,653.7" fill="#ecd800"/><polygon points="200.7,632.9 240.5,613.6 240.5,629.2 200.7,649.6" fill="#e6de70"/><polygon points="200.7,643.5 240.5,623.4 240.5,629.2 200.7,649.6" fill="#e8d420"/><polygon points="245.2,608.9 286.8,590.2 286.8,609.3 245.2,629.3" fill="#ecd800"/><polygon points="247.7,610.2 284.5,593.5 284.5,608.0 247.7,625.6" fill="#e6de70"/><polygon points="247.7,619.9 284.5,602.7 284.5,608.0 247.7,625.6" fill="#e8d420"/><polygon points="288.9,589.3 327.7,573.1 327.7,610.7 288.9,629.4" fill="#ecd800"/><polygon points="291.2,590.6 325.6,576.1 325.6,609.5 291.2,625.9" fill="#e6de70"/><polygon points="291.2,612.3 325.6,596.6 325.6,609.5 291.2,625.9" fill="#e8d420"/><polygon points="286.8,590.2 294.2,587.0 286.8,596.4" fill="#a86000"/><polygon points="329.7,572.3 366.0,558.1 366.0,593.3 329.7,609.7" fill="#ecd800"/><polygon points="331.8,573.6 364.0,560.9 364.0,592.2 331.8,606.6" fill="#e6de70"/><polygon points="331.8,593.8 364.0,580.1 364.0,592.2 331.8,606.6" fill="#e8d420"/><polygon points="367.8,557.4 402.0,544.8 402.0,560.6 367.8,574.0" fill="#ecd800"/><polygon points="369.8,558.6 400.1,547.4 400.1,559.4 369.8,571.2" fill="#e6de70"/><polygon points="369.8,566.6 400.1,555.0 400.1,559.4 369.8,571.2" fill="#e8d420"/><polygon points="403.7,544.2 435.9,533.0 435.9,547.9 403.7,559.9" fill="#ecd800"/><polygon points="405.6,545.4 434.1,535.4 434.1,546.7 405.6,557.3" fill="#e6de70"/><polygon points="405.6,552.9 434.1,542.6 434.1,546.7 405.6,557.3" fill="#e8d420"/><polygon points="402.0,544.8 408.1,542.7 402.0,549.9" fill="#a86000"/><polygon points="437.6,532.5 468.1,522.5 468.1,552.2 437.6,563.8" fill="#ecd800"/><polygon points="439.4,533.7 466.4,524.7 466.4,551.1 439.4,561.3" fill="#e6de70"/><polygon points="439.4,550.6 466.4,540.9 466.4,551.1 439.4,561.3" fill="#e8d420"/><polygon points="469.6,522.0 493.6,514.5 493.6,528.0 469.6,536.0" fill="#ecd800"/><polygon points="471.3,523.1 492.0,516.6 492.0,526.9 471.3,533.7" fill="#e6de70"/><polygon points="471.3,529.8 492.0,523.1 492.0,526.9 471.3,533.7" fill="#e8d420"/><polygon points="495.1,514.0 509.6,509.6 509.6,522.7 495.1,527.5" fill="#ecd800"/><polygon points="496.7,515.1 508.0,511.7 508.0,521.7 496.7,525.3" fill="#e6de70"/><polygon points="496.7,521.6 508.0,518.0 508.0,521.7 496.7,525.3" fill="#e8d420"/><polygon points="511.1,509.2 525.2,505.0 525.2,517.8 511.1,522.3" fill="#ecd800"/><polygon points="512.7,510.3 523.7,507.0 523.7,516.7 512.7,520.2" fill="#e6de70"/><polygon points="512.7,516.5 523.7,513.1 523.7,516.7 512.7,520.2" fill="#e8d420"/><polygon points="198.1,656.1 215.8,646.7 215.8,668.1 198.1,678.2" fill="#ecd800"/><polygon points="200.7,657.4 213.2,650.6 213.2,667.0 200.7,674.0" fill="#e6de70"/><polygon points="200.7,667.9 213.2,660.9 213.2,667.0 200.7,674.0" fill="#e8d420"/><polygon points="195.6,657.5 204.2,652.9 195.6,664.7" fill="#a86000"/><polygon points="218.2,645.4 246.7,630.8 246.7,651.1 218.2,666.8" fill="#ecd800"/><polygon points="220.7,646.6 244.3,634.5 244.3,650.0 220.7,662.8" fill="#e6de70"/><polygon points="220.7,656.8 244.3,644.3 244.3,650.0 220.7,662.8" fill="#e8d420"/><polygon points="249.0,629.7 286.8,611.4 286.8,630.4 249.0,649.9" fill="#ecd800"/><polygon points="251.4,630.9 284.5,614.7 284.5,629.3 251.4,646.2" fill="#e6de70"/><polygon points="251.4,640.6 284.5,623.9 284.5,629.3 251.4,646.2" fill="#e8d420"/><polygon points="367.8,575.9 385.7,568.7 385.7,584.8 367.8,592.5" fill="#ecd800"/><polygon points="369.8,577.1 383.8,571.4 383.8,583.7 369.8,589.7" fill="#e6de70"/><polygon points="369.8,585.0 383.8,579.2 383.8,583.7 369.8,589.7" fill="#e8d420"/><polygon points="387.5,568.0 400.5,562.9 400.5,578.6 387.5,584.1" fill="#ecd800"/><polygon points="389.5,569.1 398.6,565.5 398.6,577.5 389.5,581.3" fill="#e6de70"/><polygon points="389.5,576.8 398.6,573.1 398.6,577.5 389.5,581.3" fill="#e8d420"/><polygon points="402.3,562.2 414.9,557.3 414.9,572.7 402.3,577.9" fill="#ecd800"/><polygon points="404.1,563.3 413.1,559.9 413.1,571.6 404.1,575.2" fill="#e6de70"/><polygon points="404.1,570.9 413.1,567.3 413.1,571.6 404.1,575.2" fill="#e8d420"/><polygon points="416.6,556.7 435.9,549.5 435.9,564.4 416.6,572.0" fill="#ecd800"/><polygon points="418.5,557.8 434.1,552.0 434.1,563.3 418.5,569.5" fill="#e6de70"/><polygon points="418.5,565.2 434.1,559.1 434.1,563.3 418.5,569.5" fill="#e8d420"/><polygon points="469.6,537.6 498.6,527.8 498.6,541.2 469.6,551.6" fill="#ecd800"/><polygon points="471.3,538.7 497.0,530.0 497.0,540.1 471.3,549.3" fill="#e6de70"/><polygon points="471.3,545.4 497.0,536.4 497.0,540.1 471.3,549.3" fill="#e8d420"/><polygon points="500.1,527.3 520.5,520.7 520.5,533.6 500.1,540.7" fill="#ecd800"/><polygon points="501.7,528.4 518.9,522.8 518.9,532.6 501.7,538.5" fill="#e6de70"/><polygon points="501.7,534.8 518.9,529.0 518.9,532.6 501.7,538.5" fill="#e8d420"/><polygon points="188.8,686.1 218.7,668.8 218.7,690.1 188.8,708.5" fill="#ecd800"/><polygon points="191.5,687.2 216.2,672.8 216.2,689.1 191.5,704.2" fill="#e6de70"/><polygon points="191.5,697.9 216.2,683.1 216.2,689.1 191.5,704.2" fill="#e8d420"/><polygon points="221.1,667.5 257.0,647.9 257.0,667.9 221.1,688.7" fill="#ecd800"/><polygon points="223.7,668.6 254.6,651.6 254.6,666.9 223.7,684.6" fill="#e6de70"/><polygon points="223.7,678.7 254.6,661.2 254.6,666.9 223.7,684.6" fill="#e8d420"/><polygon points="218.7,668.8 227.0,664.2 218.7,675.7" fill="#a86000"/><polygon points="259.2,646.7 280.6,635.7 280.6,654.9 259.2,666.7" fill="#ecd800"/><polygon points="261.6,647.9 278.3,639.2 278.3,653.8 261.6,662.9" fill="#e6de70"/><polygon points="261.6,657.4 278.3,648.4 278.3,653.8 261.6,662.9" fill="#e8d420"/><polygon points="257.0,647.9 264.7,643.8 257.0,654.4" fill="#a86000"/><polygon points="282.7,634.6 321.9,615.4 321.9,633.3 282.7,653.7" fill="#ecd800"/><polygon points="285.0,635.7 319.7,618.6 319.7,632.2 285.0,650.2" fill="#e6de70"/><polygon points="285.0,644.9 319.7,627.2 319.7,632.2 285.0,650.2" fill="#e8d420"/><polygon points="323.9,614.4 338.3,607.7 338.3,625.2 323.9,632.3" fill="#ecd800"/><polygon points="326.0,615.6 336.2,610.8 336.2,624.1 326.0,629.1" fill="#e6de70"/><polygon points="326.0,624.1 336.2,619.2 336.2,624.1 326.0,629.1" fill="#e8d420"/><polygon points="321.9,615.4 328.9,612.1 321.9,621.2" fill="#a86000"/><polygon points="340.2,606.8 375.9,590.8 375.9,607.2 340.2,624.2" fill="#ecd800"/><polygon points="342.3,607.9 374.0,593.7 374.0,606.2 342.3,621.1" fill="#e6de70"/><polygon points="342.3,616.2 374.0,601.6 374.0,606.2 342.3,621.1" fill="#e8d420"/><polygon points="377.8,590.0 399.8,580.7 399.8,596.5 377.8,606.4" fill="#ecd800"/><polygon points="379.7,591.1 397.9,583.4 397.9,595.4 379.7,603.5" fill="#e6de70"/><polygon points="379.7,599.0 397.9,591.0 397.9,595.4 379.7,603.5" fill="#e8d420"/><polygon points="375.9,590.8 382.3,588.1 375.9,596.1" fill="#a86000"/><polygon points="401.5,580.0 422.7,571.3 422.7,586.5 401.5,595.7" fill="#ecd800"/><polygon points="403.4,581.1 420.9,573.9 420.9,585.4 403.4,593.0" fill="#e6de70"/><polygon points="403.4,588.6 420.9,581.2 420.9,585.4 403.4,593.0" fill="#e8d420"/><polygon points="399.8,580.7 405.9,578.1 399.8,585.8" fill="#a86000"/><polygon points="424.4,570.6 440.7,564.2 440.7,578.9 424.4,585.8" fill="#ecd800"/><polygon points="426.2,571.7 438.9,566.6 438.9,577.9 426.2,583.2" fill="#e6de70"/><polygon points="426.2,579.0 438.9,573.7 438.9,577.9 426.2,583.2" fill="#e8d420"/><polygon points="442.4,563.5 458.2,557.5 458.2,571.8 442.4,578.2" fill="#ecd800"/><polygon points="444.1,564.6 456.5,559.8 456.5,570.7 444.1,575.7" fill="#e6de70"/><polygon points="444.1,571.6 456.5,566.7 456.5,570.7 444.1,575.7" fill="#e8d420"/><polygon points="440.7,564.2 446.4,562.0 440.7,568.9" fill="#a86000"/><polygon points="459.8,556.9 475.2,551.1 475.2,565.0 459.8,571.1" fill="#ecd800"/><polygon points="461.5,557.9 473.5,553.4 473.5,564.0 461.5,568.7" fill="#e6de70"/><polygon points="461.5,564.8 473.5,560.1 473.5,564.0 461.5,568.7" fill="#e8d420"/><polygon points="476.7,550.6 505.4,540.3 505.4,553.5 476.7,564.4" fill="#ecd800"/><polygon points="478.4,551.6 503.8,542.5 503.8,552.5 478.4,562.1" fill="#e6de70"/><polygon points="478.4,558.2 503.8,548.8 503.8,552.5 478.4,562.1" fill="#e8d420"/><polygon points="506.8,539.8 523.5,534.1 523.5,546.9 506.8,553.0" fill="#ecd800"/><polygon points="508.4,540.8 521.9,536.1 521.9,545.9 508.4,550.8" fill="#e6de70"/><polygon points="508.4,547.1 521.9,542.3 521.9,545.9 508.4,550.8" fill="#e8d420"/></g><!-- /LW -->
<!-- upper band -->
<polygon points="518,140 937,140 937,265 875,250 518,188" fill="url(#pU)"/>
<!-- right wall -->
<polygon points="872,140 937,140 937,535 867,535 867,250 872,250" fill="url(#pC)"/>
<!-- dark room -->
<polygon points="518,188 875,250 875,379 867,380 867,535 585,535 651,510 651,412 519,427" fill="url(#pD)"/>
<!-- green blobs -->
<polygon points="706,327 732,326 732,337 736,337 736,348 762,348 762,377 740,377 740,367 706,367" fill="url(#pDG)" opacity=".72"/>
<polygon points="782,492 800,490 802,505 806,505 806,530 780,531" fill="url(#pDG)" opacity=".45"/>
<!-- left lower ledge (front, in front of dark) -->
<polygon points="519,427 651,412 651,510 585,535 519,535" fill="url(#pB)"/>
<!-- middle block -->
<polygon points="695,403 880,376 880,442 695,491" fill="url(#pB)"/>
<!-- left window -->
<rect x="538" y="321" width="64" height="102" fill="#f0d850"/>
<rect x="552" y="338" width="38" height="85" fill="#efe4b8"/>
<rect x="541" y="350" width="11" height="40" fill="url(#pC)"/>
<rect x="590" y="350" width="11" height="40" fill="url(#pC)"/>
<rect x="538" y="321" width="64" height="6" fill="#f4ecd0"/>
<rect x="538" y="327" width="64" height="8" fill="#2a70d8"/>
<rect x="538" y="335" width="64" height="4" fill="#f4ecd0"/>
<rect x="538" y="340" width="15" height="11" rx="2" fill="#2a7ae0"/><rect x="589" y="339" width="13" height="11" rx="2" fill="#2a7ae0"/>
<rect x="538" y="389" width="15" height="11" rx="2" fill="#2a7ae0"/><rect x="589" y="388" width="13" height="11" rx="2" fill="#2a7ae0"/>
<polygon points="539,400 602,398 602,410 539,412" fill="#2a70d8"/>
<rect x="538" y="411" width="15" height="13" rx="2" fill="#2a7ae0"/><rect x="589" y="410" width="13" height="13" rx="2" fill="#2a7ae0"/>
<rect x="539" y="328.5" width="5" height="5" fill="#2aa050"/>
<rect x="539" y="401.5" width="5" height="8" fill="#2aa050"/>
<rect x="545.5" y="328.5" width="5" height="5" fill="#d8601a"/>
<rect x="545.5" y="401.3" width="5" height="8" fill="#d8601a"/>
<rect x="552.0" y="328.5" width="5" height="5" fill="#2aa050"/>
<rect x="552.0" y="401.1" width="5" height="8" fill="#2aa050"/>
<rect x="558.5" y="328.5" width="5" height="5" fill="#d8601a"/>
<rect x="558.5" y="400.9" width="5" height="8" fill="#d8601a"/>
<rect x="565.0" y="328.5" width="5" height="5" fill="#2aa050"/>
<rect x="565.0" y="400.7" width="5" height="8" fill="#2aa050"/>
<rect x="571.5" y="328.5" width="5" height="5" fill="#d8601a"/>
<rect x="571.5" y="400.5" width="5" height="8" fill="#d8601a"/>
<rect x="578.0" y="328.5" width="5" height="5" fill="#2aa050"/>
<rect x="578.0" y="400.3" width="5" height="8" fill="#2aa050"/>
<rect x="584.5" y="328.5" width="5" height="5" fill="#d8601a"/>
<rect x="584.5" y="400.0" width="5" height="8" fill="#d8601a"/>
<rect x="591.0" y="328.5" width="5" height="5" fill="#2aa050"/>
<rect x="591.0" y="399.8" width="5" height="8" fill="#2aa050"/>
<rect x="597.5" y="328.5" width="5" height="5" fill="#d8601a"/>
<rect x="597.5" y="399.6" width="5" height="8" fill="#d8601a"/>
<!-- archway right -->
<polygon points="785,239 875,252 875,286 785,279" fill="url(#pC)"/>
<polygon points="785,240 875,252 875,257 785,246" fill="#f2ead0"/><polygon points="785,247 875,258 875,261 785,250" fill="#ece0b0"/><polygon points="785,256.0 875,267.2 875,281.2 785,270.0" fill="#2a6ad8"/><polygon points="786,258.6 791,259.2 791,268.2 786,267.6" fill="#d84a1a"/><polygon points="791,259.2 796,259.9 796,268.9 791,268.2" fill="#2a9a4a"/><polygon points="796,259.9 801,260.5 801,269.5 796,268.9" fill="#d84a1a"/><polygon points="801,260.5 806,261.1 806,270.1 801,269.5" fill="#2a9a4a"/><polygon points="806,261.1 811,261.8 811,270.8 806,270.1" fill="#d84a1a"/><polygon points="811,261.8 816,262.4 816,271.4 811,270.8" fill="#2a9a4a"/><polygon points="816,262.4 821,263.0 821,272.0 816,271.4" fill="#d84a1a"/><polygon points="821,263.0 826,263.6 826,272.6 821,272.0" fill="#2a9a4a"/><polygon points="826,263.6 831,264.2 831,273.2 826,272.6" fill="#d84a1a"/><polygon points="831,264.2 836,264.9 836,273.9 831,273.2" fill="#2a9a4a"/><polygon points="836,264.9 841,265.5 841,274.5 836,273.9" fill="#d84a1a"/><polygon points="841,265.5 846,266.1 846,275.1 841,274.5" fill="#2a9a4a"/><polygon points="846,266.1 851,266.8 851,275.8 846,275.1" fill="#d84a1a"/><polygon points="851,266.8 856,267.4 856,276.4 851,275.8" fill="#2a9a4a"/><polygon points="856,267.4 861,268.0 861,277.0 856,276.4" fill="#d84a1a"/><polygon points="861,268.0 866,268.6 866,277.6 861,277.0" fill="#2a9a4a"/><polygon points="866,268.6 871,269.2 871,278.2 866,277.6" fill="#d84a1a"/><polygon points="871,269.2 874,269.6 874,278.6 871,278.2" fill="#2a9a4a"/>
<rect x="804" y="280" width="17" height="108" fill="url(#pC)"/>
<rect x="804" y="280" width="17" height="8" fill="#2a7ae0"/>
<rect x="805" y="289" width="15" height="8" fill="#2a9a4a"/><rect x="805" y="289" width="4" height="8" fill="#d84a1a"/><rect x="813" y="289" width="4" height="8" fill="#d84a1a"/>
<rect x="804" y="298" width="17" height="8" fill="#2a7ae0"/>
<rect x="803" y="353" width="17" height="7" fill="#2a7ae0"/>
<rect x="804" y="368" width="15" height="9" fill="#2a9a4a"/><rect x="804" y="368" width="4" height="9" fill="#d84a1a"/><rect x="812" y="368" width="4" height="9" fill="#d84a1a"/>
<rect x="802" y="382" width="18" height="7" fill="#2a7ae0"/>
<!-- ladder -->
<g fill="none">
<path d="M654 389 L654 535 M669 386 L669 535" stroke="#d06a1a" stroke-width="4.5"/>
<path d="M652 407 L673 403 M652 418 L673 414 M652 429 L673 425 M652 440 L673 436 M652 451 L673 447 M652 462 L673 458 M652 473 L673 469 M652 484 L673 480 M652 495 L673 491 M652 506 L673 502 M652 517 L673 513 M652 528 L673 524 " stroke="#d8701c" stroke-width="3.8"/>
<path d="M652 389 L652 535 M667 386 L667 535" stroke="#f09040" stroke-width="1" opacity=".7"/>
<path d="M667 416 V520 M652 395 L667 400 M652 505 L667 520" stroke="#7a5a68" stroke-width="1.1"/>
</g>
<!-- character big -->
<defs><pattern id="pG" patternUnits="userSpaceOnUse" width="7" height="7" patternTransform="rotate(20)"><rect width="7" height="7" fill="#44c040"/><path d="M0 2 L7 1 M0 5.5 L4 5" stroke="#1e461e" stroke-width="0.8" opacity=".8"/><rect x="5" y="3" width="1.5" height="1" fill="#78e868"/></pattern></defs>
<path d="M441 278 L446 276 L447 436 L442 436Z" fill="#1c1c1c"/>
<path d="M437 283 Q436 270 443 266 L447 268 Q441 273 442 283Z" fill="#2a2a2a"/>
<path d="M462 262 Q462 252 475 251 Q489 252 490 262 L492 266 L488 271 L466 272 Q462 268 462 262Z" fill="#2c2c2c"/>
<path d="M466 258 Q474 254 484 258 L484 266 L467 267Z" fill="#555"/>
<path d="M450 300 Q449 284 458 278 Q470 270 486 274 L497 284 L494 296 L496 330 L465 331 L455 322 Q451 312 450 300Z" fill="url(#pG)"/>
<path d="M472 276 L488 282 L491 296 L476 300Z" fill="#6ae060" opacity=".45"/>
<path d="M493 298 L498 296 L506 338 L508 350 L501 352 L497 340 L490 322Z" fill="#2e2e2e"/><path d="M484 300 L495 296 L496 330 L484 331Z" fill="#2a2a2a" opacity=".55"/><path d="M462 343 L474 343 L468 378 L455 381Z" fill="#2a2a2a" opacity=".45"/><path d="M458 398 L474 398 L471 428 L459 428Z" fill="#2e2e2e" opacity=".6"/>
<path d="M465 331 L491 331 L492 343 L464 343Z" fill="#2e2e2e"/>
<path d="M462 343 L491 343 L494 378 L455 381Z" fill="url(#pG)"/>
<path d="M456 372 L470 344 L462 343 L455 381Z" fill="#2a2a2a" opacity=".55"/>
<path d="M458 380 L478 379 L474 412 L470 428 L459 428 L460 410Z" fill="url(#pG)"/>
<path d="M458 410 L471 410 L470 428 L459 428Z" fill="#2e2e2e"/>
<path d="M479 379 L493 379 L492 404 L502 418 L493 421 L484 405Z" fill="url(#pG)"/>
<path d="M486 404 L494 402 L502 418 L493 421Z" fill="#2e2e2e"/>
<path d="M452 430 Q456 423 470 424 L481 432 L480 437 L454 437Z" fill="#262626"/>
<path d="M490 418 Q496 413 504 415 L519 425 L517 430 L494 429Z" fill="#262626"/>
<!-- character small -->
<ellipse cx="886" cy="295" rx="4.5" ry="6" fill="#262626"/>
<path d="M879 302 L892 301 L894 318 L891 332 L892 352 L889 372 L885 372 L884 352 L881 372 L876 372 L878 350 L877 332 Q876 316 879 302Z" fill="url(#pG)"/>
<path d="M878 326 L891 325 L891 335 L878 336Z" fill="#2a2a2a"/>
<path d="M876 371 L884 368 L885 377 L873 378Z M885 370 L891 370 L894 376 L886 377Z" fill="#222"/>
<path d="M877 318 L873 340 L875 341 L879 325Z" fill="#2a2a2a"/>
<!-- character tiny -->
<rect x="899" y="480" width="16" height="36" fill="none" stroke="#e8e0a0" stroke-width=".8"/>
<path d="M904 489 L910 489 L913 512 L901 513Z" fill="url(#pG)"/><ellipse cx="907" cy="486" rx="2.5" ry="3" fill="#222"/>
<!-- wireframe -->
<g stroke="#7a5a68" stroke-width="1.2" fill="none" opacity=".95">
<path d="M447 140 V535"/>
<path d="M519 140 V535"/>
<path d="M518 178 L530 160 L537 140"/>
<path d="M518 178 L910 240"/>
<path d="M394 447 V535 M394 457 L600 428 L668 416"/>
<path d="M519 501 L531 512 V535 M531 512 L597 496 V535 M585 486 L597 496 M519 501 L585 486"/>
<path d="M697 404 L713 409 L918 377 M713 409 V502 M697 495 L713 502 L900 437 M918 377 V438 L900 437"/>
<path d="M890 205 V535 M909 205 V535 M877 204 L897 199 L916 205"/>
<path d="M891 232 L910 240 V252 L891 252"/>
<path d="M620 535 L700 510"/>
</g>
<!-- top-right dark corner -->
<!-- frame border -->
<rect x="211.5" y="140.5" width="724" height="393" fill="none" stroke="#e8a012" stroke-width="1.5"/>
<polygon points="923,536 938,536 938,166 934,166" fill="#282828"/><path d="M934 166 L923 536" stroke="#e8a012" stroke-width="1.5"/>
<!-- axis gizmo -->
<path d="M241 480 V504" stroke="#1030f0" stroke-width="2"/>
<path d="M241 504 H252" stroke="#10d010" stroke-width="2"/>
<path d="M252 504 H263" stroke="#f01010" stroke-width="2"/>
<text x="244" y="483" font-family="Liberation Sans" font-size="10" fill="#3040e0">Z:</text>
<text x="254" y="508" font-family="Liberation Sans" font-size="10" fill="#20d020">Y:</text>
<text x="265" y="508" font-family="Liberation Sans" font-size="10" fill="#f02020">X:</text>
</svg>



<!-- VIEWPORT TOOLBAR -->
<svg class="a" style="left:871px;top:140px" width="66" height="32"><polygon points="0,0 66,0 66,28" fill="#141414"/><polygon points="14,0 66,22 66,29 8,2" fill="#9a9a9a" opacity=".75"/><polyline points="0,1 15,1 66,26" stroke="#e8a010" stroke-width="1.5" fill="none"/></svg>

<style>
.pl{position:absolute;top:144px;height:26px;background:rgba(240,236,190,.72);border:1px solid rgba(50,45,20,.7);border-radius:6px;overflow:hidden}
.og{position:absolute;top:0;height:26px;background:#d08c1c}
.sp{position:absolute;top:0;width:1px;height:26px;background:rgba(50,45,20,.6)}
.vt{position:absolute;white-space:nowrap;line-height:1;font-weight:bold;color:#2a2a2a;font-size:11px;top:152px}
.dm{position:absolute;width:0;height:0;border-left:2.5px solid transparent;border-right:2.5px solid transparent;border-top:3px solid #222}
</style>
<div class="pl" style="left:215px;width:22px"></div>
<svg class="a" style="left:221px;top:154px" width="11" height="7"><path d="M0 0 L10 0 L5 6Z" fill="#222"/></svg>
<div class="pl" style="left:241px;width:95px"></div>
<svg class="a" style="left:247px;top:150px" width="18" height="14"><path d="M2 8 L8 2 L16 4 L15 9 L8 13 L2 11Z" fill="#4a90e8"/><path d="M8 2 L16 4 L10 7 L3 6Z" fill="#9ac8f8"/></svg>
<div class="vt" style="left:268px">Perspective</div>
<div class="pl" style="left:340px;width:47px"></div>
<svg class="a" style="left:346px;top:148px" width="18" height="18"><path d="M2 5 L9 2 L16 5 L16 13 L9 17 L2 13Z" fill="#3a6ad8"/><path d="M2 5 L9 2 L16 5 L9 8Z" fill="#9ab8f0"/><path d="M9 8 L16 5 L16 13 L9 17Z" fill="#2a4ab8"/></svg>
<div class="vt" style="left:366px;font-size:12px">Lit</div>
<div class="pl" style="left:416px;width:100px"><div class="og" style="left:0;width:24px"></div></div>
<svg class="a" style="left:419px;top:148px" width="18" height="18"><path d="M9 1 L12 4 L6 4Z M9 17 L12 14 L6 14Z M1 9 L4 6 L4 12Z M17 9 L14 6 L14 12Z M9 4 V14 M4 9 H14" fill="#222" stroke="#222" stroke-width="1.2"/><rect x="6" y="6" width="6" height="6" rx="1" fill="#7aa8f0"/></svg>
<svg class="a" style="left:443px;top:147px" width="20" height="20"><path d="M10 1 L13 4 L7 4Z M10 19 L13 16 L7 16Z M1 10 L4 7 L4 13Z M19 10 L16 7 L16 13Z" fill="#444"/><circle cx="10" cy="10" r="6" fill="#444"/><text x="5" y="13" font-family="Liberation Sans" font-weight="bold" font-size="7" fill="#eee">2D</text></svg>
<svg class="a" style="left:470px;top:148px" width="18" height="18"><path d="M14 4 A7 7 0 1 0 16 10" stroke="#333" stroke-width="2" fill="none"/><path d="M12 1 L17 4 L12 7Z" fill="#333"/><rect x="6" y="6" width="7" height="7" rx="1" fill="#7aa8f0"/></svg>
<svg class="a" style="left:495px;top:147px" width="18" height="18"><path d="M1 17 L6 17 L1 12Z M17 1 L12 1 L17 6Z M3 15 L15 3" fill="#222" stroke="#222" stroke-width="1.5"/><rect x="7" y="6" width="6" height="6" rx="1" fill="#7aa8f0"/></svg>
<div class="pl" style="left:519px;width:23px"></div>
<svg class="a" style="left:522px;top:148px" width="18" height="18"><path d="M2 5 L9 2 L16 5 L16 13 L9 16 L2 13Z" fill="#a8a888"/><path d="M2 5 L9 2 L16 5 L9 8Z" fill="#333"/></svg>
<div class="pl" style="left:546px;width:82px"><div class="og" style="left:24px;width:25px"></div><div class="sp" style="left:24px"></div><div class="sp" style="left:49px"></div></div>
<svg class="a" style="left:549px;top:148px" width="18" height="18"><path d="M2 12 Q7 4 15 6 M11 3 L15 6 L11 8 M5 9 V14" stroke="#333" stroke-width="1.2" fill="none"/><path d="M7 15 L11 15 L9 17Z" fill="#333"/></svg>
<svg class="a" style="left:575px;top:149px" width="16" height="16"><g stroke="#222" stroke-width="1.2" fill="none"><rect x="1.5" y="1.5" width="13" height="13"/><path d="M4.7 1.5 V14.5 M8 1.5 V14.5 M11.3 1.5 V14.5 M1.5 4.7 H14.5 M1.5 8 H14.5 M1.5 11.3 H14.5"/></g></svg>
<div class="vt" style="left:603px;font-size:12.5px">10</div>
<div class="dm" style="left:609px;top:165px"></div>
<div class="pl" style="left:632px;width:60px"><div class="og" style="left:0;width:23px"></div><div class="sp" style="left:23px"></div></div>
<svg class="a" style="left:635px;top:148px" width="18" height="18"><path d="M2 15 L9 3 L16 15Z" fill="none" stroke="#222" stroke-width="1.4"/><path d="M8 8 Q12 9 13 13" stroke="#222" fill="none"/></svg>
<div class="vt" style="left:664px;font-size:12.5px">10°</div>
<div class="dm" style="left:670px;top:165px"></div>
<div class="pl" style="left:697px;width:111px"><div class="sp" style="left:24px"></div></div>
<svg class="a" style="left:700px;top:148px" width="18" height="18"><path d="M6 3 Q16 3 16 9 Q16 15 6 15 L6 12 Q12 12 12 9 Q12 6 6 6Z" fill="#333"/><path d="M2 5 Q6 9 2 13 M4 4 Q9 9 4 14" stroke="#555" fill="none"/></svg>
<div class="vt" style="left:734px;font-size:11.5px">Foreground</div>
<div class="dm" style="left:761px;top:165px"></div>
<div class="pl" style="left:812px;width:67px"><div class="og" style="left:0;width:24px"></div><div class="sp" style="left:24px"></div></div>
<svg class="a" style="left:817px;top:149px" width="15" height="15"><path d="M2 13 L11 4 M6 3 L12 3 L12 9" stroke="#222" stroke-width="2" fill="none"/><rect x="1" y="11" width="3" height="3" fill="#222"/></svg>
<div class="vt" style="left:845px;font-size:12.5px">0.25</div>
<div class="dm" style="left:856px;top:165px"></div>
<div class="pl" style="left:884px;width:48px;background:rgba(220,216,180,.8)"></div>
<svg class="a" style="left:888px;top:150px" width="22" height="14"><path d="M2 5 L10 5 M2 8 L10 8" stroke="#555"/><rect x="9" y="3" width="9" height="8" fill="#333"/><circle cx="11" cy="3" r="2.5" fill="#333"/><circle cx="16" cy="3" r="2.5" fill="#333"/><path d="M18 5 L21 3 L21 11 L18 9Z" fill="#333"/></svg>
<div class="vt" style="left:915px;font-size:12.5px">4</div>
<!-- BOTTOM PANEL -->
<div class="a" style="left:213px;top:541px;width:149px;height:22px;background:#2a2a2a;border-radius:2px 2px 0 0"></div>
<svg class="a" style="left:219px;top:544px" width="16" height="16"><path d="M2 1 L13 1 L15 4 L15 15 L2 15Z" fill="#c8d8f8"/><path d="M4 5 L9 8 L4 11" stroke="#1a2a4a" stroke-width="1.8" fill="none"/><path d="M9 13 L13 13" stroke="#1a2a4a" stroke-width="1.5"/></svg>
<div class="t sh" style="left:241px;top:546px;color:#e0e0e0;font-size:12px">Resultados del cor</div>
<div class="x" style="left:346px;top:546px;color:#555">×</div>
<div class="a" style="left:364px;top:541px;width:150px;height:22px;background:#3a3a3a;border-radius:2px 2px 0 0"></div>
<svg class="a" style="left:369px;top:543px" width="18" height="18"><path d="M7 11 L2 16" stroke="#7a9ae0" stroke-width="2.5" stroke-linecap="round"/><circle cx="11" cy="7" r="6" fill="#ddd"/><circle cx="11" cy="7" r="4.5" fill="url(#bg1)"/></svg>
<div class="t sh" style="left:392px;top:546px;color:#e0e0e0;font-size:12px">Buscar resultados</div>
<div class="x" style="left:497px;top:546px;color:#555">×</div>
<div class="a" style="left:209px;top:563px;width:730px;height:164px;background:#383838"></div>
<div class="a" style="left:211px;top:565px;width:696px;height:21px;background:#d0d0d0;border-radius:3px"></div>
<div class="t" style="left:216px;top:570px;color:#8a8a8a;font-size:12px">Introducir el nombre de la función o evento para encontrar referencias...</div>
<svg class="a" style="left:889px;top:567px" width="17" height="17"><circle cx="10" cy="7" r="5" fill="none" stroke="#111" stroke-width="2.2"/><path d="M6.5 10.5 L3 14" stroke="#111" stroke-width="2.6" stroke-linecap="round"/></svg>
<div class="a" style="left:910px;top:565px;width:25px;height:21px;background:linear-gradient(#e0e0e0,#b8b8b8);border-radius:2px"></div>
<svg class="a" style="left:914px;top:567px" width="16" height="16"><path d="M4 3 L6.5 3 L7 7 L7 14 Q4.5 15 2 14 L2 9Z M9.5 3 L12 3 L14 9 L14 14 Q11.5 15 9 14 L9 7Z" fill="#111"/><rect x="7" y="5" width="2" height="3" fill="#333"/></svg>
<div class="a" style="left:211px;top:590px;width:726px;height:135px;background:#1c1c1c;border:1px solid #050505"></div>

<!-- DETAILS PANEL -->
<div class="a" style="left:948px;top:48px;width:150px;height:22px;background:#3a3a3a;border-radius:2px 2px 0 0"></div>
<svg class="a" style="left:954px;top:49px" width="18" height="18"><path d="M10 11 L16 17" stroke="#5a8ae8" stroke-width="2.5" stroke-linecap="round"/><circle cx="8" cy="8" r="7" fill="#5a8ae8"/><circle cx="8" cy="8" r="5.5" fill="url(#ig1)"/><defs><radialGradient id="ig1" cx=".4" cy=".35" r=".8"><stop offset="0" stop-color="#ddd"/><stop offset="1" stop-color="#444"/></radialGradient></defs><text x="6" y="12" font-family="Liberation Serif" font-weight="bold" font-size="10" fill="#fff">i</text></svg>
<div class="t sh" style="left:976px;top:53px;color:#e0e0e0;font-size:12.5px">Detalles</div>
<div class="x" style="left:1081px;top:53px;color:#555">×</div>
<div class="a" style="left:944px;top:70px;width:422px;height:658px;background:#3c3c3c"></div>
<div class="a" style="left:948px;top:75px;width:342px;height:18px;background:#d0d0d0;border-radius:3px"></div>
<div class="t" style="left:953px;top:78px;color:#8a8a8a;font-size:12px">Search Details</div>
<svg class="a" style="left:1272px;top:75px" width="18" height="18"><circle cx="10" cy="7.5" r="5" fill="none" stroke="#111" stroke-width="2.2"/><path d="M6.5 11 L3 14.5" stroke="#111" stroke-width="2.6" stroke-linecap="round"/></svg>
<div class="a" style="left:1299px;top:73px;width:26px;height:22px;background:linear-gradient(#d8d8d8,#bcbcbc);border-radius:2px"></div>
<svg class="a" style="left:1303px;top:77px" width="18" height="14"><g fill="#444"><rect x="1" y="1" width="3" height="2"/><rect x="5" y="1" width="12" height="2"/><rect x="1" y="4" width="3" height="2"/><rect x="5" y="4" width="12" height="2"/><rect x="1" y="7" width="3" height="2"/><rect x="5" y="7" width="12" height="2"/><rect x="1" y="10" width="3" height="2"/><rect x="5" y="10" width="12" height="2"/></g></svg>
<svg class="a" style="left:1328px;top:77px" width="32" height="14"><ellipse cx="10" cy="7" rx="9" ry="5" fill="#d0d0d0"/><circle cx="10" cy="7" r="3.2" fill="#4a6a9a"/><path d="M22 5 L30 5 L26 9Z" fill="#ddd"/></svg>
<div class="a" style="left:946px;top:96px;width:415px;height:28px;background:#2e2e2e;border-radius:3px 3px 0 0"></div>
<svg class="a" style="left:949px;top:107px" width="8" height="8"><path d="M7 0 L7 7 L0 7Z" fill="#aaa"/></svg>
<div class="t b sh" style="left:960px;top:105px;color:#e8e8e8;font-size:12.5px">Variable</div>
<div class="a" style="left:946px;top:124px;width:415px;height:107px;background:#3e3e3e"></div>
<div class="a" style="left:946px;top:232px;width:415px;height:28px;background:#2e2e2e;border-radius:3px 3px 0 0"></div>
<svg class="a" style="left:949px;top:243px" width="8" height="8"><path d="M7 0 L7 7 L0 7Z" fill="#aaa"/></svg>
<div class="t b sh" style="left:960px;top:241px;color:#e8e8e8;font-size:12.5px">Transformación</div>
<div class="a" style="left:946px;top:260px;width:415px;height:110px;background:#3e3e3e"></div>
<div class="a" style="left:946px;top:371px;width:415px;height:28px;background:#2e2e2e;border-radius:3px 3px 0 0"></div>
<svg class="a" style="left:949px;top:382px" width="8" height="8"><path d="M7 0 L7 7 L0 7Z" fill="#aaa"/></svg>
<div class="t b sh" style="left:960px;top:380px;color:#e8e8e8;font-size:12.5px">Sockets</div>
<div class="a" style="left:946px;top:399px;width:415px;height:41px;background:#3e3e3e"></div>
<div class="a" style="left:946px;top:441px;width:415px;height:28px;background:#2e2e2e;border-radius:3px 3px 0 0"></div>
<svg class="a" style="left:949px;top:452px" width="8" height="8"><path d="M7 0 L7 7 L0 7Z" fill="#aaa"/></svg>
<div class="t b sh" style="left:960px;top:450px;color:#e8e8e8;font-size:12.5px">Sprite</div>
<div class="a" style="left:946px;top:469px;width:415px;height:139px;background:#3e3e3e"></div>
<div class="a" style="left:946px;top:610px;width:415px;height:28px;background:#2e2e2e;border-radius:3px 3px 0 0"></div>
<svg class="a" style="left:949px;top:621px" width="8" height="8"><path d="M7 0 L7 7 L0 7Z" fill="#aaa"/></svg>
<div class="t b sh" style="left:960px;top:619px;color:#e8e8e8;font-size:12.5px">Materials</div>
<div class="a" style="left:946px;top:638px;width:415px;height:86px;background:#3e3e3e"></div>
<div class="a" style="left:1086px;top:96px;width:1px;height:630px;background:#2a2a2a"></div>
<div class="a" style="left:1354px;top:96px;width:1px;height:630px;background:#2e2e2e"></div>
<div class="a" style="left:1349px;top:98px;width:10px;height:177px;background:#fff;border-radius:2px"></div>
<div class="t sh" style="left:962px;top:131px;color:#d8d8d8;font-size:11.5px;letter-spacing:-.15px">Nombre de la variable</div>
<div class="t sh" style="left:962px;top:153px;color:#d8d8d8;font-size:11.5px;letter-spacing:-.15px">Herramienta de ayuda</div>
<div class="t sh" style="left:962px;top:177px;color:#d8d8d8;font-size:11.5px;letter-spacing:-.15px">Categoría</div>
<div class="t sh" style="left:962px;top:202px;color:#d8d8d8;font-size:11.5px;letter-spacing:-.15px">Editable when Inherited</div>
<div class="t sh" style="left:962px;top:267px;color:#d8d8d8;font-size:11.5px;letter-spacing:-.15px">Ubicación</div>
<div class="t sh" style="left:962px;top:291px;color:#d8d8d8;font-size:11.5px;letter-spacing:-.15px">Rotación</div>
<div class="t sh" style="left:962px;top:315px;color:#d8d8d8;font-size:11.5px;letter-spacing:-.15px">Escala</div>
<div class="t sh" style="left:962px;top:340px;color:#d8d8d8;font-size:11.5px;letter-spacing:-.15px">Mobility</div>
<div class="t sh" style="left:962px;top:409px;color:#d8d8d8;font-size:11.5px;letter-spacing:-.15px">Puntos de acople padre</div>
<div class="t sh" style="left:962px;top:504px;color:#d8d8d8;font-size:11.5px;letter-spacing:-.15px">Source Flipbook</div>
<div class="t sh" style="left:962px;top:556px;color:#d8d8d8;font-size:11.5px;letter-spacing:-.15px">Play Rate</div>
<div class="t sh" style="left:962px;top:580px;color:#d8d8d8;font-size:11.5px;letter-spacing:-.15px">Sprite Color</div>
<div class="t sh" style="left:962px;top:671px;color:#d8d8d8;font-size:11.5px;letter-spacing:-.15px">Elemento 0</div>

<svg class="a" style="left:1015px;top:270px" width="9" height="6"><path d="M0 0 L9 0 L4.5 5Z" fill="#ccc"/></svg>
<svg class="a" style="left:1010px;top:294px" width="9" height="6"><path d="M0 0 L9 0 L4.5 5Z" fill="#ccc"/></svg>
<svg class="a" style="left:999px;top:318px" width="9" height="6"><path d="M0 0 L9 0 L4.5 5Z" fill="#ccc"/></svg>
<svg class="a" style="left:952px;top:579px" width="7" height="10"><path d="M1 1 L6 5 L1 9Z" fill="none" stroke="#bbb"/></svg>
<div class="a" style="left:1090px;top:128px;width:125px;height:17px;background:#d8d8d8;border-radius:3px"></div>
<div class="t" style="left:1095px;top:131px;color:#1a1a1a;font-size:11.5px">nivel16bf</div>
<div class="a" style="left:1090px;top:150px;width:125px;height:17px;background:#d8d8d8;border-radius:3px"></div>
<div class="a" style="left:1091px;top:173px;width:123px;height:19px;background:linear-gradient(90deg,#f4f4f4 0,#f0f0f0 80%,#c8c8c8 81%,#b0b0b0);border:1px solid #111;border-radius:2px"></div>
<div class="t" style="left:1097px;top:177px;color:#111;font-size:11.5px">Default</div>
<svg class="a" style="left:1197px;top:180px" width="10" height="5"><path d="M0 0 L9 0 L4.5 4.5Z" fill="#111"/></svg>
<div class="a" style="left:1091px;top:200px;width:14px;height:14px;background:#d0d0d0;border-radius:2px"></div>
<svg class="a" style="left:1092px;top:202px" width="12" height="10"><path d="M1 5 L4.5 8.5 L11 1.5" stroke="#7a7a7a" stroke-width="2.2" fill="none"/></svg>
<div class="a" style="left:1090px;top:265px;width:72px;height:17px;background:#d6d6d6;border-radius:3px;overflow:hidden"><div class="a" style="left:0;top:0;width:11px;height:17px;background:#c8230c;border-radius:3px 5px 5px 3px"></div></div>
<div class="t" style="left:1091px;top:268px;color:#fff;font-size:11.5px">X</div>
<div class="t" style="left:1109px;top:268px;color:#222;font-size:11.5px">0.0</div>
<svg class="a" style="left:1147px;top:269px" width="9" height="9"><path d="M0 0 L7 0 L0 7Z" fill="#111"/><path d="M9 2 L9 9 L2 9Z" fill="#111"/></svg>
<div class="a" style="left:1164px;top:265px;width:72px;height:17px;background:#d6d6d6;border-radius:3px;overflow:hidden"><div class="a" style="left:0;top:0;width:11px;height:17px;background:#6ea400;border-radius:3px 5px 5px 3px"></div></div>
<div class="t" style="left:1165px;top:268px;color:#fff;font-size:11.5px">Y</div>
<div class="t" style="left:1183px;top:268px;color:#222;font-size:11.5px">0.0</div>
<svg class="a" style="left:1221px;top:269px" width="9" height="9"><path d="M0 0 L7 0 L0 7Z" fill="#111"/><path d="M9 2 L9 9 L2 9Z" fill="#111"/></svg>
<div class="a" style="left:1237px;top:265px;width:72px;height:17px;background:#d6d6d6;border-radius:3px;overflow:hidden"><div class="a" style="left:0;top:0;width:11px;height:17px;background:#3a82f0;border-radius:3px 5px 5px 3px"></div></div>
<div class="t" style="left:1238px;top:268px;color:#fff;font-size:11.5px">Z</div>
<div class="t" style="left:1256px;top:268px;color:#222;font-size:11.5px">0.0</div>
<svg class="a" style="left:1294px;top:269px" width="9" height="9"><path d="M0 0 L7 0 L0 7Z" fill="#111"/><path d="M9 2 L9 9 L2 9Z" fill="#111"/></svg>
<div class="a" style="left:1090px;top:289px;width:72px;height:17px;background:#d6d6d6;border-radius:3px;overflow:hidden"><div class="a" style="left:0;top:0;width:11px;height:17px;background:#c8230c;border-radius:3px 5px 5px 3px"></div></div>
<div class="t" style="left:1091px;top:292px;color:#fff;font-size:11.5px">X</div>
<div class="t" style="left:1109px;top:292px;color:#222;font-size:11.5px">0.0 °</div>
<svg class="a" style="left:1147px;top:293px" width="9" height="9"><path d="M0 0 L7 0 L0 7Z" fill="#111"/><path d="M9 2 L9 9 L2 9Z" fill="#111"/></svg>
<div class="a" style="left:1164px;top:289px;width:72px;height:17px;background:#d6d6d6;border-radius:3px;overflow:hidden"><div class="a" style="left:0;top:0;width:11px;height:17px;background:#6ea400;border-radius:3px 5px 5px 3px"></div></div>
<div class="t" style="left:1165px;top:292px;color:#fff;font-size:11.5px">Y</div>
<div class="t" style="left:1183px;top:292px;color:#222;font-size:11.5px">0.0 °</div>
<svg class="a" style="left:1221px;top:293px" width="9" height="9"><path d="M0 0 L7 0 L0 7Z" fill="#111"/><path d="M9 2 L9 9 L2 9Z" fill="#111"/></svg>
<div class="a" style="left:1237px;top:289px;width:72px;height:17px;background:#d6d6d6;border-radius:3px;overflow:hidden"><div class="a" style="left:0;top:0;width:11px;height:17px;background:#3a82f0;border-radius:3px 5px 5px 3px"></div></div>
<div class="t" style="left:1238px;top:292px;color:#fff;font-size:11.5px">Z</div>
<div class="t" style="left:1256px;top:292px;color:#222;font-size:11.5px">0.0 °</div>
<svg class="a" style="left:1294px;top:293px" width="9" height="9"><path d="M0 0 L7 0 L0 7Z" fill="#111"/><path d="M9 2 L9 9 L2 9Z" fill="#111"/></svg>
<div class="a" style="left:1090px;top:313px;width:72px;height:17px;background:#d6d6d6;border-radius:3px;overflow:hidden"><div class="a" style="left:0;top:0;width:11px;height:17px;background:#c8230c;border-radius:3px 5px 5px 3px"></div></div>
<div class="t" style="left:1091px;top:316px;color:#fff;font-size:11.5px">X</div>
<div class="t" style="left:1109px;top:316px;color:#222;font-size:11.5px">1.0</div>
<svg class="a" style="left:1147px;top:317px" width="9" height="9"><path d="M0 0 L7 0 L0 7Z" fill="#111"/><path d="M9 2 L9 9 L2 9Z" fill="#111"/></svg>
<div class="a" style="left:1164px;top:313px;width:72px;height:17px;background:#d6d6d6;border-radius:3px;overflow:hidden"><div class="a" style="left:0;top:0;width:11px;height:17px;background:#6ea400;border-radius:3px 5px 5px 3px"></div></div>
<div class="t" style="left:1165px;top:316px;color:#fff;font-size:11.5px">Y</div>
<div class="t" style="left:1183px;top:316px;color:#222;font-size:11.5px">1.0</div>
<svg class="a" style="left:1221px;top:317px" width="9" height="9"><path d="M0 0 L7 0 L0 7Z" fill="#111"/><path d="M9 2 L9 9 L2 9Z" fill="#111"/></svg>
<div class="a" style="left:1237px;top:313px;width:72px;height:17px;background:#d6d6d6;border-radius:3px;overflow:hidden"><div class="a" style="left:0;top:0;width:11px;height:17px;background:#3a82f0;border-radius:3px 5px 5px 3px"></div></div>
<div class="t" style="left:1238px;top:316px;color:#fff;font-size:11.5px">Z</div>
<div class="t" style="left:1256px;top:316px;color:#222;font-size:11.5px">1.0</div>
<svg class="a" style="left:1294px;top:317px" width="9" height="9"><path d="M0 0 L7 0 L0 7Z" fill="#111"/><path d="M9 2 L9 9 L2 9Z" fill="#111"/></svg>

<svg class="a" style="left:1313px;top:313px" width="14" height="16"><path d="M3 8 L3 4 Q3 1 6 1 Q9 1 9 4" stroke="#888" stroke-width="1.6" fill="none"/><rect x="5" y="8" width="9" height="7" rx="1" fill="#888"/></svg>
<div class="a" style="left:1090px;top:336px;width:240px;height:20px;background:#5a5a5a;border-radius:9px;overflow:hidden"><div class="a" style="left:159px;top:0;width:81px;height:20px;background:#c08a12"></div><div class="a" style="left:79px;top:0;width:2px;height:20px;background:#333"></div><div class="a" style="left:157px;top:0;width:2px;height:20px;background:#333"></div></div>
<div class="a" style="left:1098px;top:341px;width:10px;height:10px;border-radius:50%;background:#fff"></div>
<div class="t" style="left:1127px;top:340px;color:#ddd;font-size:11.5px">Static</div>
<svg class="a" style="left:1176px;top:337px" width="14" height="18"><path d="M4 1 V17 M10 1 V17" stroke="#eee" stroke-width="1.5"/><rect x="1" y="9" width="6" height="4" rx="1" fill="#eee"/><rect x="7" y="4" width="6" height="4" rx="1" fill="#eee"/></svg>
<div class="t" style="left:1200px;top:340px;color:#ddd;font-size:11.5px;width:43px;overflow:hidden">Stationa</div>
<svg class="a" style="left:1253px;top:337px" width="18" height="18"><path d="M9 1 L13 5 L11 5 L11 7 L13 7 L13 5 L17 9 L13 13 L13 11 L11 11 L11 13 L13 13 L9 17 L5 13 L7 13 L7 11 L5 11 L5 13 L1 9 L5 5 L5 7 L7 7 L7 5 L5 5Z" fill="#fff" stroke="#222" stroke-width=".6"/></svg>
<div class="t" style="left:1279px;top:340px;color:#111;font-size:11.5px">Movable</div>
<div class="a" style="left:1091px;top:404px;width:75px;height:21px;background:#7a7a7a"></div>
<div class="t" style="left:1095px;top:409px;color:#ddd;font-size:11.5px">None</div>
<svg class="a" style="left:1171px;top:406px" width="15" height="15"><circle cx="9" cy="6" r="4.5" fill="none" stroke="#ddd" stroke-width="1.8"/><path d="M5.5 9.5 L2 13" stroke="#ddd" stroke-width="2.2" stroke-linecap="round"/></svg>
<svg class="a" style="left:1197px;top:408px" width="12" height="12"><path d="M2 2 L10 10 M10 2 L2 10" stroke="#eee" stroke-width="2.8"/></svg>
<!-- flipbook thumb -->
<div class="a" style="left:1094px;top:477px;width:66px;height:66px;background:#222"></div>
<svg class="a" style="left:1095px;top:478px" width="64" height="64">
<rect width="64" height="64" fill="#888"/>
<g fill="#5a5ab8"><rect x="0" y="0" width="8" height="8"/><rect x="0" y="16" width="8" height="8"/><rect x="0" y="32" width="8" height="8"/><rect x="0" y="48" width="8" height="8"/><rect x="56" y="8" width="8" height="8"/><rect x="56" y="24" width="8" height="8"/><rect x="56" y="40" width="8" height="8"/><rect x="56" y="56" width="8" height="8"/></g>
<rect x="9" y="0" width="46" height="60" fill="#e8c820"/>
<rect x="9" y="0" width="46" height="60" fill="url(#pC)"/><path d="M16 8 L52 8 L52 18 L48 18 L48 52 L52 52 L52 59 L18 59 L18 50 L22 50 L22 20 L16 20Z" fill="#0e2a0e"/><path d="M32 22 L36 22 L36 46 L32 46Z" fill="#d8c030" opacity=".6"/>
<rect x="20" y="8" width="2" height="4" fill="#fff"/><rect x="32" y="8" width="3" height="4" fill="#e44"/>
<rect x="0" y="61" width="64" height="3" fill="#6ac04a"/>
</svg>
<div class="a" style="left:1166px;top:490px;width:170px;height:19px;background:#5a5a5a;border-radius:3px"></div>
<div class="t sh" style="left:1168px;top:493px;color:#e8e8e8;font-size:11.5px">nivel16bf</div>
<svg class="a" style="left:1323px;top:497px" width="10" height="6"><path d="M0 0 L9 0 L4.5 4.5Z" fill="#ddd"/></svg>
<svg class="a" style="left:1172px;top:514px" width="60" height="14"><path d="M1 7 L7 1 L7 4 L13 4 L13 10 L7 10 L7 13Z" fill="#ddd"/><circle cx="32" cy="6" r="4.3" fill="none" stroke="#ddd" stroke-width="1.7"/><path d="M29 9 L26 12.5" stroke="#ddd" stroke-width="2" stroke-linecap="round"/><path d="M48 4 L52 4 Q54 4 54 6.5 Q54 9 52 9 L48 9" stroke="#e8e020" stroke-width="1.3" fill="none"/><path d="M47 2 L47 6 L49 4Z" fill="#e8e020"/></svg>
<div class="a" style="left:1090px;top:553px;width:105px;height:17px;background:#d6d6d6;border-radius:3px"></div>
<div class="t" style="left:1094px;top:556px;color:#222;font-size:11.5px">1.0</div>
<svg class="a" style="left:1181px;top:557px" width="9" height="9"><path d="M0 0 L7 0 L0 7Z" fill="#111"/><path d="M9 2 L9 9 L2 9Z" fill="#111"/></svg>
<div class="a" style="left:1090px;top:579px;width:234px;height:12px;background:#fff"></div>
<!-- material thumb -->
<div class="a" style="left:1094px;top:646px;width:66px;height:66px;background:#222"></div>
<svg class="a" style="left:1095px;top:647px" width="64" height="64">
<defs><linearGradient id="mg1" x1="0" y1="0" x2="0" y2="1"><stop offset="0" stop-color="#c8c8c8"/><stop offset=".6" stop-color="#b8b8b8"/><stop offset="1" stop-color="#8a8a8a"/></linearGradient></defs>
<rect width="64" height="64" fill="url(#mg1)"/>
<ellipse cx="32" cy="30" rx="22" ry="26" fill="#e4e4e4" stroke="#aaa"/>
<path d="M32 4 V56 M10 29 H54" stroke="#c0c0c0"/>
<rect x="0" y="60" width="64" height="4" fill="#5ac04a"/>
</svg>
<div class="a" style="left:1166px;top:646px;width:174px;height:20px;background:#5a5a5a;border-radius:3px"></div>
<div class="t sh" style="left:1168px;top:649px;color:#e8e8e8;font-size:11.5px;letter-spacing:-.2px">MaskedUnlitSpriteMaterial</div>
<svg class="a" style="left:1327px;top:653px" width="10" height="6"><path d="M0 0 L9 0 L4.5 4.5Z" fill="#ddd"/></svg>
<svg class="a" style="left:1172px;top:671px" width="60" height="14"><path d="M1 7 L7 1 L7 4 L13 4 L13 10 L7 10 L7 13Z" fill="#ddd"/><circle cx="32" cy="6" r="4.3" fill="none" stroke="#ddd" stroke-width="1.7"/><path d="M29 9 L26 12.5" stroke="#ddd" stroke-width="2" stroke-linecap="round"/><path d="M48 4 L52 4 Q54 4 54 6.5 Q54 9 52 9 L48 9" stroke="#e8e020" stroke-width="1.3" fill="none"/><path d="M47 2 L47 6 L49 4Z" fill="#e8e020"/></svg>
<div class="a" style="left:1166px;top:693px;width:64px;height:19px;background:linear-gradient(#e8e8e8,#b8b8b8);border-radius:2px;border:1px solid #222"></div>
<div class="t" style="left:1170px;top:697px;color:#111;font-size:11.5px">Texturas</div>
<svg class="a" style="left:1216px;top:700px" width="10" height="6"><path d="M0 0 L9 0 L4.5 4.5Z" fill="#111"/></svg>

<!-- TASKBAR -->
<div class="a" style="left:0;top:728px;width:1366px;height:40px;background:#d9d9d9"></div>
<div class="a" style="left:0;top:728px;width:48px;height:40px;background:#d0d0d0"></div>
<svg class="a" style="left:16px;top:741px" width="17" height="16"><g fill="#111"><path d="M0 2.2 L7 1.2 L7 7.4 L0 7.4Z"/><path d="M8 1 L16.5 0 L16.5 7.4 L8 7.4Z"/><path d="M0 8.4 L7 8.4 L7 14.6 L0 13.7Z"/><path d="M8 8.4 L16.5 8.4 L16.5 15.8 L8 14.7Z"/></g></svg>
<div class="a" style="left:48px;top:728px;width:343px;height:40px;background:#fff;border-top:1px solid #c8c8c8"></div>
<svg class="a" style="left:59px;top:740px" width="19" height="18"><circle cx="12" cy="7" r="5.5" fill="none" stroke="#222" stroke-width="1.5"/><path d="M8 11 L1.5 17" stroke="#222" stroke-width="1.6"/></svg>
<div class="t" style="left:88px;top:741px;color:#222;font-size:15px">Buscar</div>
<svg class="a" style="left:313px;top:728px" width="78" height="40">
<defs><linearGradient id="sk" x1="0" y1="0" x2="1" y2="0"><stop offset="0" stop-color="#a8d8f0"/><stop offset=".3" stop-color="#f8e0a0"/><stop offset=".7" stop-color="#f0d0d8"/><stop offset="1" stop-color="#90c8f0"/></linearGradient>
<linearGradient id="gr" x1="0" y1="0" x2="1" y2="0"><stop offset="0" stop-color="#a0b020"/><stop offset=".5" stop-color="#5a9a2a"/><stop offset="1" stop-color="#2a8a30"/></linearGradient></defs>
<path d="M4 18 Q6 3 39 3 Q72 3 74 18Z" fill="url(#sk)"/>
<path d="M1 21 Q8 14 20 13 Q30 11 40 10 Q52 11 62 13 Q72 15 77 21 Q76 30 70 33 Q62 38 56 36 L20 37 Q10 34 5 28 Q1 25 1 21Z" fill="url(#gr)"/>
<path d="M2 18 Q20 12 40 10 Q60 11 76 18" stroke="#2a5a20" stroke-width="2" fill="none"/>
<path d="M26 17 Q40 16 36 22 Q28 26 40 30 Q52 33 44 40 L56 40 Q62 32 52 28 Q44 25 50 21 Q56 17 44 14Z" fill="#78c0e8"/>
<ellipse cx="39" cy="40" rx="32" ry="6" fill="#3a98c8"/>
<path d="M22 40 Q28 35 36 36 L30 40Z M44 40 Q50 34 56 36 L52 40Z" fill="#1a5a2a"/>
<g fill="#c8d040" opacity=".5"><circle cx="8" cy="22" r="1.5"/><circle cx="14" cy="26" r="1.5"/><circle cx="18" cy="20" r="1.5"/><circle cx="64" cy="20" r="1.5"/><circle cx="70" cy="25" r="1.5"/></g>
</svg>
<svg class="a" style="left:408px;top:741px" width="17" height="16"><g fill="none" stroke="#222" stroke-width="1.3"><rect x="3" y="4" width="11" height="8"/><path d="M1 1 H16 M1 15 H16"/></g></svg>
<!-- FL studio -->
<svg class="a" style="left:454px;top:736px" width="26" height="26"><circle cx="13" cy="13" r="12" fill="#3a3a3a"/><path d="M8 9 Q13 4 18 9 Q20 16 13 21 Q6 16 8 9Z" fill="#f08a20"/><path d="M10 7 Q13 2 16 5" stroke="#8ac040" stroke-width="2" fill="none"/></svg>
<!-- explorer -->
<svg class="a" style="left:503px;top:738px" width="25" height="22"><path d="M1 3 L9 3 L11 5 L24 5 L24 20 L1 20Z" fill="#e8b020"/><path d="M1 8 L24 8 L24 20 L1 20Z" fill="#f8d050"/><rect x="8" y="12" width="9" height="6" fill="#2a7ad8"/></svg>
<div class="a" style="left:496px;top:765px;width:40px;height:3px;background:#2a6ad0"></div>
<!-- mail -->
<svg class="a" style="left:551px;top:738px" width="27" height="22"><path d="M1 8 L13 1 L26 8 L26 21 L1 21Z" fill="#1a78d0"/><path d="M1 8 L13 15 L26 8 L26 21 L1 21Z" fill="#3a98e8"/><path d="M5 8 L13 4 L22 8 L13 13Z" fill="#fff"/></svg>
<!-- paint -->
<svg class="a" style="left:600px;top:736px" width="27" height="25"><ellipse cx="12" cy="14" rx="11" ry="9" fill="#c8d8e8" stroke="#8aa" /><circle cx="7" cy="11" r="2" fill="#e44"/><circle cx="12" cy="8" r="2" fill="#4a4"/><circle cx="17" cy="10" r="2" fill="#44e"/><circle cx="8" cy="17" r="2" fill="#ee4"/><path d="M14 18 L25 2" stroke="#c08040" stroke-width="2.5"/></svg>
<!-- gamepad -->
<svg class="a" style="left:650px;top:738px" width="26" height="22"><path d="M4 4 Q13 1 22 4 Q26 10 25 19 Q22 21 19 17 L7 17 Q4 21 1 19 Q0 10 4 4Z" fill="#e8e8e8" stroke="#222" stroke-width="1.5"/><circle cx="8" cy="10" r="2" fill="#222"/><circle cx="18" cy="10" r="2" fill="#222"/></svg>
<!-- word -->
<svg class="a" style="left:700px;top:738px" width="24" height="22"><rect x="1" y="2" width="22" height="19" fill="#fff" stroke="#2a5aa8"/><text x="2" y="18" font-family="Liberation Serif" font-weight="bold" font-size="16" fill="#1a4a98">W</text></svg>
<!-- UE active -->
<div class="a" style="left:737px;top:728px;width:48px;height:40px;background:#f0f0f0"></div>
<div class="a" style="left:737px;top:765px;width:48px;height:3px;background:#2a6ad0"></div>
<div class="a" style="left:749px;top:736px;width:24px;height:24px;border-radius:50%;background:#111"></div>
<svg class="a" style="left:753px;top:740px" width="16" height="16"><path d="M3 4 Q6 2 7 4 L7 10 Q8 12 10 11 L10 4 Q11 2 13 3 L12 5 L12 11 Q12 13 14 12 Q11 15 8 14 Q5 13 5 10 L5 5 Q4 4 3 4Z" fill="#fff"/></svg>
<!-- android studio -->
<svg class="a" style="left:799px;top:737px" width="22" height="24"><circle cx="11" cy="12" r="10" fill="#3aaa6a"/><path d="M7 19 L11 7 L15 19" stroke="#fff" stroke-width="1.5" fill="none"/><circle cx="11" cy="9" r="3" fill="#1a4a3a"/></svg>
<!-- chrome -->
<svg class="a" style="left:847px;top:736px" width="25" height="25"><circle cx="12.5" cy="12.5" r="12" fill="#db4437"/><path d="M12.5 12.5 L2.1 18.5 A12 12 0 0 0 18.5 22.9Z" fill="#0f9d58"/><path d="M12.5 12.5 L18.5 22.9 A12 12 0 0 0 22.9 6.5 L12.5 6.5Z" fill="#f4b400"/><circle cx="12.5" cy="12.5" r="5.5" fill="#fff"/><circle cx="12.5" cy="12.5" r="4.3" fill="#4285f4"/></svg>
<!-- edge -->
<svg class="a" style="left:895px;top:736px" width="26" height="25"><circle cx="13" cy="12.5" r="12" fill="#1a8ad8"/><path d="M3 16 Q4 4 14 4 Q24 5 24 13 L10 13 Q11 20 20 20 Q14 26 8 22 Q3 19 3 16Z" fill="#5ac850"/><path d="M6 13 Q8 7 14 7 Q20 7 20 11 L8 11Z" fill="#fff" opacity=".0"/></svg>
<!-- firefox -->
<svg class="a" style="left:944px;top:736px" width="26" height="25"><circle cx="13" cy="13" r="11.5" fill="#f05a20"/><circle cx="13" cy="13" r="7" fill="#7a3ac8"/><path d="M2 10 Q5 2 13 1.5 Q22 2 24 10 Q20 5 14 6 Q20 10 17 17 Q12 22 6 18 Q2 14 2 10Z" fill="#ffb020"/></svg>
<!-- tray -->
<svg class="a" style="left:1043px;top:736px" width="26" height="24"><path d="M2 18 Q10 20 16 10 Q18 6 17 3 Q24 10 20 18 Q15 23 8 22 Q4 21 2 18Z" fill="#f0a020"/><circle cx="18" cy="5" r="5" fill="#d82020"/><text x="16" y="8" font-family="Liberation Sans" font-size="7" fill="#fff">1</text></svg>
<div class="t" style="left:1077px;top:742px;color:#222;font-size:14px">17°C</div>
<svg class="a" style="left:1122px;top:745px" width="14" height="8"><path d="M1 7 L7 1 L13 7" stroke="#222" stroke-width="1.4" fill="none"/></svg>
<svg class="a" style="left:1146px;top:741px" width="15" height="15"><circle cx="7.5" cy="7.5" r="6.3" fill="none" stroke="#222" stroke-width="1.4"/><circle cx="7.5" cy="7.5" r="3.2" fill="#222"/></svg>
<svg class="a" style="left:1169px;top:741px" width="17" height="15"><path d="M6 4 L15 4 L15 13 L6 13 M15 7 L16.5 7 L16.5 10 L15 10" stroke="#222" stroke-width="1.3" fill="none"/><path d="M1 7 L6 7 M3 5 V9" stroke="#222" stroke-width="1.5"/><path d="M3 2 V5 M5 2 V5" stroke="#222"/></svg>
<svg class="a" style="left:1192px;top:741px" width="18" height="15"><path d="M1 5 L4 5 L8 1.5 L8 13.5 L4 10 L1 10Z" fill="none" stroke="#222" stroke-width="1.3"/><path d="M11 5 Q12.5 7.5 11 10 M13.5 3 Q16 7.5 13.5 12" stroke="#555" stroke-width="1.1" fill="none"/></svg>
<div class="t" style="left:1222px;top:742px;color:#222;font-size:12px">ESP</div>
<div class="t" style="left:1267px;top:733px;color:#222;font-size:12px">21:49</div>
<div class="t" style="left:1255px;top:751px;color:#222;font-size:12px">22/4/2026</div>
<svg class="a" style="left:1325px;top:740px" width="17" height="17"><path d="M1 1 H16 V12 H10 L7 15 L7 12 H1Z" fill="none" stroke="#222" stroke-width="1.3"/></svg>
</body></html>
